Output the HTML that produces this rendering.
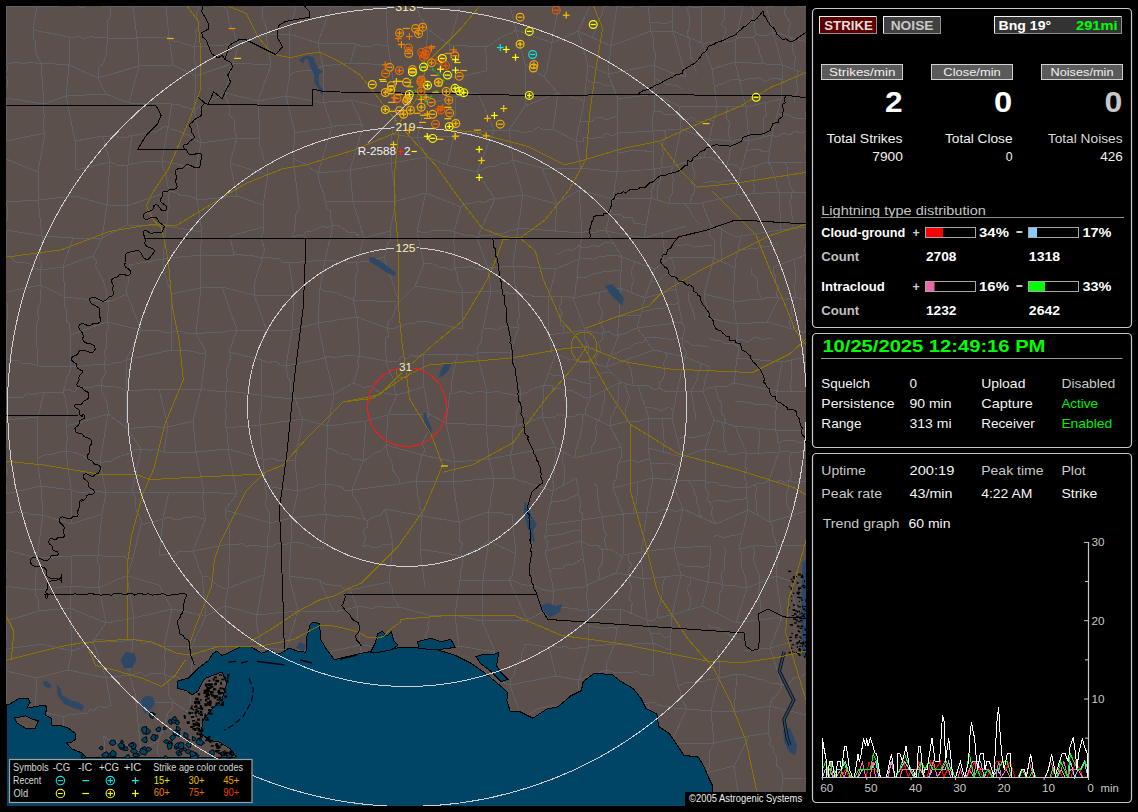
<!DOCTYPE html>
<html><head><meta charset="utf-8"><style>
html,body{margin:0;padding:0;background:#000;width:1138px;height:812px;overflow:hidden}
svg text{font-family:"Liberation Sans",sans-serif}
</style></head><body>
<svg width="1138" height="812" viewBox="0 0 1138 812" style="position:absolute;left:0;top:0"><defs><clipPath id="mc"><rect x="6" y="6" width="800" height="800"/></clipPath></defs><g clip-path="url(#mc)"><rect x="6" y="6" width="800" height="800" fill="#5c504c"/><g fill="none" stroke="#5f6367" stroke-width="1" shape-rendering="crispEdges"><polyline points="6,6 37,6"/><polyline points="6,6 6,32"/><polyline points="37,6 42,6 48,6 56,7 61,5 65,4 71,6"/><polyline points="37,6 33,30"/><polyline points="71,6 75,5 82,8 88,5 93,5 100,5 105,7 110,6"/><polyline points="110,6 133,6"/><polyline points="110,6 111,11 110,17 107,22 108,26 107,33 108,38"/><polyline points="133,6 166,6"/><polyline points="133,6 137,38"/><polyline points="166,6 200,6"/><polyline points="166,6 169,37"/><polyline points="200,6 205,5 213,6 218,7 224,6"/><polyline points="200,6 198,10 196,14 198,22 198,28 195,32 197,36 195,43 194,47"/><polyline points="224,6 227,10 228,16 229,22 232,28 234,32 236,39 239,44"/><polyline points="262,6 296,6"/><polyline points="262,6 262,11 262,18 265,23 266,27 266,35"/><polyline points="296,6 331,6"/><polyline points="296,6 289,34"/><polyline points="331,6 351,6"/><polyline points="331,6 318,43"/><polyline points="351,6 354,5 362,6 365,7 370,6 377,8 381,6 386,6"/><polyline points="386,6 415,6"/><polyline points="386,6 388,46"/><polyline points="415,6 422,8 425,8 430,5 437,5 442,8 447,5 453,7 460,6"/><polyline points="415,6 418,11 420,17 425,23 428,29"/><polyline points="460,6 489,6"/><polyline points="460,6 449,45"/><polyline points="489,6 510,6"/><polyline points="510,6 559,6"/><polyline points="510,6 516,30"/><polyline points="559,6 558,11 557,16 555,23 555,26 553,32 552,38 552,43"/><polyline points="590,6 594,4 602,4 606,7 611,5 617,6"/><polyline points="590,6 578,31"/><polyline points="617,6 622,7 627,7 631,7 637,5 644,7 648,6"/><polyline points="617,6 611,46"/><polyline points="648,6 672,6"/><polyline points="648,6 651,31"/><polyline points="672,6 677,7 683,5 688,6 697,8 701,6"/><polyline points="672,6 673,31"/><polyline points="701,6 743,6"/><polyline points="701,6 702,43"/><polyline points="743,6 736,39"/><polyline points="766,6 771,7 779,4 783,4 789,6 794,5 801,7 806,6"/><polyline points="766,6 773,32"/><polyline points="806,6 806,42"/><polyline points="6,32 6,63"/><polyline points="33,30 69,37"/><polyline points="33,30 33,37 35,41 35,46 36,52 38,58 41,63"/><polyline points="69,37 75,37 79,36 84,39 91,36 96,38 105,37 108,38"/><polyline points="69,37 69,65"/><polyline points="108,38 137,38"/><polyline points="108,38 107,44 106,47 106,55 105,58 103,64 99,67 98,72 98,78"/><polyline points="137,38 169,37"/><polyline points="137,38 139,66"/><polyline points="169,37 173,41 177,41 185,44 190,45 194,47"/><polyline points="169,37 173,65"/><polyline points="194,47 239,44"/><polyline points="194,47 196,76"/><polyline points="239,44 266,35"/><polyline points="239,44 233,63"/><polyline points="266,35 289,34"/><polyline points="266,35 271,65"/><polyline points="289,34 318,43"/><polyline points="289,34 290,75"/><polyline points="318,43 356,44"/><polyline points="318,43 323,66"/><polyline points="356,44 361,46 366,46 372,46 376,44 381,45 388,46"/><polyline points="356,44 354,50 352,57 350,63"/><polyline points="388,46 391,65"/><polyline points="428,29 449,45"/><polyline points="428,29 424,68"/><polyline points="449,45 485,47"/><polyline points="449,45 453,78"/><polyline points="485,47 490,45 497,40 500,38 508,34 512,33 516,30"/><polyline points="485,47 486,54 487,60 486,65 486,71"/><polyline points="516,30 552,43"/><polyline points="516,30 525,64"/><polyline points="552,43 578,31"/><polyline points="552,43 551,49 550,53 549,60 547,66 547,70 544,77"/><polyline points="578,31 611,46"/><polyline points="578,31 588,65"/><polyline points="611,46 651,31"/><polyline points="611,46 608,74"/><polyline points="651,31 673,31"/><polyline points="651,31 653,37 653,44 653,48 655,52 655,60 654,65"/><polyline points="673,31 702,43"/><polyline points="673,31 686,77"/><polyline points="702,43 707,43 712,42 720,41 724,42 732,41 736,39"/><polyline points="702,43 712,69"/><polyline points="736,39 741,37 745,37 753,38 756,34 762,36 768,35 773,32"/><polyline points="736,39 735,62"/><polyline points="773,32 806,42"/><polyline points="773,32 782,65"/><polyline points="806,42 806,74"/><polyline points="6,63 11,63 18,62 24,64 28,62 36,63 41,63"/><polyline points="6,63 8,70 5,74 8,81 7,86 5,92 6,98"/><polyline points="41,63 69,65"/><polyline points="41,63 44,104"/><polyline points="69,65 98,78"/><polyline points="69,65 66,96"/><polyline points="98,78 139,66"/><polyline points="98,78 106,94"/><polyline points="139,66 173,65"/><polyline points="139,66 129,103"/><polyline points="173,65 196,76"/><polyline points="196,76 233,63"/><polyline points="196,76 194,110"/><polyline points="233,63 271,65"/><polyline points="233,63 225,93"/><polyline points="271,65 258,101"/><polyline points="290,75 295,72 302,71 306,70 313,71 318,68 323,66"/><polyline points="290,75 286,96"/><polyline points="323,66 350,63"/><polyline points="323,66 324,103"/><polyline points="350,63 391,65"/><polyline points="391,65 397,111"/><polyline points="424,68 453,78"/><polyline points="424,68 425,105"/><polyline points="453,78 486,71"/><polyline points="525,64 544,77"/><polyline points="525,64 525,106"/><polyline points="544,77 558,93"/><polyline points="588,65 608,74"/><polyline points="588,65 584,102"/><polyline points="608,74 654,65"/><polyline points="608,74 618,99"/><polyline points="654,65 658,67 665,70 669,72 676,74 679,75 686,77"/><polyline points="654,65 655,94"/><polyline points="712,69 735,62"/><polyline points="712,69 717,106"/><polyline points="735,62 782,65"/><polyline points="735,62 746,107"/><polyline points="782,65 806,74"/><polyline points="782,65 782,70 783,76 782,81 781,88 782,93 781,99"/><polyline points="806,74 807,78 808,84 806,90 807,97 806,98 806,105"/><polyline points="6,98 44,104"/><polyline points="6,98 6,141"/><polyline points="44,104 66,96"/><polyline points="44,104 43,111 45,117 43,121 43,126 45,133"/><polyline points="66,96 106,94"/><polyline points="66,96 75,141"/><polyline points="106,94 129,103"/><polyline points="129,103 172,104"/><polyline points="172,104 179,104 183,107 189,108 194,110"/><polyline points="172,104 168,126"/><polyline points="194,110 225,93"/><polyline points="194,110 201,143"/><polyline points="225,93 258,101"/><polyline points="225,93 226,98 228,103 230,110 229,115 234,119 234,129 235,133 237,138"/><polyline points="258,101 286,96"/><polyline points="258,101 260,138"/><polyline points="286,96 324,103"/><polyline points="286,96 295,133"/><polyline points="324,103 328,102 336,101 342,101 345,101 351,100"/><polyline points="324,103 332,127"/><polyline points="351,100 397,111"/><polyline points="351,100 363,126"/><polyline points="397,111 425,105"/><polyline points="397,111 392,134"/><polyline points="425,105 456,96"/><polyline points="425,105 417,138"/><polyline points="456,96 463,96 467,92 473,94 478,93"/><polyline points="456,96 454,136"/><polyline points="478,93 494,130"/><polyline points="525,106 558,93"/><polyline points="525,106 509,130"/><polyline points="558,93 563,96 567,95 575,99 579,98 584,102"/><polyline points="558,93 553,129"/><polyline points="584,102 576,141"/><polyline points="618,99 655,94"/><polyline points="618,99 617,133"/><polyline points="655,94 679,106"/><polyline points="655,94 654,99 655,107 654,111 653,116 652,121 652,126 653,131"/><polyline points="679,106 717,106"/><polyline points="679,106 681,129"/><polyline points="717,106 746,107"/><polyline points="717,106 709,140"/><polyline points="746,107 781,99"/><polyline points="746,107 749,141"/><polyline points="781,99 772,135"/><polyline points="806,105 807,111 805,114 807,120 807,125 806,131"/><polyline points="6,141 45,133"/><polyline points="45,133 38,172"/><polyline points="75,141 103,136"/><polyline points="75,141 76,170"/><polyline points="103,136 110,136 115,135 119,138 127,137 132,135"/><polyline points="103,136 110,162"/><polyline points="132,135 137,135 141,134 148,133 154,131 157,131 164,127 168,126"/><polyline points="132,135 128,165"/><polyline points="168,126 171,129 178,131 183,133 190,136 194,139 201,143"/><polyline points="168,126 162,161"/><polyline points="201,143 237,138"/><polyline points="201,143 196,168"/><polyline points="237,138 260,138"/><polyline points="237,138 230,163"/><polyline points="260,138 259,145 262,150 262,154 264,160 268,164 267,169 268,175"/><polyline points="295,133 332,127"/><polyline points="295,133 293,158"/><polyline points="332,127 339,125 342,125 349,125 354,124 358,124 363,126"/><polyline points="332,127 318,173"/><polyline points="363,126 350,170"/><polyline points="392,134 417,138"/><polyline points="392,134 391,163"/><polyline points="417,138 454,136"/><polyline points="417,138 427,157"/><polyline points="454,136 494,130"/><polyline points="454,136 447,165"/><polyline points="494,130 509,130"/><polyline points="494,130 477,172"/><polyline points="509,130 514,130 521,132 528,132 533,131 538,127 542,129 548,129 553,129"/><polyline points="509,130 513,160"/><polyline points="553,129 576,141"/><polyline points="576,141 583,142 584,137 593,139 597,137 603,137 605,133 613,136 617,133"/><polyline points="576,141 581,168"/><polyline points="617,133 653,131"/><polyline points="617,133 617,172"/><polyline points="653,131 681,129"/><polyline points="653,131 654,169"/><polyline points="681,129 709,140"/><polyline points="681,129 673,166"/><polyline points="709,140 713,140 720,139 723,141 728,140 733,142 738,139 744,140 749,141"/><polyline points="709,140 704,157"/><polyline points="749,141 772,135"/><polyline points="749,141 741,170"/><polyline points="772,135 777,137 783,133 791,135 794,131 801,133 806,131"/><polyline points="772,135 768,162"/><polyline points="806,131 806,137 806,143 804,147 806,151 808,156 806,163"/><polyline points="6,159 38,172"/><polyline points="38,172 38,200"/><polyline points="76,170 110,162"/><polyline points="110,162 117,165 123,166 128,165"/><polyline points="110,162 107,205"/><polyline points="128,165 135,163 138,163 143,162 149,161 156,162 162,161"/><polyline points="128,165 127,206"/><polyline points="162,161 196,168"/><polyline points="162,161 162,165 166,173 166,175 167,181 168,187 170,191"/><polyline points="196,168 197,200"/><polyline points="230,163 268,175"/><polyline points="230,163 237,196"/><polyline points="268,175 263,205"/><polyline points="293,158 298,161 306,164 310,168 318,173"/><polyline points="293,158 299,206"/><polyline points="318,173 350,170"/><polyline points="318,173 318,176 320,184 322,189 324,194 325,201"/><polyline points="350,170 391,163"/><polyline points="350,170 353,202"/><polyline points="391,163 427,157"/><polyline points="391,163 396,201"/><polyline points="427,157 447,165"/><polyline points="427,157 426,193"/><polyline points="447,165 477,172"/><polyline points="477,172 483,169 488,167 495,166 496,166 502,163 508,163 513,160"/><polyline points="477,172 495,199"/><polyline points="513,160 542,168"/><polyline points="513,160 523,195"/><polyline points="542,168 581,168"/><polyline points="542,168 557,204"/><polyline points="581,168 617,172"/><polyline points="617,172 654,169"/><polyline points="617,172 613,199"/><polyline points="654,169 673,166"/><polyline points="654,169 655,175 653,181 654,186 651,191 651,198"/><polyline points="673,166 704,157"/><polyline points="673,166 671,172 673,178 673,183 672,188 672,194 669,199 670,204"/><polyline points="704,157 711,157 715,160 721,163 727,166 731,164 737,166 741,170"/><polyline points="741,170 768,162"/><polyline points="741,170 736,195"/><polyline points="768,162 806,163"/><polyline points="768,162 771,166 774,175 776,181 777,187 779,192"/><polyline points="806,163 806,192"/><polyline points="6,202 38,200"/><polyline points="6,202 7,206 7,214 7,219 5,224 6,230"/><polyline points="38,200 75,196"/><polyline points="38,200 42,236"/><polyline points="75,196 107,205"/><polyline points="107,205 127,206"/><polyline points="107,205 102,238"/><polyline points="127,206 170,191"/><polyline points="127,206 127,225"/><polyline points="170,191 177,193 181,196 185,195 192,197 197,200"/><polyline points="170,191 168,197 169,205 169,208 167,214 167,222 166,226"/><polyline points="197,200 237,196"/><polyline points="197,200 202,232"/><polyline points="237,196 263,205"/><polyline points="263,205 263,227"/><polyline points="299,206 299,209 295,216 295,222 295,225 294,232 292,236"/><polyline points="325,201 353,202"/><polyline points="325,201 327,209 331,211 330,218 333,225"/><polyline points="353,202 396,201"/><polyline points="353,202 364,238"/><polyline points="396,201 426,193"/><polyline points="396,201 390,231"/><polyline points="426,193 461,207"/><polyline points="426,193 417,231"/><polyline points="461,207 467,203 471,204 478,201 485,203 489,200 495,199"/><polyline points="461,207 454,232"/><polyline points="495,199 523,195"/><polyline points="495,199 477,238"/><polyline points="523,195 557,204"/><polyline points="523,195 518,228"/><polyline points="557,204 579,190"/><polyline points="557,204 555,231"/><polyline points="579,190 613,199"/><polyline points="579,190 582,233"/><polyline points="613,199 651,198"/><polyline points="613,199 606,231"/><polyline points="651,198 670,204"/><polyline points="651,198 644,238"/><polyline points="670,204 702,203"/><polyline points="702,203 736,195"/><polyline points="702,203 710,223"/><polyline points="736,195 779,192"/><polyline points="779,192 806,192"/><polyline points="779,192 781,230"/><polyline points="806,192 806,227"/><polyline points="6,230 42,236"/><polyline points="6,230 6,256"/><polyline points="42,236 73,238"/><polyline points="42,236 42,241 41,249 40,255 39,259 42,265 40,270"/><polyline points="73,238 102,238"/><polyline points="73,238 63,267"/><polyline points="102,238 127,225"/><polyline points="102,238 93,256"/><polyline points="127,225 166,226"/><polyline points="166,226 202,232"/><polyline points="166,226 163,259"/><polyline points="202,232 200,255"/><polyline points="230,236 263,227"/><polyline points="230,236 234,255"/><polyline points="263,227 264,231 261,237 262,242 264,247 264,252 262,258"/><polyline points="292,236 296,236 303,235 307,231 312,231 316,229 324,226 327,228 333,225"/><polyline points="333,225 337,225 345,230 348,232 355,232 360,238 364,238"/><polyline points="333,225 325,260"/><polyline points="364,238 390,231"/><polyline points="364,238 362,244 360,252 359,257 356,263"/><polyline points="390,231 390,235 390,241 386,246 386,253 384,257"/><polyline points="417,231 421,232 426,233 434,230 437,230 444,230 449,230 454,232"/><polyline points="417,231 424,264"/><polyline points="454,232 458,233 468,236 473,235 477,238"/><polyline points="454,232 455,236 453,243 455,247 454,252 455,257 454,262 455,268"/><polyline points="477,238 481,236 488,235 491,236 498,233 502,234 509,231 514,230 518,228"/><polyline points="477,238 488,268"/><polyline points="518,228 555,231"/><polyline points="518,228 513,266"/><polyline points="555,231 582,233"/><polyline points="582,233 587,231 595,233 599,230 606,231"/><polyline points="582,233 579,259"/><polyline points="606,231 644,238"/><polyline points="606,231 622,257"/><polyline points="644,238 686,226"/><polyline points="710,223 714,227 720,227 724,231 730,234 734,236 741,236"/><polyline points="710,223 710,230 709,235 714,240 714,247 714,251 714,258"/><polyline points="741,236 781,230"/><polyline points="741,236 740,241 738,247 738,250 736,258 735,261 735,268"/><polyline points="781,230 806,227"/><polyline points="806,227 807,231 807,239 807,242 804,251 806,255"/><polyline points="6,256 10,257 17,263 22,262 30,264 35,268 40,270"/><polyline points="40,270 63,267"/><polyline points="40,270 41,285"/><polyline points="63,267 93,256"/><polyline points="63,267 65,297"/><polyline points="93,256 97,262 95,265 98,271 102,278 104,283 105,287 107,292 106,297 109,302"/><polyline points="129,265 163,259"/><polyline points="129,265 131,271 128,275 128,284 126,288 127,294"/><polyline points="163,259 200,255"/><polyline points="163,259 163,266 164,272 165,275 168,284 170,289 171,294"/><polyline points="200,255 234,255"/><polyline points="200,255 201,288"/><polyline points="234,255 238,254 247,256 249,255 258,257 262,258"/><polyline points="262,258 267,257 271,258 279,259 282,262 289,263"/><polyline points="262,258 261,263 259,268 257,274 256,278 254,286 255,289 254,295"/><polyline points="289,263 325,260"/><polyline points="289,263 294,295"/><polyline points="325,260 356,263"/><polyline points="325,260 320,288"/><polyline points="356,263 361,262 369,261 375,258 378,259 384,257"/><polyline points="356,263 358,269 357,273 355,280 356,284 355,291 355,295 353,300"/><polyline points="384,257 399,302"/><polyline points="424,264 431,263 435,265 439,267 443,267 451,270 455,268"/><polyline points="424,264 415,286"/><polyline points="455,268 462,267 466,268 469,266 475,268 482,270 488,268"/><polyline points="455,268 457,274 458,282 462,289 462,293"/><polyline points="488,268 513,266"/><polyline points="488,268 491,291"/><polyline points="513,266 556,269"/><polyline points="513,266 515,274 514,278 514,281 516,287 517,294"/><polyline points="556,269 579,259"/><polyline points="556,269 549,296"/><polyline points="579,259 582,258 591,259 595,259 600,256 606,256 610,255 615,255 622,257"/><polyline points="579,259 578,266 577,268 577,276 577,281 575,288 575,294 573,298"/><polyline points="622,257 655,269"/><polyline points="622,257 620,288"/><polyline points="655,269 671,257"/><polyline points="655,269 645,298"/><polyline points="671,257 714,258"/><polyline points="671,257 673,263 675,269 673,273 675,279 675,285 676,289"/><polyline points="714,258 735,268"/><polyline points="714,258 704,294"/><polyline points="735,268 733,301"/><polyline points="773,267 806,255"/><polyline points="773,267 773,273 776,277 775,282 779,286 776,294 779,298"/><polyline points="806,255 805,262 807,264 807,269 806,276 804,282 805,284 807,289 804,296 806,300"/><polyline points="6,292 41,285"/><polyline points="6,292 4,298 6,302 8,307 7,311 8,320 6,322 6,328"/><polyline points="41,285 65,297"/><polyline points="41,285 41,289 40,298 41,300 39,306 37,313 39,317 37,323 36,328"/><polyline points="65,297 109,302"/><polyline points="65,297 64,304 66,309 66,313 66,321 69,323 70,330 70,335"/><polyline points="109,302 127,294"/><polyline points="109,302 107,322"/><polyline points="127,294 141,330"/><polyline points="171,294 201,288"/><polyline points="171,294 171,332"/><polyline points="201,288 222,287"/><polyline points="201,288 196,333"/><polyline points="222,287 254,295"/><polyline points="222,287 237,330"/><polyline points="254,295 294,295"/><polyline points="254,295 267,331"/><polyline points="294,295 292,330"/><polyline points="320,288 326,292 329,291 337,293 343,296 347,297 353,300"/><polyline points="320,288 318,323"/><polyline points="353,300 399,302"/><polyline points="353,300 357,317"/><polyline points="399,302 415,286"/><polyline points="399,302 395,308 395,310 392,318 389,321 387,328"/><polyline points="415,286 462,293"/><polyline points="462,293 491,291"/><polyline points="462,293 462,329"/><polyline points="491,291 517,294"/><polyline points="491,291 483,329"/><polyline points="517,294 522,293 530,295 535,297 539,296 543,297 549,296"/><polyline points="517,294 518,299 518,306 519,311 520,317 517,320 519,327"/><polyline points="549,296 557,296 561,297 567,296 573,298"/><polyline points="549,296 548,335"/><polyline points="573,298 620,288"/><polyline points="573,298 585,330"/><polyline points="620,288 645,298"/><polyline points="620,288 621,294 621,298 620,303 619,308 620,312 618,318 619,325 617,331 619,335"/><polyline points="645,298 676,289"/><polyline points="645,298 637,328"/><polyline points="676,289 682,322"/><polyline points="704,294 733,301"/><polyline points="704,294 704,299 708,308 707,310 708,318"/><polyline points="733,301 739,302 745,300 748,300 753,299 760,300 763,299 768,297 774,297 779,298"/><polyline points="733,301 734,309 736,311 735,318 737,324"/><polyline points="779,298 785,300 790,298 794,297 802,299 806,300"/><polyline points="779,298 767,322"/><polyline points="806,300 805,307 807,311 806,316 806,324 805,329 806,333"/><polyline points="6,328 6,359"/><polyline points="36,328 38,366"/><polyline points="70,335 107,322"/><polyline points="70,335 71,367"/><polyline points="107,322 141,330"/><polyline points="107,322 109,328 107,330 106,337 106,344 106,349 104,352 106,358 104,364"/><polyline points="141,330 146,330 153,331 159,330 163,332 171,332"/><polyline points="141,330 126,360"/><polyline points="171,332 174,331 180,331 184,332 189,334 196,333"/><polyline points="171,332 171,350"/><polyline points="196,333 200,334 207,332 211,333 217,332 223,332 228,331 232,330 237,330"/><polyline points="196,333 206,352"/><polyline points="237,330 267,331"/><polyline points="237,330 229,352"/><polyline points="267,331 292,330"/><polyline points="292,330 318,323"/><polyline points="292,330 286,366"/><polyline points="318,323 357,317"/><polyline points="318,323 325,358"/><polyline points="357,317 387,328"/><polyline points="357,317 360,356"/><polyline points="387,328 394,329 399,326 402,326 409,323 415,323 417,322 424,321"/><polyline points="387,328 389,336 385,339 386,345 385,349 386,355 386,361"/><polyline points="424,321 462,329"/><polyline points="483,329 487,328 494,329 498,330 503,326 507,326 515,328 519,327"/><polyline points="483,329 481,336 482,340 477,349 477,353"/><polyline points="519,327 510,352"/><polyline points="548,335 585,330"/><polyline points="548,335 550,341 551,346 552,353 555,356"/><polyline points="585,330 592,332 598,333 603,333 608,331 614,335 619,335"/><polyline points="585,330 584,336 586,342 589,346 588,352 589,356 589,362"/><polyline points="619,335 627,333 632,330 637,328"/><polyline points="619,335 606,367"/><polyline points="637,328 682,322"/><polyline points="637,328 641,333 645,338 650,346 654,350"/><polyline points="682,322 684,327 684,332 683,336 682,342 683,347 687,352 685,357"/><polyline points="708,318 737,324"/><polyline points="737,324 767,322"/><polyline points="737,324 737,330 738,336 736,339 738,347 739,353 737,358"/><polyline points="767,322 806,333"/><polyline points="806,333 806,357"/><polyline points="6,359 11,360 19,361 21,363 26,363 32,364 38,366"/><polyline points="6,359 6,399"/><polyline points="38,366 71,367"/><polyline points="71,367 104,364"/><polyline points="71,367 69,374 67,377 66,381 65,385 63,392"/><polyline points="104,364 111,364 116,362 122,362 126,360"/><polyline points="104,364 105,370 105,375 101,380 101,385"/><polyline points="126,360 171,350"/><polyline points="126,360 126,391"/><polyline points="171,350 178,350 179,351 185,350 190,351 195,352 202,354 206,352"/><polyline points="206,352 201,389"/><polyline points="229,352 262,360"/><polyline points="229,352 231,356 229,363 226,370 226,376 228,380 226,384 226,391"/><polyline points="262,360 268,363 275,361 281,365 286,366"/><polyline points="262,360 261,395"/><polyline points="286,366 325,358"/><polyline points="286,366 287,373 288,378 290,381 290,390 294,395 295,399"/><polyline points="325,358 328,356 335,358 341,356 344,356 348,355 355,356 360,356"/><polyline points="325,358 334,394"/><polyline points="360,356 386,361"/><polyline points="360,356 357,362 359,365 357,371 355,379 353,383"/><polyline points="386,361 390,362 398,361 402,356 407,359 411,355 416,357 423,354"/><polyline points="386,361 387,365 390,373 392,376 394,382 395,391 397,395"/><polyline points="423,354 458,354"/><polyline points="423,354 424,387"/><polyline points="458,354 465,354 472,356 477,353"/><polyline points="458,354 456,360 455,366 453,372 453,375 451,384 452,389 450,393"/><polyline points="477,353 510,352"/><polyline points="477,353 487,392"/><polyline points="510,352 510,355 514,363 514,366 516,372 515,379 518,385 520,388 520,395"/><polyline points="555,356 560,355 568,359 573,359 579,362 585,363 589,362"/><polyline points="555,356 544,385"/><polyline points="589,362 606,367"/><polyline points="589,362 591,397"/><polyline points="606,367 654,350"/><polyline points="606,367 621,382"/><polyline points="654,350 685,357"/><polyline points="685,357 710,367"/><polyline points="685,357 677,392"/><polyline points="710,367 708,371 706,377 704,386 703,391"/><polyline points="737,358 782,362"/><polyline points="737,358 734,383"/><polyline points="782,362 806,357"/><polyline points="782,362 777,391"/><polyline points="806,357 806,392"/><polyline points="6,399 10,397 15,398 23,397 28,393 32,395 39,393 44,392"/><polyline points="6,399 5,404 7,411 6,413 6,420"/><polyline points="44,392 63,392"/><polyline points="44,392 38,417"/><polyline points="63,392 67,389 75,392 78,387 85,387 91,388 97,385 101,385"/><polyline points="63,392 65,397 66,404 67,409 68,415 66,421 67,426"/><polyline points="101,385 106,387 113,386 121,388 126,391"/><polyline points="101,385 102,392 105,398 107,403 108,409 108,414"/><polyline points="126,391 159,389"/><polyline points="126,391 127,428"/><polyline points="159,389 201,389"/><polyline points="159,389 168,427"/><polyline points="201,389 207,390 215,391 220,391 226,391"/><polyline points="201,389 193,421"/><polyline points="226,391 261,395"/><polyline points="226,391 225,398 227,401 226,407 225,411 227,416 225,422 226,428"/><polyline points="261,395 265,396 271,397 278,397 283,398 288,398 295,399"/><polyline points="261,395 261,401 262,407 260,414 259,418 260,425"/><polyline points="295,399 334,394"/><polyline points="295,399 299,408 300,414 303,419"/><polyline points="334,394 353,383"/><polyline points="334,394 333,400 332,406 330,411 330,416 328,422 327,426"/><polyline points="353,383 359,385 364,388 370,386 375,389 379,392 385,393 390,394 397,395"/><polyline points="397,395 424,387"/><polyline points="397,395 388,415"/><polyline points="424,387 429,414"/><polyline points="450,393 455,393 462,391 466,392 471,394 477,391 484,392 487,392"/><polyline points="450,393 446,423"/><polyline points="487,392 493,392 497,391 503,393 509,394 514,395 520,395"/><polyline points="487,392 486,425"/><polyline points="520,395 528,392 532,389 539,387 544,385"/><polyline points="520,395 521,399 520,405 517,411 516,416 516,423 514,427"/><polyline points="544,385 552,385 553,389 559,388 564,391 571,390 574,392 579,394 585,398 591,397"/><polyline points="544,385 542,417"/><polyline points="591,397 621,382"/><polyline points="591,397 588,403 585,411 585,414"/><polyline points="621,382 627,384 631,385 638,386"/><polyline points="621,382 618,387 619,392 618,399 617,406 614,411 613,415 610,419 610,426"/><polyline points="638,386 642,385 649,386 654,390 660,388 666,392 672,391 677,392"/><polyline points="638,386 649,418"/><polyline points="677,392 703,391"/><polyline points="677,392 672,419"/><polyline points="703,391 708,388 714,387 720,386 725,387 729,385 734,383"/><polyline points="703,391 714,420"/><polyline points="734,383 777,391"/><polyline points="777,391 806,392"/><polyline points="777,391 775,430"/><polyline points="806,392 806,430"/><polyline points="6,420 38,417"/><polyline points="6,420 7,424 6,429 6,435 7,440 7,446 4,451 5,455 6,461"/><polyline points="38,417 37,459"/><polyline points="67,426 108,414"/><polyline points="67,426 66,431 68,440 66,443 66,451"/><polyline points="108,414 127,428"/><polyline points="108,414 100,462"/><polyline points="127,428 133,429 136,427 144,428 148,426 151,426 158,427 163,427 168,427"/><polyline points="127,428 141,449"/><polyline points="168,427 193,421"/><polyline points="168,427 164,452"/><polyline points="193,421 196,452"/><polyline points="226,428 260,425"/><polyline points="226,428 227,432 227,438 228,443 228,449"/><polyline points="260,425 303,419"/><polyline points="260,425 263,459"/><polyline points="303,419 327,426"/><polyline points="303,419 295,460"/><polyline points="327,426 366,421"/><polyline points="327,426 327,448"/><polyline points="366,421 388,415"/><polyline points="366,421 363,461"/><polyline points="388,415 429,414"/><polyline points="388,415 386,445"/><polyline points="429,414 446,423"/><polyline points="429,414 427,419 429,423 428,431 427,434 423,441 422,444 425,450 422,455"/><polyline points="446,423 486,425"/><polyline points="446,423 455,462"/><polyline points="486,425 514,427"/><polyline points="486,425 489,459"/><polyline points="514,427 542,417"/><polyline points="514,427 512,433 513,439 512,445 512,450 510,455"/><polyline points="542,417 547,417 553,418 559,414 565,416 568,416 575,416 580,414 585,414"/><polyline points="542,417 555,447"/><polyline points="585,414 610,426"/><polyline points="585,414 582,418 582,426 581,433 580,437 578,443 576,449 575,455 574,458"/><polyline points="610,426 617,424 621,423 627,422 631,421 637,422 643,420 649,418"/><polyline points="610,426 621,447"/><polyline points="649,418 672,419"/><polyline points="649,418 648,448"/><polyline points="672,419 682,457"/><polyline points="714,420 735,426"/><polyline points="714,420 705,449"/><polyline points="735,426 775,430"/><polyline points="735,426 747,454"/><polyline points="775,430 806,430"/><polyline points="775,430 777,434 777,440 780,446 779,452"/><polyline points="806,430 806,451"/><polyline points="6,461 6,468 8,471 5,479 6,484 7,487 6,494"/><polyline points="37,459 42,456 48,454 53,454 62,451 66,451"/><polyline points="37,459 41,486"/><polyline points="66,451 72,452 79,454 83,456 87,459 94,461 100,462"/><polyline points="66,451 71,490"/><polyline points="100,462 104,462 112,461 116,458 121,456 124,455 131,453 134,450 141,449"/><polyline points="100,462 106,493"/><polyline points="141,449 148,450 151,450 156,449 164,452"/><polyline points="141,449 132,492"/><polyline points="164,452 196,452"/><polyline points="196,452 228,449"/><polyline points="196,452 204,492"/><polyline points="228,449 263,459"/><polyline points="228,449 237,494"/><polyline points="263,459 268,459 274,458 278,461 283,460 291,460 295,460"/><polyline points="263,459 265,486"/><polyline points="295,460 298,491"/><polyline points="327,448 332,449 338,453 344,454 348,454 353,459 358,459 363,461"/><polyline points="327,448 325,485"/><polyline points="363,461 370,457 373,454 382,450 386,445"/><polyline points="363,461 352,490"/><polyline points="386,445 422,455"/><polyline points="386,445 387,450 388,455 392,463 392,469 395,473 399,479 399,484"/><polyline points="422,455 455,462"/><polyline points="422,455 416,481"/><polyline points="455,462 489,459"/><polyline points="455,462 453,482"/><polyline points="489,459 510,455"/><polyline points="489,459 494,478"/><polyline points="510,455 555,447"/><polyline points="510,455 515,479"/><polyline points="555,447 560,450 569,455 574,458"/><polyline points="555,447 556,453 555,456 555,461 553,468 555,472 552,481 554,484 553,491"/><polyline points="574,458 621,447"/><polyline points="621,447 621,452 621,458 618,464 617,467 617,473 616,479 613,484 613,488"/><polyline points="648,448 682,457"/><polyline points="648,448 653,478"/><polyline points="682,457 705,449"/><polyline points="682,457 671,480"/><polyline points="705,449 711,449 715,449 720,452 726,451 729,454 737,454 743,452 747,454"/><polyline points="705,449 705,481"/><polyline points="747,454 779,452"/><polyline points="747,454 746,458 745,466 747,471 744,477 746,481 746,488"/><polyline points="779,452 784,451 790,452 794,452 800,452 806,451"/><polyline points="779,452 769,480"/><polyline points="806,451 806,482"/><polyline points="6,494 41,486"/><polyline points="41,486 71,490"/><polyline points="41,486 43,515"/><polyline points="71,490 74,491 80,493 87,492 90,491 94,491 102,492 106,493"/><polyline points="71,490 71,524"/><polyline points="106,493 132,492"/><polyline points="106,493 102,514"/><polyline points="132,492 169,492"/><polyline points="132,492 135,497 136,501 135,507 139,516 141,520 141,525"/><polyline points="169,492 204,492"/><polyline points="169,492 163,519"/><polyline points="204,492 237,494"/><polyline points="204,492 202,497 204,504 203,508 204,511 206,518"/><polyline points="237,494 225,510"/><polyline points="265,486 298,491"/><polyline points="265,486 266,491 267,498 265,502 267,509 269,512 269,516 270,523"/><polyline points="298,491 302,490 309,488 314,487 320,484 325,485"/><polyline points="298,491 292,518"/><polyline points="325,485 331,484 337,486 340,486 346,491 352,490"/><polyline points="325,485 325,491 324,495 326,501 324,509 326,514"/><polyline points="352,490 399,484"/><polyline points="352,490 353,496 357,501 359,505 361,509 363,516 367,521"/><polyline points="399,484 416,481"/><polyline points="416,481 453,482"/><polyline points="416,481 416,485 417,489 417,494 419,501 419,507 422,511 422,516"/><polyline points="453,482 494,478"/><polyline points="453,482 459,522"/><polyline points="494,478 515,479"/><polyline points="494,478 493,482 493,488 491,496 490,502 490,507 488,512"/><polyline points="515,479 553,491"/><polyline points="553,491 576,478"/><polyline points="553,491 546,525"/><polyline points="576,478 577,483 579,489 577,493 580,499 581,504 579,511 583,514 582,520"/><polyline points="613,488 653,478"/><polyline points="613,488 623,514"/><polyline points="653,478 671,480"/><polyline points="653,478 647,512"/><polyline points="671,480 705,481"/><polyline points="671,480 683,509"/><polyline points="705,481 709,483 717,482 720,485 726,485 732,487 734,488 740,487 746,488"/><polyline points="705,481 705,488 709,494 707,498 711,505 713,507 711,512 713,519 716,524"/><polyline points="746,488 750,487 759,483 763,484 769,480"/><polyline points="746,488 748,510"/><polyline points="769,480 776,482 781,480 785,483 788,480 796,483 799,481 806,482"/><polyline points="769,480 770,522"/><polyline points="806,482 806,511"/><polyline points="6,512 12,513 15,511 21,513 26,512 30,514 39,515 43,515"/><polyline points="43,515 71,524"/><polyline points="43,515 37,558"/><polyline points="71,524 102,514"/><polyline points="102,514 98,555"/><polyline points="141,525 163,519"/><polyline points="141,525 133,558"/><polyline points="163,519 170,517 173,519 178,520 186,517 191,517 196,516 200,518 206,518"/><polyline points="163,519 159,556"/><polyline points="206,518 193,551"/><polyline points="225,510 270,523"/><polyline points="225,510 225,515 228,521 229,527 229,532 229,539 230,544"/><polyline points="270,523 292,518"/><polyline points="270,523 269,528 269,533 267,540 268,547"/><polyline points="292,518 326,514"/><polyline points="292,518 291,542"/><polyline points="326,514 331,515 338,517 343,515 345,517 351,516 356,518 363,519 367,521"/><polyline points="326,514 327,517 325,523 324,531 325,535 323,541 325,545 323,549"/><polyline points="367,521 373,517 381,515 385,509"/><polyline points="367,521 368,527 363,530 366,538 364,543 362,547"/><polyline points="385,509 422,516"/><polyline points="385,509 393,543"/><polyline points="422,516 459,522"/><polyline points="422,516 420,549"/><polyline points="459,522 488,512"/><polyline points="459,522 459,527 459,533 459,541 463,544 460,549 462,556"/><polyline points="488,512 492,512 500,512 505,514 512,515"/><polyline points="488,512 489,541"/><polyline points="512,515 516,554"/><polyline points="546,525 582,520"/><polyline points="546,525 547,531 544,537 547,540 547,547 545,551"/><polyline points="582,520 623,514"/><polyline points="582,520 581,541"/><polyline points="623,514 647,512"/><polyline points="623,514 623,555"/><polyline points="647,512 650,513 658,512 661,510 669,509 673,511 678,511 683,509"/><polyline points="647,512 641,552"/><polyline points="683,509 716,524"/><polyline points="683,509 674,548"/><polyline points="716,524 748,510"/><polyline points="748,510 770,522"/><polyline points="748,510 739,548"/><polyline points="770,522 806,511"/><polyline points="770,522 773,527 772,532 775,539 777,546"/><polyline points="6,550 37,558"/><polyline points="6,550 7,555 6,560 6,567 4,569 7,575 5,581 6,586"/><polyline points="37,558 72,556"/><polyline points="37,558 35,590"/><polyline points="72,556 98,555"/><polyline points="72,556 71,586"/><polyline points="98,555 103,556 110,556 114,557 123,556 126,558 133,558"/><polyline points="98,555 97,561 100,567 99,573 100,576 98,584 99,588"/><polyline points="133,558 127,576"/><polyline points="159,556 164,554 171,555 176,555 179,551 185,551 193,551"/><polyline points="193,551 230,544"/><polyline points="193,551 202,576"/><polyline points="230,544 237,545 242,543 246,547 251,545 259,546 263,546 268,547"/><polyline points="230,544 228,588"/><polyline points="268,547 273,546 278,543 285,545 291,542"/><polyline points="268,547 264,575"/><polyline points="291,542 296,542 301,543 305,544 311,547 316,547 323,549"/><polyline points="291,542 289,576"/><polyline points="362,547 369,545 371,547 379,547 384,544 389,545 393,543"/><polyline points="393,543 389,582"/><polyline points="420,549 462,556"/><polyline points="420,549 425,587"/><polyline points="462,556 467,554 474,550 480,548 482,545 489,541"/><polyline points="462,556 463,562 462,566 460,573 460,580"/><polyline points="489,541 516,554"/><polyline points="489,541 483,580"/><polyline points="516,554 514,560 514,566 513,570 512,576 509,580"/><polyline points="545,551 581,541"/><polyline points="545,551 554,591"/><polyline points="581,541 587,544 590,546 598,545 601,549 608,549 614,551 619,555 623,555"/><polyline points="581,541 587,585"/><polyline points="623,555 641,552"/><polyline points="623,555 616,573"/><polyline points="641,552 674,548"/><polyline points="641,552 643,579"/><polyline points="674,548 711,546"/><polyline points="674,548 681,575"/><polyline points="711,546 708,582"/><polyline points="739,548 746,548 751,546 754,546 762,545 764,546 771,547 777,546"/><polyline points="739,548 741,553 742,560 741,565 743,571 745,577 746,582 747,588"/><polyline points="777,546 806,545"/><polyline points="777,546 776,552 776,557 778,562 776,567 776,573 776,576"/><polyline points="806,545 806,587"/><polyline points="6,586 35,590"/><polyline points="6,586 6,621"/><polyline points="35,590 71,586"/><polyline points="35,590 35,594 39,601 38,608 39,611"/><polyline points="71,586 99,588"/><polyline points="71,586 70,590 70,597 70,604 70,608"/><polyline points="99,588 103,586 110,583 116,580 122,578 127,576"/><polyline points="99,588 106,623"/><polyline points="127,576 159,585"/><polyline points="127,576 134,618"/><polyline points="159,585 172,609"/><polyline points="202,576 208,577 212,581 217,585 223,588 228,588"/><polyline points="202,576 206,616"/><polyline points="228,588 264,575"/><polyline points="228,588 225,606"/><polyline points="264,575 257,615"/><polyline points="289,576 319,580"/><polyline points="289,576 298,611"/><polyline points="319,580 325,584 331,585 335,585 339,585 345,589 350,590"/><polyline points="319,580 334,612"/><polyline points="350,590 389,582"/><polyline points="350,590 357,607"/><polyline points="389,582 392,588 392,593 394,598 397,603 399,607"/><polyline points="460,580 483,580"/><polyline points="460,580 455,615"/><polyline points="483,580 509,580"/><polyline points="483,580 482,621"/><polyline points="509,580 514,581 521,584 526,585 532,585 537,587 541,589 550,591 554,591"/><polyline points="509,580 527,620"/><polyline points="554,591 560,589 564,589 571,588 576,587 583,587 587,585"/><polyline points="554,591 552,607"/><polyline points="587,585 616,573"/><polyline points="587,585 587,591 586,597 587,600 588,607 588,610"/><polyline points="616,573 622,574 626,574 634,577 638,577 643,579"/><polyline points="643,579 681,575"/><polyline points="643,579 647,620"/><polyline points="681,575 708,582"/><polyline points="681,575 672,615"/><polyline points="708,582 715,582 717,583 724,585 730,585 736,586 740,587 747,588"/><polyline points="708,582 702,606"/><polyline points="747,588 776,576"/><polyline points="747,588 736,623"/><polyline points="776,576 806,587"/><polyline points="776,576 782,617"/><polyline points="806,587 806,611"/><polyline points="6,621 39,611"/><polyline points="6,621 6,625 6,633 7,640 4,643 6,649"/><polyline points="39,611 70,608"/><polyline points="70,608 106,623"/><polyline points="70,608 72,651"/><polyline points="106,623 134,618"/><polyline points="106,623 93,641"/><polyline points="134,618 172,609"/><polyline points="134,618 133,640"/><polyline points="172,609 206,616"/><polyline points="172,609 164,647"/><polyline points="206,616 225,606"/><polyline points="206,616 192,646"/><polyline points="225,606 257,615"/><polyline points="225,606 226,647"/><polyline points="257,615 298,611"/><polyline points="257,615 256,620 257,626 258,633 260,637 258,643 259,649"/><polyline points="298,611 334,612"/><polyline points="298,611 286,649"/><polyline points="334,612 357,607"/><polyline points="357,607 361,606 369,608 372,609 377,606 383,607 389,607 395,608 399,607"/><polyline points="357,607 360,645"/><polyline points="399,607 429,615"/><polyline points="429,615 455,615"/><polyline points="429,615 430,620 427,626 429,628 425,636 428,641 426,645 425,651"/><polyline points="455,615 482,621"/><polyline points="455,615 459,646"/><polyline points="482,621 527,620"/><polyline points="482,621 495,652"/><polyline points="527,620 552,607"/><polyline points="552,607 557,607 563,607 569,608 574,608 579,610 583,610 588,610"/><polyline points="588,610 621,609"/><polyline points="588,610 589,646"/><polyline points="621,609 647,620"/><polyline points="621,609 620,613 620,618 620,624 616,630 616,636 615,641 614,645"/><polyline points="647,620 654,620 656,618 662,617 666,616 672,615"/><polyline points="647,620 653,643"/><polyline points="672,615 702,606"/><polyline points="672,615 670,650"/><polyline points="702,606 736,623"/><polyline points="736,623 782,617"/><polyline points="782,617 806,611"/><polyline points="782,617 770,648"/><polyline points="806,611 806,638"/><polyline points="6,649 42,644"/><polyline points="6,649 6,671"/><polyline points="42,644 72,651"/><polyline points="72,651 76,650 81,648 89,642 93,641"/><polyline points="72,651 68,670"/><polyline points="93,641 98,639 105,640 106,640 111,642 120,641 121,642 127,640 133,640"/><polyline points="93,641 106,678"/><polyline points="133,640 139,639 143,644 148,642 154,644 160,645 164,647"/><polyline points="133,640 129,675"/><polyline points="164,647 192,646"/><polyline points="164,647 166,652 164,656 166,665 165,667 164,673"/><polyline points="192,646 226,647"/><polyline points="192,646 190,653 192,658 192,663 191,668 191,674 192,679 190,685"/><polyline points="226,647 229,646 235,647 242,649 246,650 252,650 259,649"/><polyline points="226,647 228,652 228,657 233,665 236,669 237,675 238,681"/><polyline points="259,649 264,650 269,648 277,649 282,649 286,649"/><polyline points="259,649 269,677"/><polyline points="286,649 320,654"/><polyline points="320,654 360,645"/><polyline points="320,654 330,679"/><polyline points="360,645 388,648"/><polyline points="360,645 365,671"/><polyline points="388,648 425,651"/><polyline points="388,648 395,671"/><polyline points="425,651 459,646"/><polyline points="425,651 425,657 423,661 426,664 425,670 423,677 423,680 423,686"/><polyline points="459,646 495,652"/><polyline points="495,652 482,675"/><polyline points="524,644 549,647"/><polyline points="524,644 524,648 521,654 521,660 516,663 515,670 514,675 510,679 510,685"/><polyline points="549,647 553,646 561,648 564,646 569,648 576,649 581,647 583,648 589,646"/><polyline points="549,647 556,676"/><polyline points="589,646 595,645 601,645 605,645 608,644 614,645"/><polyline points="589,646 579,680"/><polyline points="614,645 653,643"/><polyline points="614,645 612,650 609,658 606,664 606,670"/><polyline points="653,643 670,650"/><polyline points="653,643 653,675"/><polyline points="670,650 678,686"/><polyline points="717,650 718,657 719,661 719,666 720,673 719,678"/><polyline points="744,651 770,648"/><polyline points="770,648 806,638"/><polyline points="770,648 782,685"/><polyline points="806,638 806,673"/><polyline points="6,671 37,678"/><polyline points="6,671 6,716"/><polyline points="37,678 68,670"/><polyline points="37,678 35,710"/><polyline points="68,670 106,678"/><polyline points="106,678 129,675"/><polyline points="106,678 111,705"/><polyline points="129,675 135,674 141,672 145,676 153,673 158,673 164,673"/><polyline points="129,675 132,682 133,688 135,693 135,699 136,704"/><polyline points="164,673 169,677 175,676 181,679 185,682 190,685"/><polyline points="164,673 166,680 169,685 168,689 169,695 173,702"/><polyline points="190,685 194,686 200,684 207,683 212,682 217,685 223,682 228,682 233,682 238,681"/><polyline points="190,685 191,714"/><polyline points="269,677 299,673"/><polyline points="269,677 267,683 268,685 270,691 268,700 267,705 268,710 269,714"/><polyline points="299,673 330,679"/><polyline points="299,673 287,714"/><polyline points="330,679 365,671"/><polyline points="330,679 332,684 331,690 333,696 333,705 334,709"/><polyline points="365,671 395,671"/><polyline points="365,671 361,677 359,681 356,689 356,693 352,698 350,705"/><polyline points="395,671 423,686"/><polyline points="395,671 395,676 394,681 390,685 392,693 388,697 389,702 389,706 387,714"/><polyline points="423,686 445,673"/><polyline points="423,686 417,704"/><polyline points="445,673 451,672 456,675 462,672 465,676 473,674 479,676 482,675"/><polyline points="445,673 449,713"/><polyline points="482,675 510,685"/><polyline points="482,675 484,679 487,685 488,691 490,697 490,703 491,708"/><polyline points="510,685 556,676"/><polyline points="510,685 521,717"/><polyline points="556,676 579,680"/><polyline points="579,680 606,670"/><polyline points="579,680 578,718"/><polyline points="606,670 613,672 617,672 621,672 628,672 632,673 636,671 641,674 648,675 653,675"/><polyline points="606,670 607,673 608,680 611,684 611,690 614,694 616,701 617,706"/><polyline points="678,686 683,684 687,682 694,683 697,681 705,681 709,679 715,679 719,678"/><polyline points="678,686 680,690 681,698 683,702 687,709"/><polyline points="719,678 737,674"/><polyline points="719,678 711,711"/><polyline points="737,674 743,674 747,676 756,678 758,679 764,680 770,683 775,683 782,685"/><polyline points="737,674 734,712"/><polyline points="782,685 789,684 794,677 801,677 806,673"/><polyline points="782,685 780,690 775,697 772,699 770,706"/><polyline points="806,673 806,715"/><polyline points="6,716 10,714 18,715 22,713 30,709 35,710"/><polyline points="35,710 64,717"/><polyline points="35,710 34,747"/><polyline points="64,717 70,714 76,715 80,713 87,713 91,709 93,711 99,706 106,708 111,705"/><polyline points="64,717 63,721 64,727 64,734 65,738"/><polyline points="136,704 173,702"/><polyline points="136,704 141,751"/><polyline points="173,702 191,714"/><polyline points="173,702 172,709 169,711 165,720 166,723 163,731 161,734 158,741"/><polyline points="191,714 197,714 202,714 207,715 211,716 218,715 223,715 227,717"/><polyline points="191,714 203,740"/><polyline points="227,717 269,714"/><polyline points="269,714 287,714"/><polyline points="269,714 256,743"/><polyline points="287,714 334,709"/><polyline points="287,714 291,718 291,725 294,728 295,736 297,739"/><polyline points="334,709 350,705"/><polyline points="334,709 329,747"/><polyline points="350,705 387,714"/><polyline points="350,705 358,742"/><polyline points="387,714 417,704"/><polyline points="387,714 396,745"/><polyline points="417,704 449,713"/><polyline points="417,704 422,750"/><polyline points="449,713 453,714 461,710 463,711 470,711 477,711 479,711 486,708 491,708"/><polyline points="449,713 448,718 449,723 448,728 447,737 448,741 448,747"/><polyline points="491,708 521,717"/><polyline points="491,708 480,744"/><polyline points="521,717 526,715 532,713 537,709 541,708 546,707 552,705"/><polyline points="521,717 517,721 518,731 516,734 513,741"/><polyline points="552,705 578,718"/><polyline points="552,705 555,747"/><polyline points="578,718 617,706"/><polyline points="578,718 583,724 585,731 587,737"/><polyline points="617,706 649,703"/><polyline points="617,706 614,737"/><polyline points="649,703 654,702 659,705 667,707 672,706 675,709 680,708 687,709"/><polyline points="649,703 647,742"/><polyline points="687,709 711,711"/><polyline points="687,709 670,744"/><polyline points="711,711 734,712"/><polyline points="711,711 714,743"/><polyline points="734,712 770,706"/><polyline points="770,706 806,715"/><polyline points="770,706 768,733"/><polyline points="806,715 806,742"/><polyline points="6,735 34,747"/><polyline points="6,735 6,773"/><polyline points="34,747 65,738"/><polyline points="34,747 35,753 36,759 35,766 37,770"/><polyline points="65,738 75,766"/><polyline points="103,736 107,739 115,740 121,744 123,743 132,747 137,750 141,751"/><polyline points="103,736 105,744 104,748 104,755 107,760 108,764 107,770 109,775"/><polyline points="141,751 158,741"/><polyline points="141,751 138,755 138,762 139,767 135,775 135,779"/><polyline points="158,741 158,745 157,752 159,756 162,762 161,768"/><polyline points="203,740 238,742"/><polyline points="203,740 195,766"/><polyline points="238,742 227,776"/><polyline points="256,743 260,741 265,741 273,743 276,741 282,741 285,740 290,740 297,739"/><polyline points="297,739 329,747"/><polyline points="297,739 296,767"/><polyline points="329,747 358,742"/><polyline points="329,747 332,768"/><polyline points="358,742 396,745"/><polyline points="358,742 354,768"/><polyline points="396,745 422,750"/><polyline points="396,745 396,750 395,759 395,763 395,767 396,774 393,780"/><polyline points="422,750 448,747"/><polyline points="422,750 424,754 427,761 427,766"/><polyline points="448,747 480,744"/><polyline points="448,747 452,772"/><polyline points="480,744 513,741"/><polyline points="513,741 555,747"/><polyline points="513,741 510,774"/><polyline points="555,747 554,750 556,759 556,763 555,768 555,774 553,778 555,783"/><polyline points="587,737 593,739 596,738 604,739 610,738 614,737"/><polyline points="587,737 576,773"/><polyline points="614,737 647,742"/><polyline points="614,737 618,766"/><polyline points="647,742 670,744"/><polyline points="647,742 641,781"/><polyline points="670,744 714,743"/><polyline points="670,744 668,748 669,755 669,761 672,766 672,772"/><polyline points="714,743 749,736"/><polyline points="714,743 711,749 709,754 709,762 710,766 706,773"/><polyline points="749,736 768,733"/><polyline points="749,736 734,766"/><polyline points="768,733 771,740 769,745 773,747 774,753 777,758 776,765 779,767 782,772 783,779"/><polyline points="806,742 806,778"/><polyline points="6,773 37,770"/><polyline points="6,773 8,779 7,785 5,789 5,796 8,801 6,806"/><polyline points="37,770 75,766"/><polyline points="37,770 33,806"/><polyline points="75,766 109,775"/><polyline points="75,766 75,770 71,778 70,783 68,790 67,794 65,801 66,806"/><polyline points="109,775 135,779"/><polyline points="109,775 103,806"/><polyline points="135,779 161,768"/><polyline points="135,779 135,783 133,790 131,794 130,799 129,806"/><polyline points="161,768 166,766 173,767 178,767 184,768 189,767 195,766"/><polyline points="161,768 163,773 161,780 163,786 163,789 166,797 166,800 165,806"/><polyline points="195,766 227,776"/><polyline points="227,776 262,770"/><polyline points="227,776 228,806"/><polyline points="262,770 267,771 272,768 278,769 285,767 289,768 296,767"/><polyline points="262,770 259,806"/><polyline points="296,767 332,768"/><polyline points="296,767 303,806"/><polyline points="332,768 337,770 345,769 350,767 354,768"/><polyline points="332,768 328,806"/><polyline points="354,768 393,780"/><polyline points="354,768 350,806"/><polyline points="393,780 394,784 391,792 392,795 389,802 388,806"/><polyline points="427,766 425,806"/><polyline points="452,772 459,775 463,777 470,778 475,780 481,782"/><polyline points="452,772 446,806"/><polyline points="481,782 510,774"/><polyline points="510,774 517,775 523,778 525,775 530,779 538,780 543,781 547,780 555,783"/><polyline points="510,774 510,780 516,786 517,791 516,794 520,801 522,806"/><polyline points="555,783 560,779 566,776 570,777 576,773"/><polyline points="576,773 618,766"/><polyline points="576,773 584,806"/><polyline points="618,766 641,781"/><polyline points="618,766 621,806"/><polyline points="641,781 672,772"/><polyline points="641,781 645,806"/><polyline points="672,772 672,778 674,785 673,787 676,797 675,801 676,806"/><polyline points="706,773 734,766"/><polyline points="706,773 716,806"/><polyline points="734,766 740,806"/><polyline points="783,779 806,778"/><polyline points="783,779 779,806"/><polyline points="6,806 33,806"/><polyline points="33,806 66,806"/><polyline points="66,806 71,807 76,806 81,805 86,808 93,806 99,807 103,806"/><polyline points="103,806 129,806"/><polyline points="129,806 165,806"/><polyline points="165,806 206,806"/><polyline points="206,806 228,806"/><polyline points="228,806 259,806"/><polyline points="303,806 308,807 314,808 319,805 325,804 328,806"/><polyline points="328,806 350,806"/><polyline points="350,806 357,808 360,808 367,804 372,805 376,807 382,805 388,806"/><polyline points="388,806 425,806"/><polyline points="425,806 428,806 434,808 440,805 446,806"/><polyline points="446,806 483,806"/><polyline points="483,806 488,808 496,806 500,804 507,807 510,807 515,806 522,806"/><polyline points="522,806 557,806"/><polyline points="557,806 584,806"/><polyline points="584,806 587,807 594,806 600,805 604,806 611,807 615,806 621,806"/><polyline points="621,806 645,806"/><polyline points="645,806 676,806"/><polyline points="676,806 716,806"/><polyline points="716,806 740,806"/><polyline points="740,806 747,805 751,805 756,808 760,805 768,807 774,807 779,806"/><polyline points="779,806 806,806"/><polyline points="604,6 602,14 600,18 599,19 596,29 595,31 592,37"/><polyline points="650,22 655,22 660,23 665,24 673,21"/><polyline points="686,6 687,9 689,15 689,24 689,28 687,33 689,37"/><polyline points="725,6 724,10 725,19 721,24 725,28 725,34 722,41"/><polyline points="751,6 754,12 752,19 754,22 754,28 757,35"/><polyline points="786,6 784,13 787,18 790,22 790,26 788,32 790,38"/><polyline points="689,38 689,45 691,48 690,55 692,60 694,62 694,67 697,73"/><polyline points="753,36 756,44 758,45 760,54 762,59 762,64"/><polyline points="791,38 793,42 792,49 795,56 796,58 794,65 795,70"/><polyline points="586,79 591,82 599,82 604,85 605,85 613,86"/><polyline points="654,78 660,81 666,84 672,85 677,86 683,89"/><polyline points="715,87 718,85 725,83 731,80 739,79"/><polyline points="739,79 742,81 749,78 756,79 760,77 764,82 771,79 777,78 782,80"/><polyline points="797,70 798,75 796,83 797,85 798,90 794,97 795,103"/><polyline points="580,122 584,121 592,122 595,118 601,117 607,120 611,118 618,116"/><polyline points="654,111 661,111 663,114 668,114 676,114 680,115"/><polyline points="680,118 687,120 692,117 696,121 703,122 708,119 713,121"/><polyline points="728,107 726,114 726,117 730,124 728,131 729,136 730,140"/><polyline points="765,103 765,109 767,115 763,118 764,124 763,134 764,137"/><polyline points="778,114 785,114 790,116 797,119 799,118 806,119"/><polyline points="617,152 620,153 629,151 631,150 638,150 642,150 649,152 654,151"/><polyline points="664,130 666,135 665,139 662,144 663,152 663,156 661,161 663,168"/><polyline points="735,140 731,148 729,153 729,158 727,165"/><polyline points="747,151 750,150 760,149 762,152 770,151"/><polyline points="661,168 660,175 661,177 659,184 657,187 657,193 657,200"/><polyline points="693,160 692,166 694,171 694,179 691,182 694,186 694,193 692,196 690,203"/><polyline points="703,182 708,182 715,181 720,183 725,180 728,181 734,180 739,180"/><polyline points="757,165 754,171 754,179 753,182 755,187 753,194"/><polyline points="784,162 788,167 787,174 789,179 790,186 794,192"/><polyline points="610,214 614,214 619,214 625,218 632,217 634,223 641,224 647,224"/><polyline points="683,203 687,206 692,214 694,218 700,224"/><polyline points="791,192 791,199 789,201 792,208 791,214 792,216 794,222 792,228"/><polyline points="556,255 562,252 568,249 571,251 576,248 581,244"/><polyline points="580,247 587,248 593,245 598,247 604,243 608,242 614,244"/><polyline points="662,233 663,240 664,247 664,251 663,255 664,263"/><polyline points="677,245 680,246 686,244 694,247 695,247 703,246 706,245 712,245"/><polyline points="722,228 721,233 721,238 720,245 722,249 721,256 722,262"/><polyline points="738,250 742,249 748,249 758,248 759,245 765,247 770,246 778,243"/><polyline points="576,277 582,277 587,277 593,274 598,273 606,271 609,272 616,270 621,271"/><polyline points="635,262 632,269 631,274 634,279 633,283 631,288 631,293"/><polyline points="651,281 659,281 663,276 669,274 674,274"/><polyline points="752,268 751,274 755,276 758,282 757,289 759,293 762,299"/><polyline points="794,260 795,267 796,269 795,278 795,283 794,286 796,295 793,299"/><polyline points="561,297 562,300 559,308 563,314 560,316 560,325 564,326 563,333"/><polyline points="599,292 600,297 598,302 601,308 603,314 599,322 603,328 603,332"/><polyline points="619,317 626,315 630,315 636,315 641,315"/><polyline points="642,312 648,310 650,310 658,308 664,308 669,305 676,304 679,302"/><polyline points="688,291 688,296 689,301 692,308 694,315 694,320"/><polyline points="794,299 792,303 791,313 794,315 789,321 791,329"/><polyline points="602,332 602,340 598,343 601,350 599,353 595,358 597,364"/><polyline points="611,355 615,354 623,350 627,348 630,348 634,344 643,342 646,340"/><polyline points="644,337 651,338 658,337 660,338 669,339 674,339 676,338 684,338"/><polyline points="684,341 687,342 692,345 700,345 704,347 709,346"/><polyline points="709,338 714,340 719,340 724,343 733,343 737,346"/><polyline points="737,340 741,339 747,342 754,338 756,337 764,340 766,338 773,339"/><polyline points="549,373 553,375 561,376 565,377 572,380 575,379 578,381 585,383 590,383"/><polyline points="590,377 596,378 599,375 605,372 612,373"/><polyline points="627,360 628,364 631,370 632,377 632,384"/><polyline points="666,353 666,358 663,364 664,366 664,376 662,381 659,382 659,389"/><polyline points="700,363 700,370 697,375 697,380 694,386 691,391"/><polyline points="792,360 791,363 792,373 792,374 791,382 790,385 792,392"/><polyline points="566,391 564,399 567,404 567,408 566,416"/><polyline points="605,390 604,393 605,399 602,407 603,410 600,417 599,421"/><polyline points="627,383 625,387 629,396 629,399 626,408 625,411 626,418 627,423"/><polyline points="645,407 653,408 655,408 661,411 669,407 673,410"/><polyline points="691,391 692,395 693,402 693,408 695,412 696,420"/><polyline points="715,388 716,390 719,400 721,403 721,409 721,412 724,416 726,423"/><polyline points="735,402 740,401 745,402 751,403 757,405 758,404 767,404 773,407 776,406"/><polyline points="598,420 595,427 597,432 596,437 595,442 591,448 592,454"/><polyline points="663,419 662,424 663,428 663,438 665,440 663,446 664,452"/><polyline points="677,439 684,437 687,437 694,438 701,435 705,435 710,432"/><polyline points="722,422 724,429 724,432 723,437 725,447 725,451"/><polyline points="758,428 760,432 759,440 760,443 758,448 758,454"/><polyline points="777,443 783,441 788,440 796,441 800,443 806,441"/><polyline points="564,452 562,458 563,463 565,468 564,474 565,480 562,486"/><polyline points="618,463 621,462 631,460 635,461 638,463 647,459 650,460"/><polyline points="651,463 656,463 660,464 668,463 674,465 678,465"/><polyline points="791,452 790,456 789,462 791,471 792,474 789,481"/><polyline points="550,504 555,501 560,501 566,500 570,498 579,494"/><polyline points="594,483 598,488 597,496 599,502 598,505 600,511 603,517"/><polyline points="638,481 637,486 637,492 637,496 636,504 633,510 633,513"/><polyline points="688,481 692,485 694,491 697,499 696,500 699,508 700,515 703,518"/><polyline points="710,503 716,500 723,500 724,502 731,501 736,499 743,500 747,497"/><polyline points="755,485 757,489 755,493 756,500 756,504 757,512 759,516"/><polyline points="788,481 789,488 787,491 786,500 787,505 790,511 790,516"/><polyline points="545,538 549,535 556,535 562,534 569,532 574,530 578,530 582,531"/><polyline points="602,517 603,524 603,529 607,535 604,538 606,546 607,550"/><polyline points="713,537 717,535 724,538 730,536 736,535 742,533"/><polyline points="550,572 554,568 563,568 566,564 574,564 580,560 584,559"/><polyline points="602,548 602,553 603,560 601,565 598,570 600,574 598,581"/><polyline points="629,554 628,561 632,564 628,571 631,577"/><polyline points="678,564 681,564 686,567 696,566 699,566 702,568 709,565"/><polyline points="724,547 726,551 724,559 724,563 724,570 721,573 722,580 722,584"/><polyline points="753,547 755,553 753,558 755,565 757,569 757,571 760,576 759,583"/><polyline points="631,576 629,580 631,585 631,590 629,599 633,603 631,606 631,613"/><polyline points="666,577 664,580 662,588 662,595 661,598 660,604 657,610 657,614 657,618"/><polyline points="690,577 691,582 687,589 689,595 690,597 690,606 688,610"/><polyline points="722,584 723,589 719,594 720,600 718,609 717,613"/><polyline points="759,583 760,590 758,591 759,596 761,606 760,609 760,614 759,620"/><polyline points="792,582 791,587 791,591 794,599 795,605 797,610 796,613"/><polyline points="588,625 594,627 601,628 603,629 614,627 617,629"/><polyline points="651,634 654,633 661,634 665,638 671,636"/><polyline points="708,623 711,628 717,627 726,633 728,634 737,639 741,639"/></g><polygon points="6.0,806.0 6.0,705.0 10.0,704.0 20.0,698.0 28.5,699.0 30.0,702.5 27.0,708.0 45.0,705.0 47.0,708.0 45.0,715.0 51.0,718.0 52.0,725.0 59.0,725.0 68.0,728.0 75.0,733.0 76.0,739.0 72.0,742.0 66.5,743.0 72.0,749.0 82.0,753.0 87.0,758.0 236.5,757.0 230.0,748.6 219.0,742.0 211.0,740.6 201.0,734.0 203.0,720.0 211.0,710.0 222.0,699.0 227.0,683.0 222.0,672.0 206.0,678.0 203.0,681.0 198.0,691.0 192.0,695.0 187.0,691.0 177.0,688.0 178.0,681.0 188.5,678.0 198.0,668.5 209.0,660.0 212.5,654.0 217.0,651.0 222.0,655.6 230.0,652.2 240.5,646.9 250.0,646.4 256.4,650.0 261.6,653.2 270.0,650.0 277.5,654.3 282.7,652.2 289.0,648.0 297.5,651.1 305.9,652.2 307.0,636.4 310.1,624.8 313.3,622.1 319.6,623.7 320.7,639.5 327.0,650.0 334.4,659.6 357.0,654.3 380.0,649.7 402.8,647.4 418.8,647.4 437.0,649.7 455.4,655.4 471.4,663.4 487.3,674.8 501.0,686.3 507.9,693.1 506.8,700.0 510.2,711.4 519.3,711.4 533.0,718.2 546.7,709.1 558.0,706.8 570.6,696.0 581.4,690.6 583.2,681.6 594.0,673.5 612.0,674.4 621.0,681.6 633.5,688.8 640.7,697.8 646.1,708.6 656.9,714.0 658.7,726.5 669.5,733.7 676.7,744.5 683.9,755.3 698.3,757.1 703.7,766.1 709.1,778.7 712.7,785.9 712.7,806.0" fill="#004466" stroke="#000" stroke-width="1" shape-rendering="crispEdges"/><g fill="#2c4866" stroke="none"><polygon points="299.5,59.6 303.6,56.5 307.6,55.5 313.7,57.5 315.0,62.0 318.5,68.7 323.2,71.8 319.1,74.1 318.5,78.9 319.1,84.3 323.2,89.7 323.2,96.5 318.5,89.0 314.4,82.9 314.4,74.8 310.3,67.4 308.3,59.2 304.9,58.6 303.6,63.3 300.2,61.3"/><polygon points="369.0,257.0 375.0,258.0 383.0,263.0 390.0,268.0 396.0,273.0 394.0,276.0 386.0,272.0 377.0,266.0 370.0,262.0"/><polygon points="605.0,286.0 612.0,284.0 618.0,290.0 624.0,298.0 622.0,306.0 616.0,300.0 610.0,294.0"/><polygon points="423.6,413.0 426.0,413.0 428.0,420.0 431.6,428.0 431.0,434.8 428.0,432.0 425.0,424.0 423.6,418.0"/><polygon points="445.0,363.0 451.6,362.8 449.0,370.0 443.0,376.0 438.8,377.2 441.0,370.0"/><polygon points="524.0,502.0 528.0,504.0 531.0,515.0 537.0,525.0 533.0,530.0 535.0,542.0 531.0,540.0 527.0,525.0 524.0,515.0"/><polygon points="120.6,660.0 126.0,652.0 134.0,653.0 136.6,660.0 132.0,668.0 124.0,668.0"/><polygon points="42.7,680.7 47.0,681.0 51.8,686.0 49.0,688.7 44.0,686.0"/><polygon points="56.4,684.0 60.0,688.0 62.0,695.0 70.0,700.0 78.0,702.0 84.0,706.0 82.0,710.5 74.0,708.0 64.0,704.0 58.0,696.0"/><polygon points="141.2,700.0 146.0,695.6 153.0,697.0 155.0,704.0 150.0,710.0 145.0,714.0 142.0,708.0"/><polygon points="540.5,606.0 548.0,603.0 556.0,606.0 562.0,604.0 560.0,612.0 550.0,617.6 544.0,612.0"/><polygon points="370.8,652.0 375.4,642.8 377.7,633.7 382.2,631.4 386.8,636.0 391.4,631.4 393.7,640.6 398.2,645.1 391.4,649.7 380.0,652.0" fill="#004466" stroke="#000" stroke-width="1" shape-rendering="crispEdges"/><polygon points="418.8,648.6 417.7,641.7 430.2,638.3 441.6,641.7 450.8,639.4 455.4,647.4 437.0,649.7" fill="#004466" stroke="#000" stroke-width="1" shape-rendering="crispEdges"/><polygon points="476.0,656.6 482.8,654.3 494.2,654.3 498.8,652.0 496.5,665.7 501.0,672.5 507.9,679.4 501.0,681.7 489.6,670.3 480.5,663.4" fill="#004466" stroke="#000" stroke-width="1" shape-rendering="crispEdges"/><polygon points="296.0,648.0 304.0,651.0 306.0,645.0 300.0,642.0"/><polygon points="783.0,730.0 790.0,728.0 797.0,745.0 795.0,755.0 789.0,752.0 784.0,742.0"/><polygon points="802.5,562.0 806.0,560.0 806.0,660.0 802.0,655.0 801.0,620.0 801.5,590.0"/></g><g><polygon points="182.0,745.6 179.8,747.1 176.3,749.2 174.4,745.6 176.8,743.1 178.9,742.9" fill="#004466" stroke="#000" stroke-width="0.9"/><polygon points="103.1,748.3 101.8,750.1 100.7,749.3 99.0,748.3 100.7,746.3 102.2,746.6" fill="#004466" stroke="#000" stroke-width="0.9"/><polygon points="112.7,755.2 109.9,757.3 107.8,756.8 107.1,755.2 107.3,753.8 110.4,753.1" fill="#004466" stroke="#000" stroke-width="0.9"/><polygon points="128.1,749.3 127.5,750.5 124.5,750.5 123.3,749.3 125.5,746.7 127.2,747.1" fill="#004466" stroke="#000" stroke-width="0.9"/><polygon points="107.0,755.8 106.1,757.2 104.1,757.4 102.7,755.8 103.8,753.9 106.0,755.0" fill="#004466" stroke="#000" stroke-width="0.9"/><polygon points="85.3,757.4 84.3,760.1 81.8,759.3 81.5,757.4 82.3,755.2 84.6,755.9" fill="#004466" stroke="#000" stroke-width="0.9"/><polygon points="199.1,755.6 197.0,757.2 194.0,757.5 193.2,755.6 194.0,752.3 197.0,753.3" fill="#004466" stroke="#000" stroke-width="0.9"/><polygon points="179.8,734.0 179.7,736.3 177.6,736.2 175.9,734.0 177.3,731.8 179.4,731.9" fill="#004466" stroke="#000" stroke-width="0.9"/><polygon points="204.7,743.2 203.1,744.1 201.0,744.5 199.8,743.2 200.8,741.2 203.2,741.7" fill="#004466" stroke="#000" stroke-width="0.9"/><polygon points="183.9,745.4 183.3,748.5 179.1,749.1 178.2,745.4 180.2,742.0 183.4,742.8" fill="#004466" stroke="#000" stroke-width="0.9"/><polygon points="191.1,744.5 190.6,747.4 187.8,747.3 185.5,744.5 187.4,743.1 190.1,742.2" fill="#004466" stroke="#000" stroke-width="0.9"/><polygon points="189.6,740.3 188.6,741.1 187.6,741.2 187.1,740.3 187.5,739.2 189.0,738.9" fill="#004466" stroke="#000" stroke-width="0.9"/><polygon points="115.5,753.4 114.9,754.1 113.4,754.4 113.5,753.4 113.8,752.1 114.8,752.1" fill="#004466" stroke="#000" stroke-width="0.9"/><polygon points="146.5,749.0 145.6,751.5 142.3,752.3 141.2,749.0 142.3,747.7 145.0,746.6" fill="#004466" stroke="#000" stroke-width="0.9"/><polygon points="180.9,752.8 179.7,755.4 177.9,755.4 175.9,752.8 178.0,750.2 179.9,751.1" fill="#004466" stroke="#000" stroke-width="0.9"/><polygon points="129.6,757.2 128.4,759.5 126.5,758.9 124.7,757.2 127.0,755.1 128.6,754.4" fill="#004466" stroke="#000" stroke-width="0.9"/><polygon points="178.3,732.8 176.2,735.6 174.2,735.2 173.0,732.8 173.9,730.5 176.5,730.0" fill="#004466" stroke="#000" stroke-width="0.9"/><polygon points="172.6,744.0 171.2,746.1 168.2,745.7 167.8,744.0 169.2,741.0 171.5,741.8" fill="#004466" stroke="#000" stroke-width="0.9"/><polygon points="124.5,747.5 123.9,750.3 120.9,749.4 118.8,747.5 121.3,745.3 124.3,743.9" fill="#004466" stroke="#000" stroke-width="0.9"/><polygon points="198.3,757.0 196.5,759.2 192.3,761.1 190.2,757.0 192.8,752.9 195.4,753.7" fill="#004466" stroke="#000" stroke-width="0.9"/><polygon points="172.1,745.6 171.2,748.6 168.3,749.4 167.1,745.6 168.1,743.7 171.7,742.9" fill="#004466" stroke="#000" stroke-width="0.9"/><polygon points="179.4,722.6 178.7,724.1 176.5,724.5 174.4,722.6 176.0,720.2 178.2,720.2" fill="#004466" stroke="#000" stroke-width="0.9"/><polygon points="176.1,721.5 175.0,723.0 171.1,723.1 170.8,721.5 171.2,719.4 174.0,717.6" fill="#004466" stroke="#000" stroke-width="0.9"/><polygon points="186.6,749.4 185.4,750.6 183.8,750.6 183.3,749.4 183.7,747.8 185.8,748.1" fill="#004466" stroke="#000" stroke-width="0.9"/><polygon points="175.4,737.5 173.6,739.4 171.9,740.9 169.9,737.5 172.0,735.1 174.7,734.8" fill="#004466" stroke="#000" stroke-width="0.9"/><polygon points="146.8,732.3 146.4,733.6 144.7,733.3 144.5,732.3 145.2,731.3 146.3,731.0" fill="#004466" stroke="#000" stroke-width="0.9"/><polygon points="139.1,755.0 137.8,756.6 134.3,757.0 132.7,755.0 134.9,753.3 136.7,753.2" fill="#004466" stroke="#000" stroke-width="0.9"/><polygon points="123.7,745.2 123.4,748.6 120.1,747.5 117.7,745.2 120.9,742.1 123.0,743.7" fill="#004466" stroke="#000" stroke-width="0.9"/><polygon points="167.6,757.5 166.2,760.3 164.3,760.4 164.0,757.5 164.8,755.6 166.2,755.9" fill="#004466" stroke="#000" stroke-width="0.9"/><polygon points="160.5,729.3 159.7,731.5 157.2,731.6 155.7,729.3 158.2,727.1 160.1,727.1" fill="#004466" stroke="#000" stroke-width="0.9"/><polygon points="196.6,753.8 195.5,755.0 193.9,754.9 192.3,753.8 193.9,752.7 195.4,752.5" fill="#004466" stroke="#000" stroke-width="0.9"/><polygon points="171.9,721.8 170.7,722.8 169.5,722.6 168.8,721.8 169.3,720.4 171.2,720.3" fill="#004466" stroke="#000" stroke-width="0.9"/><polygon points="151.8,749.2 149.6,751.1 146.2,751.3 146.1,749.2 147.0,747.4 149.5,747.3" fill="#004466" stroke="#000" stroke-width="0.9"/><polygon points="137.6,751.3 135.5,753.8 132.5,752.9 130.4,751.3 131.9,749.4 135.6,749.2" fill="#004466" stroke="#000" stroke-width="0.9"/><polygon points="150.7,731.2 148.7,734.0 145.7,734.4 143.9,731.2 144.5,729.7 148.2,728.7" fill="#004466" stroke="#000" stroke-width="0.9"/><polygon points="135.5,746.1 135.2,748.1 132.7,747.8 132.2,746.1 132.7,744.5 134.4,744.9" fill="#004466" stroke="#000" stroke-width="0.9"/><polygon points="191.0,751.4 188.4,753.7 186.3,753.1 185.3,751.4 186.9,749.5 188.9,749.2" fill="#004466" stroke="#000" stroke-width="0.9"/><polygon points="188.2,735.8 187.3,738.4 184.4,737.4 183.7,735.8 184.0,732.6 187.4,733.6" fill="#004466" stroke="#000" stroke-width="0.9"/><polygon points="203.8,742.2 201.5,745.7 197.5,744.3 195.9,742.2 198.0,738.1 201.0,739.5" fill="#004466" stroke="#000" stroke-width="0.9"/><polygon points="225.8,753.7 225.0,756.1 221.9,755.7 219.9,753.7 222.3,751.9 224.9,750.6" fill="#004466" stroke="#000" stroke-width="0.9"/><polygon points="214.6,752.2 213.5,755.5 210.8,754.2 208.9,752.2 211.0,750.7 212.9,749.6" fill="#004466" stroke="#000" stroke-width="0.9"/><polygon points="176.5,718.8 175.6,720.6 174.0,720.3 172.3,718.8 173.8,716.8 175.6,716.7" fill="#004466" stroke="#000" stroke-width="0.9"/><polygon points="115.8,743.4 113.9,745.3 111.8,745.3 109.4,743.4 110.9,740.2 114.8,740.0" fill="#004466" stroke="#000" stroke-width="0.9"/><polygon points="196.4,754.4 193.7,756.2 191.6,756.5 189.7,754.4 190.7,750.8 193.7,751.7" fill="#004466" stroke="#000" stroke-width="0.9"/><polygon points="166.4,728.0 165.6,729.4 163.5,729.9 163.7,728.0 163.7,726.9 165.2,726.7" fill="#004466" stroke="#000" stroke-width="0.9"/><polygon points="136.3,745.4 135.1,748.7 131.4,748.4 130.8,745.4 131.3,742.5 134.4,742.8" fill="#004466" stroke="#000" stroke-width="0.9"/><polygon points="140.1,754.8 139.2,756.5 138.1,755.6 137.5,754.8 138.0,753.5 139.2,753.8" fill="#004466" stroke="#000" stroke-width="0.9"/><polygon points="155.6,714.1 153.8,715.1 152.0,716.2 151.0,714.1 151.6,712.2 153.9,713.1" fill="#004466" stroke="#000" stroke-width="0.9"/><polygon points="147.4,752.0 145.4,755.2 141.1,753.8 139.4,752.0 141.0,748.1 144.3,749.5" fill="#004466" stroke="#000" stroke-width="0.9"/><polygon points="123.4,742.0 122.8,743.2 121.2,743.9 121.1,742.0 121.2,740.0 123.1,741.1" fill="#004466" stroke="#000" stroke-width="0.9"/><polygon points="116.0,754.2 115.6,756.4 112.0,756.7 109.9,754.2 112.4,750.1 116.0,752.4" fill="#004466" stroke="#000" stroke-width="0.9"/><polygon points="156.4,737.9 155.1,740.9 151.8,739.9 150.5,737.9 152.9,734.3 155.4,735.0" fill="#004466" stroke="#000" stroke-width="0.9"/><polygon points="177.2,748.1 176.4,749.2 175.3,749.1 174.3,748.1 174.7,746.9 176.5,746.5" fill="#004466" stroke="#000" stroke-width="0.9"/><polygon points="232.5,755.6 232.0,757.4 228.0,759.1 226.2,755.6 227.3,753.2 231.4,751.8" fill="#004466" stroke="#000" stroke-width="0.9"/><polygon points="158.3,737.2 157.1,738.5 155.9,739.3 155.2,737.2 155.4,735.3 157.3,735.2" fill="#004466" stroke="#000" stroke-width="0.9"/><polygon points="180.3,728.7 180.0,730.8 176.5,730.3 176.4,728.7 176.6,726.2 179.0,727.3" fill="#004466" stroke="#000" stroke-width="0.9"/><polygon points="196.0,739.3 194.8,740.7 192.5,740.8 192.4,739.3 192.5,736.3 195.6,737.9" fill="#004466" stroke="#000" stroke-width="0.9"/><polygon points="183.1,750.5 181.8,751.3 180.1,751.9 178.9,750.5 180.6,749.5 181.7,748.6" fill="#004466" stroke="#000" stroke-width="0.9"/><polygon points="147.1,739.8 146.5,742.6 143.9,742.3 141.5,739.8 144.1,737.5 146.6,736.7" fill="#004466" stroke="#000" stroke-width="0.9"/><polygon points="169.4,741.8 167.5,743.0 165.8,743.5 163.6,741.8 165.4,739.6 168.2,740.5" fill="#004466" stroke="#000" stroke-width="0.9"/><polygon points="85.6,756.7 84.1,758.4 82.3,757.9 81.9,756.7 82.2,754.2 83.9,755.1" fill="#004466" stroke="#000" stroke-width="0.9"/><polygon points="108.8,755.3 105.7,757.7 103.6,756.8 101.6,755.3 103.8,752.7 106.8,751.7" fill="#004466" stroke="#000" stroke-width="0.9"/><polygon points="153.8,714.9 152.8,718.6 150.4,717.3 149.6,714.9 149.8,712.5 153.0,712.4" fill="#004466" stroke="#000" stroke-width="0.9"/><polygon points="182.2,754.1 180.3,755.2 178.2,755.8 177.7,754.1 178.5,752.3 180.4,752.0" fill="#004466" stroke="#000" stroke-width="0.9"/><polygon points="201.4,739.0 201.1,739.9 199.0,740.0 199.0,739.0 199.4,737.5 201.2,738.0" fill="#004466" stroke="#000" stroke-width="0.9"/><polygon points="172.0,722.1 171.5,724.3 169.9,724.0 168.4,722.1 169.4,719.6 171.6,720.5" fill="#004466" stroke="#000" stroke-width="0.9"/><polygon points="146.6,729.9 146.4,733.4 143.4,734.0 141.5,729.9 142.4,727.2 146.5,726.5" fill="#004466" stroke="#000" stroke-width="0.9"/><polygon points="133.9,745.1 132.6,746.6 129.9,746.3 128.1,745.1 129.5,743.9 132.3,743.1" fill="#004466" stroke="#000" stroke-width="0.9"/><rect x="217.1" y="702.6" width="2.8" height="1.6" fill="#000"/><rect x="204.8" y="695.6" width="3.0" height="1.9" fill="#000"/><rect x="223.7" y="677.6" width="2.4" height="2.0" fill="#000"/><rect x="215.5" y="743.1" width="2.7" height="2.5" fill="#000"/><rect x="197.1" y="733.6" width="2.3" height="1.5" fill="#000"/><rect x="219.3" y="687.5" width="2.3" height="2.0" fill="#000"/><rect x="206.0" y="737.1" width="2.9" height="2.7" fill="#000"/><rect x="229.6" y="750.5" width="3.1" height="1.9" fill="#000"/><rect x="205.3" y="685.2" width="2.2" height="1.7" fill="#000"/><rect x="190.9" y="716.0" width="3.2" height="1.9" fill="#000"/><rect x="210.6" y="683.4" width="2.4" height="2.0" fill="#000"/><rect x="184.0" y="716.3" width="1.9" height="2.4" fill="#000"/><rect x="213.9" y="676.5" width="3.0" height="1.9" fill="#000"/><rect x="224.4" y="695.9" width="2.9" height="1.4" fill="#000"/><rect x="216.5" y="750.4" width="2.8" height="1.3" fill="#000"/><rect x="209.2" y="710.3" width="2.4" height="1.5" fill="#000"/><rect x="195.9" y="708.5" width="1.6" height="2.4" fill="#000"/><rect x="198.7" y="729.7" width="2.4" height="2.8" fill="#000"/><rect x="199.8" y="713.6" width="3.2" height="2.2" fill="#000"/><rect x="215.1" y="704.5" width="2.4" height="1.4" fill="#000"/><rect x="197.4" y="700.9" width="2.7" height="2.3" fill="#000"/><rect x="190.0" y="708.1" width="3.0" height="1.3" fill="#000"/><rect x="196.2" y="727.1" width="1.6" height="2.0" fill="#000"/><rect x="215.3" y="744.3" width="1.9" height="2.1" fill="#000"/><rect x="198.2" y="724.2" width="1.7" height="2.8" fill="#000"/><rect x="206.1" y="693.0" width="1.8" height="1.9" fill="#000"/><rect x="194.6" y="723.7" width="2.4" height="2.3" fill="#000"/><rect x="205.9" y="693.8" width="1.6" height="2.7" fill="#000"/><rect x="217.6" y="689.9" width="2.5" height="2.2" fill="#000"/><rect x="224.4" y="695.6" width="2.2" height="2.3" fill="#000"/><rect x="195.6" y="715.3" width="1.6" height="1.6" fill="#000"/><rect x="192.6" y="709.0" width="1.6" height="1.4" fill="#000"/><rect x="224.6" y="691.0" width="1.8" height="1.7" fill="#000"/><rect x="201.8" y="719.6" width="2.1" height="1.3" fill="#000"/><rect x="194.8" y="709.2" width="1.7" height="1.3" fill="#000"/><rect x="194.1" y="701.1" width="3.4" height="2.1" fill="#000"/><rect x="213.8" y="697.0" width="2.3" height="1.8" fill="#000"/><rect x="216.2" y="745.0" width="3.1" height="1.7" fill="#000"/><rect x="213.3" y="688.5" width="1.5" height="1.7" fill="#000"/><rect x="186.8" y="721.3" width="2.9" height="2.5" fill="#000"/><rect x="206.5" y="717.1" width="1.7" height="2.5" fill="#000"/><rect x="199.8" y="710.8" width="2.5" height="2.7" fill="#000"/><rect x="197.2" y="718.4" width="2.7" height="2.4" fill="#000"/><rect x="197.8" y="693.1" width="2.4" height="2.3" fill="#000"/><rect x="216.7" y="680.0" width="2.4" height="2.2" fill="#000"/><rect x="208.4" y="694.5" width="1.6" height="1.7" fill="#000"/><rect x="200.0" y="730.5" width="2.7" height="1.2" fill="#000"/><rect x="194.7" y="711.2" width="2.5" height="1.5" fill="#000"/><rect x="223.9" y="754.1" width="2.7" height="1.3" fill="#000"/><rect x="198.9" y="729.6" width="2.2" height="2.3" fill="#000"/><rect x="193.1" y="723.3" width="2.7" height="1.3" fill="#000"/><rect x="223.0" y="688.4" width="2.5" height="2.1" fill="#000"/><rect x="205.3" y="719.0" width="3.5" height="1.8" fill="#000"/><rect x="220.7" y="754.1" width="1.7" height="2.6" fill="#000"/><rect x="188.4" y="711.8" width="2.7" height="2.5" fill="#000"/><rect x="227.2" y="673.8" width="2.4" height="2.8" fill="#000"/><rect x="216.3" y="745.9" width="2.9" height="2.9" fill="#000"/><rect x="208.1" y="712.4" width="2.8" height="2.2" fill="#000"/><rect x="198.2" y="713.0" width="1.6" height="1.5" fill="#000"/><rect x="193.8" y="728.1" width="2.6" height="2.8" fill="#000"/><rect x="207.2" y="697.6" width="2.0" height="1.9" fill="#000"/><rect x="223.8" y="752.8" width="2.2" height="1.6" fill="#000"/><rect x="196.7" y="724.6" width="2.5" height="1.4" fill="#000"/><rect x="209.9" y="692.2" width="1.8" height="2.6" fill="#000"/><rect x="204.3" y="714.9" width="2.4" height="1.8" fill="#000"/><rect x="193.9" y="706.1" width="1.7" height="1.6" fill="#000"/><rect x="218.5" y="698.4" width="2.0" height="1.8" fill="#000"/><rect x="208.1" y="686.9" width="3.2" height="2.1" fill="#000"/><rect x="196.6" y="732.2" width="1.6" height="2.8" fill="#000"/><rect x="183.6" y="715.0" width="1.9" height="2.0" fill="#000"/><rect x="208.0" y="738.6" width="1.8" height="2.9" fill="#000"/><rect x="217.4" y="749.8" width="2.9" height="1.3" fill="#000"/><rect x="199.8" y="699.1" width="1.8" height="1.6" fill="#000"/><rect x="209.4" y="701.6" width="2.0" height="1.9" fill="#000"/><rect x="222.9" y="751.9" width="1.6" height="2.8" fill="#000"/><rect x="199.9" y="705.1" width="2.1" height="2.6" fill="#000"/><rect x="208.1" y="683.3" width="3.3" height="2.9" fill="#000"/><rect x="192.6" y="725.5" width="2.2" height="1.7" fill="#000"/><rect x="197.2" y="722.7" width="2.5" height="2.1" fill="#000"/><rect x="225.1" y="751.7" width="2.7" height="2.3" fill="#000"/><rect x="191.0" y="705.5" width="1.8" height="1.2" fill="#000"/><rect x="219.2" y="697.6" width="2.0" height="1.2" fill="#000"/><rect x="200.4" y="707.2" width="2.9" height="2.8" fill="#000"/><rect x="220.0" y="687.7" width="3.5" height="1.5" fill="#000"/><rect x="196.4" y="723.6" width="3.0" height="1.8" fill="#000"/><rect x="195.1" y="697.7" width="3.5" height="2.4" fill="#000"/><rect x="217.4" y="691.6" width="1.7" height="1.4" fill="#000"/><rect x="228.6" y="756.8" width="2.5" height="2.0" fill="#000"/><rect x="206.9" y="701.5" width="3.0" height="2.2" fill="#000"/><rect x="212.8" y="678.3" width="1.8" height="2.5" fill="#000"/><rect x="192.3" y="728.1" width="2.9" height="1.7" fill="#000"/><rect x="213.1" y="695.2" width="2.0" height="2.2" fill="#000"/><rect x="214.6" y="749.9" width="2.7" height="2.1" fill="#000"/><rect x="203.3" y="692.0" width="2.9" height="1.9" fill="#000"/><rect x="200.5" y="729.8" width="2.8" height="2.1" fill="#000"/><rect x="200.0" y="735.6" width="2.9" height="2.0" fill="#000"/><rect x="210.6" y="745.2" width="3.3" height="1.5" fill="#000"/><rect x="219.0" y="674.3" width="3.2" height="1.5" fill="#000"/><rect x="208.4" y="735.9" width="2.2" height="1.6" fill="#000"/><rect x="192.5" y="722.9" width="3.4" height="2.3" fill="#000"/><rect x="194.7" y="712.4" width="1.6" height="2.2" fill="#000"/><rect x="218.5" y="696.5" width="2.7" height="2.1" fill="#000"/><rect x="226.9" y="676.7" width="1.7" height="2.8" fill="#000"/><rect x="206.8" y="692.4" width="2.2" height="2.9" fill="#000"/><rect x="206.4" y="686.9" width="3.5" height="3.0" fill="#000"/><rect x="221.6" y="702.8" width="2.4" height="2.4" fill="#000"/><rect x="195.6" y="721.5" width="1.9" height="1.6" fill="#000"/><rect x="211.1" y="706.5" width="3.3" height="1.5" fill="#000"/><rect x="190.5" y="706.8" width="1.8" height="1.6" fill="#000"/><rect x="209.8" y="691.0" width="3.0" height="1.7" fill="#000"/><rect x="228.8" y="753.1" width="3.4" height="1.6" fill="#000"/><rect x="210.8" y="691.3" width="3.0" height="1.9" fill="#000"/><rect x="195.3" y="705.6" width="2.2" height="2.2" fill="#000"/><rect x="230.9" y="753.8" width="2.9" height="2.4" fill="#000"/><rect x="197.5" y="727.8" width="2.5" height="2.9" fill="#000"/><rect x="215.3" y="679.7" width="3.2" height="2.4" fill="#000"/><rect x="221.6" y="692.1" width="2.3" height="1.9" fill="#000"/><rect x="204.9" y="739.9" width="2.8" height="1.3" fill="#000"/><rect x="192.0" y="720.0" width="3.1" height="1.6" fill="#000"/><rect x="194.2" y="701.9" width="2.4" height="2.0" fill="#000"/><rect x="195.9" y="699.0" width="2.5" height="1.5" fill="#000"/><rect x="217.4" y="746.1" width="3.3" height="2.3" fill="#000"/><rect x="201.9" y="718.4" width="2.6" height="1.5" fill="#000"/><rect x="210.8" y="712.7" width="1.9" height="2.0" fill="#000"/><rect x="197.0" y="710.4" width="2.3" height="2.3" fill="#000"/><rect x="218.0" y="689.9" width="2.0" height="2.9" fill="#000"/><rect x="194.8" y="712.2" width="2.4" height="1.6" fill="#000"/><rect x="222.1" y="701.4" width="1.9" height="2.6" fill="#000"/><rect x="220.3" y="703.7" width="3.5" height="2.3" fill="#000"/><rect x="220.2" y="681.8" width="1.7" height="3.0" fill="#000"/><rect x="216.0" y="751.4" width="2.5" height="1.3" fill="#000"/><rect x="220.4" y="752.2" width="1.8" height="1.4" fill="#000"/><rect x="206.4" y="688.9" width="3.0" height="2.6" fill="#000"/><rect x="208.0" y="703.6" width="2.4" height="1.8" fill="#000"/><rect x="225.7" y="680.2" width="2.8" height="2.7" fill="#000"/><rect x="215.6" y="702.3" width="2.4" height="2.2" fill="#000"/><rect x="212.9" y="688.3" width="3.3" height="2.1" fill="#000"/><rect x="218.4" y="756.7" width="2.2" height="2.2" fill="#000"/><rect x="211.1" y="693.7" width="2.6" height="2.9" fill="#000"/><rect x="219.7" y="691.9" width="2.9" height="2.3" fill="#000"/><rect x="201.0" y="728.4" width="2.3" height="2.6" fill="#000"/><rect x="203.7" y="689.6" width="3.3" height="2.7" fill="#000"/><rect x="208.4" y="679.9" width="1.9" height="1.9" fill="#000"/><rect x="214.5" y="695.1" width="3.3" height="2.9" fill="#000"/><rect x="218.2" y="692.7" width="3.0" height="1.8" fill="#000"/><rect x="197.6" y="707.6" width="3.2" height="1.5" fill="#000"/><rect x="199.4" y="733.4" width="2.4" height="2.4" fill="#000"/><rect x="209.2" y="700.4" width="2.3" height="1.3" fill="#000"/><rect x="197.3" y="702.7" width="3.0" height="1.7" fill="#000"/><rect x="204.9" y="683.4" width="3.3" height="2.2" fill="#000"/><rect x="208.1" y="709.0" width="2.8" height="2.3" fill="#000"/><rect x="191.3" y="712.2" width="2.0" height="1.6" fill="#000"/><rect x="190.1" y="726.1" width="2.9" height="1.8" fill="#000"/><rect x="214.2" y="682.7" width="2.8" height="2.6" fill="#000"/><rect x="195.2" y="704.6" width="1.6" height="1.3" fill="#000"/><rect x="204.3" y="703.3" width="3.4" height="2.9" fill="#000"/><rect x="216.6" y="698.9" width="2.9" height="1.7" fill="#000"/><rect x="231.5" y="754.0" width="3.0" height="1.7" fill="#000"/><rect x="221.2" y="678.5" width="2.6" height="1.8" fill="#000"/><rect x="206.9" y="694.1" width="1.6" height="2.0" fill="#000"/><rect x="204.5" y="713.6" width="1.6" height="2.2" fill="#000"/><rect x="220.5" y="744.0" width="1.9" height="1.9" fill="#000"/><rect x="217.9" y="752.4" width="2.7" height="1.6" fill="#000"/><rect x="207.4" y="697.3" width="2.5" height="2.3" fill="#000"/><rect x="209.0" y="741.0" width="2.5" height="1.5" fill="#000"/><rect x="218.2" y="692.3" width="1.9" height="1.9" fill="#000"/><rect x="209.1" y="701.1" width="2.4" height="2.5" fill="#000"/><rect x="208.7" y="704.4" width="2.7" height="1.7" fill="#000"/><rect x="220.2" y="699.3" width="2.8" height="1.6" fill="#000"/><rect x="207.7" y="712.3" width="1.5" height="1.4" fill="#000"/><rect x="206.2" y="736.9" width="3.1" height="2.7" fill="#000"/><rect x="225.9" y="755.0" width="1.9" height="1.5" fill="#000"/><rect x="209.4" y="739.8" width="3.1" height="2.7" fill="#000"/><rect x="199.0" y="733.4" width="2.8" height="1.6" fill="#000"/><rect x="210.3" y="685.8" width="3.2" height="2.1" fill="#000"/><rect x="206.4" y="689.4" width="3.1" height="2.9" fill="#000"/><rect x="205.0" y="698.8" width="2.0" height="2.6" fill="#000"/><polygon points="14.4,718 25.7,715.9 32,719 38.3,720.8 36,726 35.5,729 25.7,728.5 17.2,723" fill="#5c504c" stroke="#000" stroke-width="1" shape-rendering="crispEdges"/><polyline points="784.0,652.0 779.3,671.3 793.7,700.0 784.0,719.4 787.3,738.6 790.0,745.0" fill="none" stroke="#000" stroke-width="3.2"/><polyline points="784.0,652.0 779.3,671.3 793.7,700.0 784.0,719.4 787.3,738.6 790.0,745.0" fill="none" stroke="#2c4866" stroke-width="1.8"/><rect x="798.5" y="649.3" width="1.4" height="1.4" fill="#000"/><rect x="799.1" y="636.5" width="1.9" height="1.2" fill="#000"/><rect x="799.7" y="642.6" width="2.7" height="1.4" fill="#000"/><rect x="797.1" y="641.7" width="2.4" height="1.4" fill="#000"/><rect x="791.4" y="632.9" width="1.5" height="1.3" fill="#000"/><rect x="800.4" y="625.6" width="2.9" height="1.6" fill="#000"/><rect x="796.7" y="646.1" width="1.3" height="1.6" fill="#000"/><rect x="805.8" y="598.6" width="1.3" height="1.1" fill="#000"/><rect x="802.8" y="641.8" width="1.1" height="1.3" fill="#000"/><rect x="792.7" y="592.7" width="1.5" height="1.3" fill="#000"/><rect x="796.1" y="615.7" width="3.0" height="1.1" fill="#000"/><rect x="790.4" y="647.7" width="2.1" height="1.3" fill="#000"/><rect x="804.1" y="650.3" width="2.1" height="1.1" fill="#000"/><rect x="793.0" y="604.1" width="1.8" height="1.8" fill="#000"/><rect x="795.0" y="610.1" width="2.4" height="1.4" fill="#000"/><rect x="794.9" y="636.5" width="1.2" height="1.6" fill="#000"/><rect x="801.3" y="574.6" width="1.7" height="1.9" fill="#000"/><rect x="797.2" y="605.0" width="1.3" height="1.3" fill="#000"/><rect x="798.6" y="648.7" width="2.3" height="2.0" fill="#000"/><rect x="795.3" y="575.9" width="1.7" height="1.1" fill="#000"/><rect x="791.0" y="595.9" width="1.4" height="1.0" fill="#000"/><rect x="796.3" y="636.7" width="1.1" height="1.5" fill="#000"/><rect x="803.7" y="615.9" width="1.3" height="1.7" fill="#000"/><rect x="789.3" y="636.7" width="2.8" height="1.3" fill="#000"/><rect x="801.3" y="612.6" width="1.5" height="1.5" fill="#000"/><rect x="797.6" y="630.2" width="1.7" height="1.6" fill="#000"/><rect x="791.6" y="614.9" width="2.6" height="1.2" fill="#000"/><rect x="793.2" y="576.0" width="2.1" height="1.2" fill="#000"/><rect x="790.2" y="646.8" width="1.4" height="1.4" fill="#000"/><rect x="803.1" y="634.2" width="2.8" height="1.5" fill="#000"/><rect x="794.0" y="613.1" width="2.4" height="1.8" fill="#000"/><rect x="804.5" y="641.4" width="2.3" height="1.8" fill="#000"/><rect x="793.2" y="618.3" width="2.9" height="1.5" fill="#000"/><rect x="799.2" y="645.5" width="1.6" height="1.3" fill="#000"/><rect x="798.3" y="587.5" width="2.4" height="1.5" fill="#000"/><rect x="791.6" y="580.7" width="2.2" height="1.9" fill="#000"/><rect x="802.3" y="643.0" width="2.1" height="1.8" fill="#000"/><rect x="804.0" y="606.0" width="2.8" height="1.0" fill="#000"/><rect x="804.3" y="628.5" width="2.6" height="1.4" fill="#000"/><rect x="798.6" y="641.0" width="1.4" height="1.2" fill="#000"/><rect x="801.6" y="645.3" width="1.5" height="1.5" fill="#000"/><rect x="797.1" y="596.7" width="2.7" height="1.3" fill="#000"/><rect x="802.0" y="605.5" width="1.3" height="2.0" fill="#000"/><rect x="790.7" y="578.8" width="1.7" height="1.0" fill="#000"/><rect x="790.8" y="650.9" width="2.4" height="1.2" fill="#000"/><rect x="788.2" y="570.6" width="2.9" height="1.5" fill="#000"/><rect x="800.8" y="599.4" width="2.1" height="1.2" fill="#000"/><rect x="798.1" y="573.6" width="2.8" height="1.9" fill="#000"/><rect x="798.4" y="610.7" width="1.8" height="1.7" fill="#000"/><rect x="798.4" y="631.0" width="1.9" height="1.4" fill="#000"/><rect x="801.0" y="585.6" width="1.7" height="1.2" fill="#000"/><rect x="791.7" y="644.3" width="2.5" height="1.0" fill="#000"/><rect x="804.6" y="610.3" width="2.5" height="1.1" fill="#000"/><rect x="798.9" y="639.8" width="1.6" height="1.1" fill="#000"/><rect x="802.8" y="608.3" width="2.4" height="1.8" fill="#000"/><rect x="803.1" y="586.3" width="2.5" height="1.9" fill="#000"/><rect x="802.2" y="614.9" width="1.8" height="2.0" fill="#000"/><rect x="805.9" y="639.2" width="2.0" height="1.9" fill="#000"/><rect x="803.7" y="613.4" width="1.3" height="1.6" fill="#000"/><rect x="797.0" y="625.4" width="2.6" height="1.9" fill="#000"/><rect x="793.6" y="652.1" width="1.7" height="1.8" fill="#000"/><rect x="805.6" y="613.6" width="2.6" height="1.8" fill="#000"/><rect x="798.2" y="606.1" width="2.6" height="1.4" fill="#000"/><rect x="799.6" y="612.6" width="1.0" height="2.0" fill="#000"/><rect x="804.9" y="629.2" width="1.8" height="1.7" fill="#000"/><rect x="800.0" y="619.7" width="2.6" height="1.6" fill="#000"/><rect x="797.7" y="592.2" width="2.6" height="1.1" fill="#000"/><rect x="789.7" y="624.1" width="2.7" height="1.2" fill="#000"/><rect x="796.4" y="592.4" width="2.0" height="1.6" fill="#000"/><rect x="790.7" y="588.8" width="1.2" height="1.0" fill="#000"/><rect x="805.3" y="652.8" width="1.1" height="1.8" fill="#000"/><rect x="798.4" y="587.9" width="2.8" height="1.1" fill="#000"/><rect x="799.5" y="627.8" width="2.4" height="1.2" fill="#000"/><rect x="790.7" y="624.3" width="2.2" height="1.7" fill="#000"/><rect x="795.3" y="619.4" width="2.8" height="1.2" fill="#000"/><rect x="798.3" y="587.5" width="2.9" height="1.5" fill="#000"/><rect x="795.0" y="634.3" width="2.8" height="1.8" fill="#000"/><rect x="792.6" y="609.0" width="2.6" height="2.0" fill="#000"/><rect x="798.7" y="654.1" width="1.9" height="1.9" fill="#000"/><rect x="803.2" y="649.6" width="1.9" height="1.5" fill="#000"/><rect x="788.6" y="651.8" width="2.2" height="1.6" fill="#000"/><rect x="791.1" y="600.1" width="1.0" height="1.4" fill="#000"/><rect x="805.1" y="644.9" width="1.5" height="1.6" fill="#000"/><rect x="800.5" y="637.8" width="1.3" height="1.3" fill="#000"/><rect x="799.1" y="597.1" width="2.8" height="1.4" fill="#000"/><rect x="800.7" y="575.9" width="2.8" height="2.0" fill="#000"/><rect x="805.4" y="599.3" width="2.7" height="2.0" fill="#000"/><rect x="805.8" y="572.6" width="2.7" height="1.7" fill="#000"/><rect x="796.6" y="582.3" width="2.0" height="1.5" fill="#000"/><rect x="804.9" y="654.4" width="2.8" height="1.1" fill="#000"/><rect x="799.6" y="651.3" width="2.7" height="1.7" fill="#000"/><rect x="799.3" y="617.0" width="2.0" height="1.0" fill="#000"/><rect x="796.1" y="642.7" width="1.8" height="1.7" fill="#000"/><rect x="802.5" y="641.5" width="1.5" height="1.6" fill="#000"/><rect x="796.4" y="620.5" width="1.2" height="1.2" fill="#000"/><rect x="797.7" y="592.9" width="1.7" height="2.0" fill="#000"/><rect x="803.9" y="580.4" width="1.2" height="1.9" fill="#000"/><rect x="798.9" y="647.9" width="1.3" height="1.9" fill="#000"/><rect x="792.7" y="576.5" width="2.0" height="1.8" fill="#000"/><rect x="798.4" y="653.4" width="1.4" height="1.4" fill="#000"/><rect x="798.3" y="620.8" width="2.4" height="1.5" fill="#000"/><rect x="789.3" y="639.9" width="2.4" height="1.6" fill="#000"/><rect x="793.4" y="577.7" width="2.3" height="1.5" fill="#000"/><rect x="802.6" y="584.8" width="2.2" height="1.3" fill="#000"/><rect x="788.8" y="586.1" width="1.3" height="1.0" fill="#000"/><rect x="805.6" y="600.9" width="2.5" height="1.4" fill="#000"/><rect x="797.2" y="591.6" width="2.9" height="1.2" fill="#000"/><rect x="805.3" y="637.1" width="2.7" height="1.1" fill="#000"/><rect x="805.8" y="626.1" width="2.2" height="1.6" fill="#000"/><rect x="796.0" y="652.0" width="3.0" height="2.0" fill="#000"/><rect x="803.9" y="655.8" width="1.6" height="1.8" fill="#000"/><rect x="798.6" y="601.1" width="1.5" height="1.1" fill="#000"/><rect x="788.6" y="607.0" width="1.4" height="1.3" fill="#000"/><rect x="790.4" y="587.4" width="3.0" height="1.4" fill="#000"/><rect x="799.1" y="616.5" width="2.9" height="1.8" fill="#000"/><rect x="804.7" y="645.0" width="2.5" height="1.9" fill="#000"/><rect x="794.0" y="622.3" width="2.9" height="1.3" fill="#000"/><rect x="806.0" y="590.3" width="1.7" height="1.7" fill="#000"/><rect x="798.3" y="588.5" width="1.3" height="1.9" fill="#000"/><rect x="796.7" y="611.0" width="1.3" height="1.9" fill="#000"/><polyline points="249.1,678.6 253.4,689 251.7,701 243.1,716.6 232.8,725.2 224.1,730.3" fill="none" stroke="#000" stroke-width="1.2" stroke-dasharray="6,3"/><polyline points="228.4,662.2 236.2,661.4" fill="none" stroke="#000" stroke-width="1.3"/><polyline points="241.0,663.0 248.0,661.0" fill="none" stroke="#000" stroke-width="1.3"/><polyline points="256.9,661.4 270.0,663.0 284.5,664.8" fill="none" stroke="#000" stroke-width="1.3"/><polyline points="300.0,660.0 312.0,663.0" fill="none" stroke="#000" stroke-width="1.3"/><polyline points="340.0,659.0 357.0,655.0" fill="none" stroke="#000" stroke-width="1.3"/></g><g fill="none" stroke="#8c7400" stroke-width="1" shape-rendering="crispEdges"><ellipse cx="584" cy="347" rx="13" ry="15"/><ellipse cx="403" cy="372" rx="7" ry="6"/><polyline points="187.0,6.0 198.0,20.8 200.0,43.0 200.0,91.0 190.7,116.8 179.6,142.7 168.6,168.6 153.8,190.7 146.4,205.5 153.8,220.3 161.2,227.7 164.9,242.4 168.6,264.6 172.3,306.0 179.6,343.0 183.3,379.9 164.9,424.2 153.8,468.6 142.7,494.4 131.6,535.1 127.9,560.0 127.3,636.5 127.3,639.1"/><polyline points="6.0,257.2 61.4,249.8 109.4,231.4 153.8,224.0 176.0,225.8 209.2,205.5 246.1,183.3 283.0,168.6 306.0,164.9 354.0,150.0 398.4,131.6 409.4,128.0 472.3,131.6 527.7,146.4 564.6,164.9 586.0,159.4 623.0,148.4 660.0,141.0 697.0,124.3 741.3,105.8 770.9,87.3 806.0,72.6"/><polyline points="227.7,6.0 246.1,13.4 257.2,35.6 272.0,54.0 290.5,57.7 306.0,54.0 320.0,52.0 340.0,62.0 360.0,75.0 402.0,128.0"/><polyline points="402.0,128.0 435.3,164.9 460.0,199.6 482.4,228.5 503.0,236.5 520.0,238.0"/><polyline points="479.6,6.0 461.2,28.2 428.0,61.4 416.8,98.4 398.4,124.2 398.4,135.3 394.7,172.3 394.7,209.2 398.4,246.1 398.4,306.0 402.0,343.0 405.8,368.8 409.4,398.4 431.6,435.3 442.7,464.9 424.2,509.2 398.4,546.1 361.4,583.1 349.6,587.9 334.8,595.8 320.0,599.7 300.0,610.0 270.0,630.0 250.0,641.7"/><polyline points="593.4,6.0 602.6,28.2 597.1,61.5 589.7,113.2 586.0,159.4 569.0,190.0 545.0,220.0 520.0,238.0"/><polyline points="503.0,239.6 496.8,257.3 487.2,279.7 463.2,320.0 435.3,343.0 405.8,368.8"/><polyline points="520.0,238.0 503.0,239.6"/><polyline points="520.0,238.0 535.3,251.0 543.3,279.7 556.0,308.5 561.0,320.0 575.0,335.0 584.0,347.0 608.2,391.0 630.4,424.3 630.4,490.9 645.2,542.6 656.3,587.0 659.4,596.0 688.2,639.3 713.4,668.1 731.4,704.1 745.8,740.1 756.6,790.5"/><polyline points="660.0,142.8 682.1,172.4 697.0,187.2 733.9,183.5 806.0,172.4"/><polyline points="711.7,190.9 733.9,213.0 756.1,235.2 770.9,272.2 785.7,306.0 795.0,330.0 806.0,345.0"/><polyline points="586.0,328.2 615.6,317.1 648.9,306.0 660.0,294.4 697.0,272.2 733.9,253.7 770.9,235.2 806.0,224.2"/><polyline points="586.8,346.6 572.0,368.8 546.1,398.4 513.0,442.7 472.3,464.9 442.7,472.3"/><polyline points="6.0,461.2 43.0,464.9 98.4,474.1 135.3,474.1 150.1,479.6 183.3,477.8 260.9,474.1 283.0,464.9 306.0,439.0 343.0,402.0 372.5,398.4 405.8,376.2 428.0,365.1 472.3,361.4 513.0,357.7 564.6,348.5 586.8,346.6 623.0,361.5 667.3,368.9 752.4,372.6 789.4,354.1 806.0,339.3"/><polyline points="630.4,424.3 678.4,453.9 733.9,468.7 793.0,487.2 806.0,494.6"/><polyline points="405.8,368.8 379.9,394.7 343.0,402.0"/><polyline points="264.6,472.3 246.1,490.7 220.3,542.5 214.3,560.0 211.6,586.4 195.8,625.9 187.9,649.6"/><polyline points="6.0,660.2 58.7,647.0 79.8,643.0 98.3,641.7 127.3,639.1 151.0,641.7 177.4,653.6 190.6,654.9 216.9,647.0 258.2,646.5 294.2,639.3 320.0,625.3 329.9,625.3 344.6,628.3 358.4,632.2 367.3,637.1 378.1,638.1 384.0,636.2 389.0,630.2 400.0,622.4 400.0,619.4 443.2,615.8 515.3,615.8 562.1,635.6 616.1,642.9 670.2,653.7 706.2,660.9 742.2,662.7 778.2,657.3 806.0,651.0"/><polyline points="87.7,647.0 95.6,665.5 116.7,670.7 143.1,678.6 161.5,686.5 174.7,676.0 185.3,660.2"/><polyline points="6.0,615.4 13.9,631.2 11.3,660.2"/><polyline points="806.0,540.0 800.5,560.0 793.0,587.0 789.0,598.0 785.5,632.0 796.3,668.0 806.0,700.0"/></g><polyline points="6.0,105.0 155.6,105.0 161.2,115.0 157.5,124.0 146.4,135.0 138.0,149.0 187.0,149.0" fill="none" stroke="#000" stroke-width="1" shape-rendering="crispEdges"/><polyline points="202.5,6.0 201.8,11.6 208.1,22.9 208.1,29.2 201.8,32.7 202.5,36.9 206.0,39.7 211.6,53.8 218.0,58.0 222.2,55.2 225.0,59.4 230.6,62.2 232.7,66.5 227.8,74.9 230.6,81.9 225.7,90.4 222.2,98.8 213.7,91.8 208.1,104.4 202.5,101.6 198.3,97.4 204.6,103.0 201.1,107.2 201.1,115.7 194.0,120.0" fill="none" stroke="#000" stroke-width="1" shape-rendering="crispEdges"/><polyline points="225.0,59.4 229.2,45.4 239.0,39.7 246.0,39.7 261.5,47.5 275.6,54.5 282.6,46.8 277.0,36.9 278.4,25.7 285.4,21.5 296.7,19.4 309.4,17.2 309.4,11.6 304.4,6.0" fill="none" stroke="#000" stroke-width="1" shape-rendering="crispEdges"/><polyline points="208.1,104.4 264.4,105.1 312.2,105.1 312.2,89.0 324.8,91.8 340.0,92.0 461.2,94.0 527.7,95.4 635.9,94.7 787.5,95.5 806.0,97.7" fill="none" stroke="#000" stroke-width="1" shape-rendering="crispEdges"/><polyline points="194.0,120.0 193.9,120.3 193.8,120.6 193.6,120.9 193.4,121.2 193.2,121.4 193.0,121.6 192.7,121.8 192.4,122.0 192.2,122.2 191.9,122.3 191.6,122.5 191.3,122.7 191.1,122.9 190.8,123.1 190.6,123.3 190.3,123.5 190.1,123.8 190.0,124.1 189.9,124.4 189.8,124.7 189.7,125.0 189.7,125.3 189.7,125.7 189.8,126.0 189.9,126.3 190.0,126.6 190.2,126.9 190.4,127.1 190.5,127.4 190.7,127.7 190.9,128.0 191.1,128.2 191.3,128.5 191.4,128.8 191.5,129.1 191.6,129.4 191.7,129.7 191.7,130.0 191.7,130.4 191.7,130.7 191.7,130.7 191.6,131.1 191.6,131.4 191.7,131.8 191.8,132.2 191.9,132.5 192.1,132.9 192.3,133.2 192.5,133.5 192.7,133.8 192.9,134.1 193.2,134.4 193.4,134.7 193.6,135.0 193.8,135.3 193.9,135.6 194.1,136.0 194.1,136.5 194.2,136.8 194.1,137.2 194.1,137.6 194.0,137.9 193.8,138.3 193.6,138.6 193.4,138.9 193.1,139.1 192.8,139.3 192.5,139.6 192.1,139.7 191.8,139.9 191.5,140.1 191.1,140.2 190.8,140.4 190.5,140.6 190.2,140.8 189.9,141.0 189.6,141.3 189.4,141.5 189.2,141.9 189.0,142.2 188.9,142.6 188.9,142.6 188.8,142.9 188.6,143.2 188.4,143.5 188.1,143.7 187.8,143.9 187.5,144.0 187.2,144.1 186.8,144.2 186.5,144.3 186.1,144.3 185.8,144.4 185.5,144.5 185.1,144.6 184.8,144.7 184.5,144.8 184.2,145.0 183.9,145.2 183.7,145.5 183.5,145.8 183.4,146.1 183.4,146.5 183.4,146.8 183.4,147.2 183.6,147.5 183.7,147.8 183.9,148.1 184.2,148.3 184.4,148.6 184.7,148.8 185.0,149.0 185.2,149.2 185.5,149.4 185.8,149.7 186.1,150.4 186.4,150.6 186.7,150.8 187.0,151.0 187.2,151.2 187.4,151.6 187.5,151.9 187.5,151.9 187.8,152.7 188.3,153.5 189.0,154.1 189.9,154.5 190.7,154.7 191.7,154.8 192.6,154.8 193.5,154.6 194.4,154.4 195.2,154.1 196.1,153.8 197.0,153.6 197.9,153.5 198.8,153.4 199.7,153.5 200.6,153.7 201.4,154.1 200.7,164.1 200.6,165.0 200.3,165.9 199.8,166.6 199.1,167.2 198.3,167.7 197.4,167.9 196.5,167.9 195.6,167.8 194.7,167.6 193.9,167.2 193.0,166.8 192.2,166.4 191.5,165.9 190.6,165.5 189.8,165.1 188.9,164.9 188.0,164.8 187.1,164.8 186.2,165.0 185.4,165.5 184.7,166.1 184.2,166.8 184.2,166.8 183.9,167.3 183.6,167.6 183.3,167.9 182.9,168.2 182.5,168.3 182.0,168.5 181.5,168.5 181.1,168.6 180.6,168.6 180.1,168.6 179.6,168.7 179.1,168.7 178.7,168.7 178.2,168.8 177.7,168.9 177.3,169.1 176.9,169.3 176.5,169.6 176.1,169.9 175.8,170.3 175.6,170.7 175.4,171.2 175.3,171.7 175.3,172.1 175.3,172.6 175.4,173.1 175.5,173.6 175.6,174.0 175.8,174.5 175.9,174.9 176.1,175.4 176.3,175.8 176.4,176.3 176.5,176.7 176.6,177.2 176.6,177.7 176.6,178.2 176.5,178.6 176.3,179.1 176.1,179.5 176.1,179.5 175.8,179.9 175.7,180.3 175.6,180.7 175.6,181.2 175.6,181.6 175.7,182.0 175.8,182.5 176.0,182.9 176.1,183.3 176.3,183.7 176.5,184.1 176.7,184.5 176.8,184.9 176.9,185.3 177.0,185.7 177.1,186.2 177.0,186.6 177.0,187.1 176.8,187.5 176.6,187.8 176.3,188.2 176.0,188.5 175.6,188.7 175.2,188.9 174.8,189.1 174.4,189.2 174.0,189.2 173.5,189.2 173.1,189.2 172.6,189.2 172.2,189.2 171.8,189.2 171.3,189.2 170.9,189.3 170.5,189.4 170.0,189.5 169.6,189.7 169.3,189.9 169.0,190.2 168.7,190.6 168.7,190.6 168.5,190.8 168.2,191.0 167.9,191.1 167.6,191.2 167.3,191.3 167.0,191.3 166.7,191.4 166.4,191.4 166.1,191.4 165.8,191.4 165.5,191.4 165.2,191.3 164.9,191.4 164.6,191.4 164.2,191.4 163.9,191.5 163.6,191.6 163.4,191.8 163.1,191.9 162.9,192.1 162.7,192.4 162.5,192.6 162.4,192.9 162.2,193.2 162.2,193.5 162.1,193.8 162.1,194.1 162.1,194.4 162.1,194.7 162.1,195.1 162.1,195.4 162.1,195.7 162.1,196.0 162.1,196.3 162.0,196.6 162.0,196.9 161.8,197.2 161.7,197.5 161.5,197.7 161.3,198.0 161.3,198.0 160.9,198.6 160.6,199.3 160.5,200.0 160.6,200.8 160.9,201.5 161.3,202.1 161.8,202.7 162.3,203.2 162.9,203.6 163.6,204.0 164.2,204.4 164.8,204.9 165.3,205.4 165.8,205.9 166.2,206.6 166.5,207.3 166.6,208.0 166.5,208.8 166.3,209.5 165.8,210.1 165.2,210.5 164.5,210.8 163.8,210.9 163.0,210.8 162.3,210.5 161.7,210.1 161.1,209.6 160.6,209.1 160.2,208.4 159.8,207.8 159.3,207.2 158.9,206.6 158.4,206.0 157.8,205.6 157.2,205.2 156.5,204.9 155.7,204.8 155.0,204.9 154.3,205.1 153.8,205.6 153.8,205.6 154.0,206.5 154.0,207.4 153.7,208.2 153.3,209.0 152.7,209.6 152.0,210.2 151.2,210.6 150.4,210.9 149.5,211.2 148.7,211.5 147.8,211.7 147.0,212.0 146.1,212.3 145.4,212.7 144.7,213.3 144.1,213.9 143.6,214.7 143.4,215.5 143.3,216.4 143.5,217.3 143.9,218.1 144.4,218.8 145.2,219.3 146.0,219.6 146.8,219.8 147.7,219.8 148.2,218.2 149.1,218.1 150.0,218.0 150.9,217.8 151.7,217.6 152.6,217.4 153.5,217.4 154.4,217.4 155.2,217.5 156.1,217.8 156.8,218.3 157.4,218.9 157.9,219.7 158.1,220.5 158.1,220.5 158.3,221.0 158.4,221.5 158.7,221.9 159.0,222.3 159.3,222.6 159.6,222.9 160.0,223.2 160.4,223.5 160.9,223.7 161.3,223.9 161.7,224.1 162.1,224.4 162.5,224.6 162.9,224.9 163.3,225.2 163.6,225.6 163.9,226.0 164.1,226.4 164.3,226.8 162.3,231.9 161.9,232.2 161.5,232.4 161.1,232.5 160.6,232.7 160.1,232.7 159.6,232.7 159.2,232.7 158.7,232.6 158.2,232.5 157.7,232.4 157.3,232.3 156.8,232.2 156.3,232.2 155.8,232.1 155.4,232.1 154.9,232.2 154.4,232.3 154.0,232.5 153.6,232.7 153.2,233.0 153.2,233.0 152.7,233.3 152.3,233.5 151.7,233.5 151.2,233.5 150.7,233.4 150.2,233.2 149.8,233.0 149.4,232.7 148.9,232.4 148.6,232.0 148.2,231.7 147.8,231.4 147.3,231.1 146.9,230.8 146.4,230.6 145.9,230.5 145.4,230.5 144.9,230.6 144.4,230.8 143.9,231.1 143.6,231.5 143.3,231.9 143.2,232.4 143.1,232.9 143.1,233.4 143.3,233.9 143.4,234.4 143.7,234.9 143.9,235.4 144.2,235.8 144.5,236.2 144.7,236.7 144.4,237.8 144.8,238.2 145.1,238.6 145.3,239.1 145.4,239.6 145.5,240.1 145.4,240.6 145.2,241.1 145.2,241.1 144.9,242.0 144.9,242.9 145.0,243.8 145.4,244.6 145.9,245.3 146.6,246.0 147.3,246.5 148.1,246.9 149.0,247.3 149.8,247.6 150.6,247.9 151.5,248.3 152.3,248.7 153.0,249.2 153.7,249.8 154.2,250.6 154.6,251.4 150.1,257.4 149.6,258.2 149.0,258.8 148.1,259.2 147.3,259.3 146.3,259.3 145.5,259.0 144.7,258.6 144.0,258.0 143.4,257.3 142.9,256.6 142.4,255.8 142.0,255.0 141.6,254.2 141.1,253.4 140.6,252.6 140.0,252.0 139.3,251.4 138.5,250.9 137.6,250.7 136.7,250.6 135.8,250.8 135.0,251.2 135.0,251.2 134.6,251.4 134.2,251.6 133.7,251.8 133.3,251.8 132.8,251.9 132.3,251.9 131.9,251.8 131.4,251.8 130.9,251.7 130.5,251.6 129.3,252.2 128.9,252.3 128.4,252.4 128.0,252.6 127.5,252.8 127.1,253.0 126.7,253.2 126.4,253.5 126.0,253.9 125.7,254.2 125.5,254.6 125.3,255.1 125.2,255.5 125.1,256.0 125.1,256.5 125.1,256.9 125.1,257.4 125.2,257.9 125.3,258.3 125.4,258.8 125.5,259.3 125.6,259.7 125.6,260.2 125.7,260.7 125.7,261.1 125.7,261.6 125.6,262.1 125.5,262.5 125.3,262.9 125.0,263.4 125.0,263.4 124.7,263.9 124.6,264.6 124.6,265.2 124.8,265.8 125.1,266.4 125.5,266.9 126.0,267.4 126.5,267.8 127.1,268.1 127.6,268.5 128.2,268.8 128.7,269.2 129.2,269.6 129.7,270.1 130.1,270.6 130.4,271.2 130.6,271.8 130.7,272.5 130.6,273.1 130.4,273.7 130.0,274.3 129.5,274.7 129.0,275.1 128.3,275.3 127.7,275.4 127.0,275.4 126.4,275.3 125.8,275.1 125.1,274.9 124.5,274.7 123.9,274.4 123.3,274.2 122.7,274.1 122.0,274.0 121.3,274.0 120.7,274.1 120.1,274.3 119.5,274.6 119.0,275.1 118.7,275.6 118.7,275.6 118.5,276.0 118.2,276.3 117.9,276.6 117.6,276.8 117.3,277.0 116.9,277.2 116.5,277.3 116.1,277.4 115.7,277.5 115.3,277.6 114.9,277.7 114.5,277.8 114.1,277.9 113.8,278.0 113.4,278.2 113.0,278.4 112.7,278.6 112.4,278.9 112.2,279.2 112.0,279.6 111.8,279.9 111.7,280.3 111.7,280.7 111.7,281.1 111.7,281.5 111.8,281.9 111.9,282.3 112.1,282.7 112.2,283.1 112.4,283.4 112.6,283.8 112.7,284.2 112.9,284.5 113.0,284.9 113.1,285.3 113.2,285.7 113.2,286.1 113.1,286.5 113.0,286.9 112.9,287.3 112.9,287.3 112.7,287.6 112.6,288.0 112.5,288.4 112.5,288.8 112.5,289.1 112.6,289.5 112.7,289.9 112.8,290.2 112.9,290.6 113.0,291.0 113.2,291.3 113.3,291.7 113.4,292.0 113.5,292.4 113.5,292.8 113.5,293.2 113.5,293.5 113.5,293.9 113.4,294.3 113.2,294.6 113.0,295.0 112.8,295.3 112.5,295.5 112.3,295.7 112.0,295.9 111.6,296.1 111.3,296.3 111.0,296.4 110.6,296.5 110.2,296.7 109.9,296.8 109.5,296.9 109.2,297.1 108.8,297.2 108.5,297.4 108.2,297.6 107.9,297.9 107.7,298.2 107.4,298.5 107.3,298.8 107.3,298.8 106.7,299.7 105.9,300.3 105.0,300.8 104.1,301.1 103.0,301.1 102.0,301.0 101.0,300.6 100.1,300.2 99.2,299.7 98.4,299.2 97.5,298.6 96.6,298.1 95.7,297.7 94.7,297.4 93.7,297.2 92.7,297.3 91.7,297.5 90.8,298.0 90.0,298.7 90.3,297.9 89.9,298.8 89.8,299.8 89.9,300.8 90.2,301.8 90.7,302.7 91.4,303.4 92.2,304.1 93.1,304.6 94.0,305.1 94.9,305.5 95.8,306.0 96.7,306.4 97.6,307.0 98.4,307.6 99.1,308.4 99.6,309.2 99.9,310.2 100.0,311.2 99.9,312.2 99.4,313.2 99.4,313.2 99.2,313.6 99.1,314.0 99.0,314.4 99.0,314.9 99.1,315.3 99.2,315.8 99.3,316.2 99.5,316.6 99.7,317.0 99.9,317.4 100.1,317.8 100.3,318.2 100.5,318.6 100.7,319.0 100.8,319.5 100.8,319.9 100.8,320.4 100.7,320.8 100.6,321.2 100.4,321.6 100.1,322.0 99.8,322.3 99.4,322.6 99.0,322.8 98.6,322.9 98.0,323.3 97.5,323.3 97.1,323.3 96.6,323.3 96.2,323.2 95.7,323.2 95.3,323.1 94.8,323.1 94.4,323.1 94.0,323.2 93.5,323.3 93.1,323.5 92.7,323.7 92.4,324.0 92.1,324.3 92.1,324.3 91.6,324.8 91.0,325.2 90.4,325.5 89.7,325.6 89.0,325.7 88.4,325.6 87.7,325.4 87.0,325.2 86.4,324.9 85.8,324.7 85.2,324.4 84.5,324.1 83.9,323.9 83.2,323.7 82.5,323.7 81.8,323.7 81.2,323.8 80.5,324.1 80.0,324.5 79.5,325.0 79.2,325.6 78.9,326.3 78.9,326.9 78.9,327.6 79.1,328.3 79.3,328.9 79.7,329.5 80.1,330.1 80.5,330.6 80.9,331.1 81.4,331.7 81.8,332.2 82.2,332.8 82.5,333.4 82.8,334.0 83.0,334.7 83.0,335.6 83.1,336.2 83.1,336.9 83.0,337.6 83.0,337.6 82.8,338.5 82.9,339.5 83.3,340.4 83.8,341.2 84.5,341.9 85.3,342.5 86.2,342.9 87.1,343.2 88.0,343.4 89.0,343.6 89.9,343.8 90.9,344.0 91.8,344.3 92.7,344.7 93.5,345.3 94.2,345.9 94.7,346.7 95.0,347.7 95.1,348.6 95.0,349.6 94.6,350.5 93.9,351.2 93.2,351.8 92.3,352.2 91.3,352.3 90.3,352.3 89.4,352.2 88.5,351.9 87.5,351.6 86.6,351.2 85.8,350.9 84.8,350.5 83.9,350.3 83.0,350.1 82.0,350.1 81.0,350.3 80.1,350.7 79.4,351.2 78.7,352.0 78.3,352.9 78.3,352.9 78.2,353.3 77.9,353.7 77.6,354.2 77.3,354.5 76.9,354.8 76.5,355.1 76.1,355.3 75.7,355.5 75.2,355.6 74.7,355.8 74.3,355.9 73.8,356.1 73.4,356.3 73.0,356.5 72.6,356.7 72.2,357.1 71.9,357.4 71.6,357.8 71.5,358.3 71.4,358.7 71.4,359.2 71.5,359.7 71.6,360.1 71.9,360.6 72.2,360.9 72.5,361.3 72.9,361.6 73.3,361.8 73.7,362.1 74.1,362.3 74.5,362.5 75.0,362.8 75.3,363.0 75.7,363.3 76.1,363.6 76.4,364.0 76.6,364.4 76.8,364.9 76.9,365.4 76.8,365.8 76.8,365.8 76.8,366.3 76.9,366.9 77.1,367.3 77.4,367.8 77.7,368.2 78.1,368.5 78.5,368.8 78.9,369.1 79.4,369.3 79.8,369.6 80.3,369.8 80.7,370.1 81.1,370.3 81.6,370.6 81.9,371.0 82.2,371.4 82.5,371.8 82.7,372.3 82.8,372.8 82.4,370.1 82.5,370.6 82.6,371.1 82.6,371.6 82.5,372.1 82.3,372.6 82.0,373.1 81.7,373.5 81.4,373.9 81.0,374.2 80.7,374.6 80.3,374.9 79.9,375.3 79.6,375.7 79.3,376.1 79.0,376.6 78.9,377.0 78.7,377.5 78.7,378.0 78.8,378.5 78.9,379.0 78.9,379.0 79.0,379.4 79.1,379.7 79.1,380.1 79.0,380.4 78.9,380.7 78.8,381.1 78.6,381.4 78.4,381.7 78.2,381.9 78.0,382.2 77.8,382.5 77.6,382.8 77.4,383.1 77.2,383.4 77.1,383.7 77.0,384.0 76.9,384.4 76.9,384.7 77.0,385.1 77.1,385.4 77.2,385.7 77.4,386.0 77.7,386.2 78.0,386.4 78.3,386.6 78.6,386.7 78.9,386.8 79.3,386.9 79.6,387.0 80.0,387.0 80.3,387.0 80.7,387.1 81.0,387.2 81.3,387.3 81.7,387.4 82.0,387.6 82.3,387.8 82.5,388.0 82.7,388.3 82.9,388.6 82.9,388.6 83.1,389.0 83.3,389.4 83.6,389.7 83.9,390.0 84.2,390.3 84.6,390.6 85.0,390.8 85.4,391.0 85.8,391.2 86.2,391.4 86.6,391.6 87.0,391.8 87.4,392.0 87.8,392.2 88.2,392.5 88.5,392.8 88.8,393.1 89.0,396.3 88.9,396.7 88.8,397.1 88.6,397.5 88.4,397.9 88.1,398.3 87.8,398.6 87.5,398.9 87.1,399.2 86.8,399.4 86.4,399.7 86.0,399.9 85.6,400.1 85.2,400.3 84.8,400.5 84.4,400.7 84.0,401.0 83.7,401.2 83.3,401.5 83.0,401.9 82.8,402.2 82.5,402.6 82.4,403.0 82.4,403.0 82.2,403.4 81.9,403.7 81.6,404.0 81.2,404.2 80.8,404.3 80.4,404.4 80.0,404.4 79.5,404.3 79.1,404.3 78.7,404.2 78.3,404.1 77.9,404.0 77.4,404.0 77.0,404.0 76.6,404.1 76.2,404.2 75.8,404.4 75.5,404.6 75.2,405.0 75.0,405.4 74.9,405.8 74.9,406.2 75.0,406.6 75.1,407.0 75.4,407.4 75.7,407.7 76.0,408.0 76.3,408.2 76.7,408.4 77.1,408.6 77.4,408.8 77.8,409.1 78.2,409.3 78.5,409.6 78.8,409.9 79.0,410.2 79.2,410.6 79.2,411.1 79.2,411.5 79.1,411.9 79.1,411.9 79.0,412.3 79.0,412.8 79.1,413.3 79.2,413.7 79.4,414.1 79.7,414.5 80.0,414.8 80.4,415.1 80.8,415.4 81.1,415.6 81.5,415.9 81.9,416.2 82.2,416.5 82.9,414.4 83.3,414.6 83.7,414.9 84.0,415.2 84.3,415.5 84.5,416.0 84.6,416.4 84.6,416.9 84.6,417.3 84.4,417.7 84.2,418.1 83.9,418.5 83.5,418.8 83.1,419.1 82.7,419.3 82.3,419.5 81.9,419.6 81.5,419.8 81.0,420.0 80.6,420.2 80.3,420.5 79.9,420.8 79.6,421.2 79.4,421.6 79.2,422.0 79.1,422.4 79.2,422.9 79.2,422.9 79.2,423.3 79.1,423.8 79.0,424.2 78.8,424.6 78.6,425.0 78.3,425.3 78.0,425.6 77.7,425.9 77.3,426.2 77.0,426.4 76.6,426.7 76.2,427.0 75.9,427.3 75.6,427.6 75.3,427.9 75.1,428.3 74.9,428.7 75.2,430.4 75.3,430.8 75.4,431.2 75.6,431.6 75.9,432.0 76.2,432.3 76.6,432.5 77.0,432.7 77.4,432.9 77.8,433.0 78.2,433.0 78.7,433.1 79.1,433.1 79.6,433.2 80.0,433.2 80.4,433.3 80.9,433.4 81.3,433.5 81.7,433.7 82.0,434.0 82.4,434.3 82.6,434.6 82.8,435.0 82.8,435.0 83.1,435.5 83.4,435.9 83.7,436.3 84.2,436.7 84.6,436.9 85.1,437.2 85.6,437.4 86.1,437.6 86.6,437.7 87.1,437.8 87.6,438.0 88.1,438.1 88.6,438.3 89.1,438.5 89.6,438.7 90.0,439.0 90.4,439.3 90.8,439.7 91.1,440.2 91.3,440.6 91.5,441.1 91.6,441.7 91.6,442.2 91.6,442.7 91.5,443.2 91.3,443.7 91.1,444.2 90.9,444.7 90.6,445.2 90.3,445.6 90.1,446.1 89.8,446.5 89.6,447.0 89.4,447.5 89.2,448.0 89.1,448.5 89.1,449.1 89.1,449.6 89.2,450.1 89.3,450.6 89.3,450.6 89.4,451.0 89.4,451.4 89.4,451.8 89.4,452.2 89.3,452.5 89.1,452.9 88.9,453.2 88.7,453.6 88.5,453.9 88.3,454.2 88.1,454.5 87.9,454.8 87.7,455.2 87.5,455.5 87.3,455.9 87.2,456.3 87.2,456.6 87.1,457.0 87.2,457.4 87.3,457.8 87.4,458.1 87.6,458.5 87.9,458.8 88.1,459.0 88.5,459.3 88.8,459.5 89.1,459.6 89.5,459.8 89.9,459.9 90.2,460.0 90.6,460.2 91.0,460.3 91.3,460.4 91.7,460.6 92.0,460.8 92.3,461.1 92.6,461.3 92.8,461.6 93.0,462.0 93.2,462.3 93.2,462.3 93.4,462.7 93.6,463.1 93.9,463.5 94.3,463.8 94.6,464.0 95.1,464.3 95.5,464.4 95.9,464.6 96.4,464.7 96.8,464.8 97.3,464.9 97.7,465.0 98.2,465.2 98.6,465.3 99.0,465.6 99.4,465.8 99.7,466.1 100.0,466.5 100.3,466.9 100.5,467.3 100.6,467.7 100.6,468.2 100.6,468.7 100.5,469.1 100.3,469.6 100.1,470.0 99.9,470.4 99.6,470.7 99.3,471.1 98.7,473.8 98.3,473.8 97.8,473.8 97.3,473.8 96.9,473.8 96.4,473.9 96.0,474.1 95.6,474.3 95.2,474.5 94.8,474.9 94.5,475.2 94.5,475.2 94.1,475.7 93.6,476.0 93.1,476.3 92.4,476.4 91.8,476.4 91.2,476.2 90.6,476.0 90.1,475.7 89.5,475.4 89.0,475.1 88.5,474.7 88.0,474.4 87.4,474.1 86.8,473.9 86.2,473.8 85.6,473.8 85.0,473.9 84.4,474.1 83.9,474.5 83.5,474.9 83.2,475.5 83.1,476.1 83.1,476.7 83.2,477.3 83.5,477.9 83.8,478.4 84.2,478.9 84.7,479.3 85.2,479.7 85.7,480.0 86.2,480.4 86.7,480.7 87.2,481.1 87.6,481.6 87.9,482.1 88.2,482.7 88.4,483.6 88.6,484.2 88.7,484.8 88.7,485.4 88.7,485.4 88.6,485.9 88.7,486.4 88.8,486.8 89.1,487.2 89.4,487.6 89.7,487.9 90.1,488.2 90.6,488.5 91.0,488.7 91.4,488.9 91.9,489.1 92.3,489.3 92.7,489.6 93.1,489.8 93.5,490.2 93.8,490.6 94.0,491.0 94.2,491.4 94.2,491.9 94.2,492.4 94.0,492.9 93.8,493.3 93.5,493.7 93.1,494.0 92.7,494.2 92.2,494.4 91.7,494.5 91.3,494.5 90.8,494.6 90.3,494.6 89.8,494.6 89.3,494.6 88.8,494.7 88.4,494.8 87.9,495.0 87.5,495.2 87.1,495.5 86.8,495.9 86.6,496.3 86.4,496.8 86.4,496.8 86.3,497.2 86.1,497.7 85.9,498.1 85.6,498.5 85.3,498.8 84.9,499.2 84.5,499.5 84.1,499.8 83.7,500.0 83.3,500.3 82.9,500.5 82.5,500.8 82.1,501.1 82.5,499.6 82.0,499.7 81.5,499.9 81.1,500.1 80.7,500.3 80.3,500.6 80.0,501.0 79.7,501.4 79.4,501.8 79.2,502.2 79.1,502.7 79.0,503.1 79.0,503.6 79.0,504.1 79.0,504.6 79.0,505.1 79.1,505.5 79.1,506.0 79.1,506.5 79.2,507.0 79.2,507.5 79.1,507.9 79.0,508.4 78.9,508.9 78.7,509.3 78.5,509.7 78.2,510.1 78.2,510.1 78.0,510.4 77.8,510.6 77.7,510.9 77.7,511.2 77.6,511.5 77.6,511.8 77.7,512.1 77.7,512.4 77.8,512.7 77.9,513.0 77.9,513.3 78.0,513.6 78.1,513.9 78.1,514.2 78.1,514.5 78.1,514.8 78.0,515.1 77.9,515.4 77.8,515.7 77.6,515.9 77.3,516.2 77.1,516.3 76.8,516.5 76.5,516.6 76.2,516.7 75.9,516.7 75.6,516.7 75.3,516.7 75.0,516.7 74.7,516.6 74.4,516.6 74.1,516.6 73.8,516.6 73.5,516.6 73.2,516.6 72.9,516.7 72.6,516.8 72.4,517.0 72.2,517.2 72.0,517.4 72.0,517.4 71.5,517.9 71.0,518.3 70.4,518.6 69.7,518.8 69.1,518.8 68.4,518.8 67.8,518.6 67.1,518.4 66.5,518.2 65.9,517.9 65.3,517.6 64.7,517.4 64.0,517.1 63.4,517.0 62.7,516.9 62.0,517.0 61.4,517.2 60.8,517.4 60.3,517.9 59.8,518.4 59.5,519.0 59.3,519.6 59.3,520.3 59.4,520.9 59.6,521.6 59.9,522.2 60.3,522.7 60.8,523.2 61.2,523.7 61.7,524.2 62.2,524.6 62.7,525.1 63.1,525.6 63.5,526.1 63.8,526.7 64.0,527.3 64.1,528.0 64.0,528.6 63.8,529.3 63.5,529.9 63.5,529.9 63.3,530.2 63.1,530.5 63.1,530.9 63.0,531.3 63.0,531.6 63.1,532.0 63.2,532.4 63.3,532.7 63.5,533.1 63.7,533.4 63.8,533.7 64.0,534.1 64.1,534.4 64.2,534.8 64.3,535.2 64.3,535.6 64.3,535.9 64.2,536.3 64.0,536.6 63.8,537.0 63.6,537.2 63.3,537.5 63.0,537.7 62.6,537.8 62.2,537.9 61.9,537.9 61.5,537.9 61.1,537.9 60.7,537.8 60.4,537.8 60.0,537.7 59.6,537.7 59.2,537.7 58.9,537.7 58.5,537.7 58.1,537.8 57.8,537.9 57.5,538.1 57.2,538.3 56.9,538.6 56.9,538.6 56.6,538.9 56.3,539.2 56.0,539.3 55.6,539.4 55.2,539.5 54.8,539.5 54.4,539.4 54.0,539.4 53.6,539.3 53.2,539.1 52.9,539.0 52.5,538.9 52.1,538.8 51.7,538.8 51.3,538.8 50.9,538.8 50.5,538.9 50.1,539.1 49.8,539.4 48.8,541.6 48.7,542.0 48.8,542.4 48.9,542.8 49.0,543.2 49.2,543.5 49.5,543.8 49.8,544.1 50.1,544.3 50.4,544.6 50.7,544.8 51.1,545.0 51.4,545.2 51.7,545.5 52.0,545.8 52.2,546.1 52.4,546.4 52.6,546.8 52.7,547.2 52.7,547.6 52.6,548.0 52.6,548.0 52.6,548.4 52.6,548.9 52.8,549.3 53.0,549.7 53.3,550.1 53.7,550.3 54.1,550.6 54.5,550.8 54.9,550.9 55.4,551.1 55.8,551.2 56.2,551.4 56.7,551.6 57.1,551.8 57.4,552.1 57.7,552.4 58.0,552.8 58.1,553.3 58.2,553.7 58.1,554.2 58.0,554.6 57.7,555.0 57.4,555.3 57.0,555.6 56.5,555.7 56.1,555.8 55.6,555.8 55.2,555.8 54.7,555.7 54.2,555.7 53.8,555.6 53.3,555.5 52.9,555.5 52.4,555.5 51.9,555.6 51.5,555.8 51.1,556.0 50.8,556.3 50.5,556.7 50.4,557.1 50.4,557.1 49.9,558.2 49.2,559.1 48.2,559.8 47.2,560.3 46.0,560.5 44.8,560.4 43.7,560.2 42.5,559.8 41.5,559.3 40.4,558.8 39.4,558.3 38.3,557.8 37.2,557.4 36.0,557.1 34.8,557.1 33.7,557.3 32.6,557.7 31.6,558.4 30.9,559.4 30.5,560.4 30.4,561.6 30.6,562.8 31.1,563.8 31.8,564.7 32.8,565.5 33.8,566.0 35.0,566.3 36.1,566.5 37.3,566.6 38.5,566.6 39.7,566.6 40.8,566.7 42.0,566.9 43.1,567.2 44.2,567.7 45.1,568.4 45.9,569.3 46.4,570.4 46.6,571.6 46.5,572.7 46.5,572.7 46.4,573.8 46.5,574.9 47.0,575.9 47.7,576.7 48.6,577.4 49.6,577.9 50.6,578.2 51.7,578.3 52.8,578.4 53.9,578.4 55.0,578.4 56.1,578.5 57.2,578.7 58.3,579.0 59.3,579.4 60.1,580.1 60.8,580.9 61.3,581.9 61.5,583.0 61.1,573.9 61.4,575.0 61.3,576.1 60.9,577.1 60.3,578.0 59.5,578.8 58.6,579.4 57.6,579.8 56.5,580.1 55.4,580.2 54.4,580.4 53.3,580.5 52.2,580.7 51.1,581.0 50.1,581.4 49.2,582.0 48.4,582.7 47.8,583.7 47.4,584.7 47.3,585.8 47.6,586.9 47.6,586.9 47.7,587.2 47.7,587.5 47.7,587.8 47.6,588.1 47.5,588.4 47.4,588.6 47.2,588.9 47.1,589.2 46.9,589.4 46.7,589.6 46.5,589.9 46.3,590.1 46.1,590.4 46.0,590.7 45.9,590.9 45.8,591.2 45.7,591.5 45.7,591.8 45.7,592.1 45.8,592.4 45.9,592.7 46.1,593.0 46.3,593.2 46.6,593.4 46.8,593.6 47.1,593.7 47.4,593.8 47.7,593.9 48.0,593.9 48.3,594.0 48.6,594.0 48.9,594.1 49.2,594.2 49.5,594.3 50.3,593.6 50.0,593.8 49.8,594.0 49.5,594.1 49.2,594.2 48.9,594.2 48.9,594.2 48.6,594.3 48.4,594.4 48.2,594.5 48.0,594.7 47.9,594.9 47.8,595.2 47.8,595.4 47.7,595.7 47.7,595.9 47.8,596.2 47.8,596.4 47.8,596.7 47.7,596.9 47.7,597.2 47.6,597.4 47.5,597.6 47.3,597.8 47.1,598.0 46.9,598.1 46.6,598.1 46.4,598.1 46.1,598.0 45.9,597.9 45.7,597.7 45.6,597.5 45.5,597.2 45.4,597.0 45.4,596.7 45.4,596.5 45.4,596.2 45.4,596.0 45.4,595.7 45.4,595.4 45.3,595.2 45.2,595.0 45.1,594.7 44.9,594.6 44.7,594.4 44.5,594.3 44.2,594.3 44.2,594.3" fill="none" stroke="#000" stroke-width="1" shape-rendering="crispEdges"/><polyline points="6.0,415.0 78.0,415.0" fill="none" stroke="#000" stroke-width="1" shape-rendering="crispEdges"/><polyline points="44.2,594.3 47.8,594.9 50.2,593.8 52.3,594.6 56.3,594.8 59.1,594.8 61.9,594.9 65.9,594.1 68.5,594.7 70.9,594.4 75.1,593.8 78.1,594.7 81.2,594.0 82.8,594.9 87.2,594.2 88.8,593.7 92.9,593.9 96.6,594.5 98.1,594.6 101.5,595.2 105.6,594.3 108.1,594.7 111.5,595.3 112.9,594.0 117.1,593.9 120.1,593.5 123.7,594.4 125.2,594.6 128.7,593.7 132.0,593.6 134.5,595.0 138.5,593.3 141.7,593.3 143.8,595.1 147.5,593.9 150.0,594.1 152.5,595.3 155.4,594.1 159.8,594.1 163.3,593.8 166.4,595.1 168.8,595.1 171.3,595.0 175.1,594.3 177.5,594.7 180.4,593.5 184.1,593.8 186.6,594.3 185.9,597.9 184.6,599.5 183.8,603.7 183.7,606.1 183.2,610.5 182.6,612.7 180.4,615.2 179.9,618.2 177.4,620.6 177.6,623.8 178.7,626.5 179.1,630.1 180.0,633.8 182.9,635.4 184.9,638.7 187.7,639.5 189.2,641.7 189.8,644.6 189.7,648.3 190.8,652.5 190.6,654.9 191.5,657.4 193.1,661.1 194.5,665.5" fill="none" stroke="#000" stroke-width="1" shape-rendering="crispEdges"/><polyline points="146.4,238.0 492.6,238.0 590.0,238.5 678.4,239.0" fill="none" stroke="#000" stroke-width="1" shape-rendering="crispEdges"/><polyline points="306.0,238.0 303.4,306.0 294.2,379.9 286.8,453.8 279.4,509.2 281.2,546.0 281.5,560.0 282.8,594.3 284.3,649.0" fill="none" stroke="#000" stroke-width="1" shape-rendering="crispEdges"/><polyline points="492.6,238.0 493.1,240.7 493.1,244.6 493.4,246.9 495.8,249.0 495.8,253.0 495.3,255.5 497.3,258.6 497.9,261.0 498.1,264.6 498.1,266.8 499.2,271.4 499.9,274.0 500.0,276.9 499.9,279.0 501.6,282.8 501.6,284.5 501.9,287.7 502.4,291.8 502.8,294.9 504.7,296.2 504.2,300.1 504.0,302.9 505.5,306.0 506.7,308.3 506.6,311.3 507.0,315.9 506.6,317.2 506.8,321.3 507.1,323.4 508.5,328.1 508.8,330.1 509.7,332.6 510.0,335.8 510.5,340.4 509.8,342.6 511.4,344.8 511.1,349.6 513.0,350.9 512.9,355.6 512.9,357.7 512.9,361.0 513.0,363.5 514.7,367.1 515.4,369.1 515.0,373.7 516.0,375.9 516.1,380.1 516.9,381.2 517.8,384.9 517.6,387.7 518.1,391.0 517.9,394.6 518.4,398.0 518.7,401.1 520.8,403.5 521.0,406.1 521.6,409.5 521.0,413.6 521.9,415.5 523.3,418.6 523.4,421.2 524.2,424.5 524.0,428.0 524.2,431.8 525.6,434.6 528.4,436.7 527.6,438.5 529.1,442.0 531.1,446.0 531.7,447.2 533.2,450.0 533.4,453.7 535.8,455.5 536.4,459.6 538.2,461.8 538.8,464.9 540.2,467.3 540.5,471.6 541.4,474.1 540.5,476.3 541.9,479.6 542.5,483.3 539.7,484.9 536.9,487.7 533.2,490.7 531.1,493.0 530.9,496.7 529.7,498.9 528.8,503.4 527.7,505.5 528.1,509.5 527.3,512.7 529.3,515.0 528.9,518.1 529.9,520.2 529.7,524.3 529.3,527.8 530.4,529.7 530.7,533.5 530.5,537.0 529.9,540.1 530.9,543.7 531.4,546.1 530.6,550.0 531.4,552.8 531.4,554.9 530.6,559.3 530.6,562.1 529.1,564.9 530.0,568.1 529.5,572.0 529.7,574.9 531.6,578.4 531.7,582.1 533.4,585.3 533.8,588.8 536.0,592.0 536.9,594.2" fill="none" stroke="#000" stroke-width="1" shape-rendering="crispEdges"/><polyline points="344.1,594.6 536.9,594.4 542.0,610.0 547.7,619.4 720.0,631.3 744.0,633.0 745.6,645.7 752.0,650.5 758.4,649.0 760.0,633.0 758.4,613.7 768.0,608.9 784.0,616.9 806.0,618.5" fill="none" stroke="#000" stroke-width="1" shape-rendering="crispEdges"/><polyline points="344.1,594.6 345.6,596.7 344.2,599.8 343.8,602.6 341.7,605.6 344.3,608.7 346.3,611.6 349.6,614.5 352.5,619.4 355.7,621.5 358.4,622.4 359.4,626.3 358.9,632.2 355.5,635.2 356.5,640.1 359.4,643.0 361.4,646.0" fill="none" stroke="#000" stroke-width="1" shape-rendering="crispEdges"/><polyline points="635.9,94.7 638.7,93.7 641.9,91.3 643.4,90.4 646.8,89.9 650.4,88.1 653.0,86.9 655.0,85.1 657.9,84.7 660.5,83.2 663.4,81.5 666.7,79.6 670.6,77.5 671.9,77.9 675.6,74.9 678.4,74.4 682.0,73.5 682.9,70.6 685.6,68.5 689.2,66.4 692.0,64.3 693.6,64.0 696.9,61.5 698.6,58.9 700.8,56.5 702.2,53.2 704.8,52.6 707.1,49.5 708.0,46.7 710.6,45.2 714.1,44.6 715.9,42.5 719.2,41.8 723.0,40.5 724.3,39.9 728.0,38.1 730.5,36.7 733.9,35.6 736.3,34.1 738.3,31.6 741.0,29.9 743.3,27.0 746.5,25.7 748.5,23.3 751.4,20.9 754.6,20.2 757.2,18.2 759.8,15.2 763.0,11.0 763.7,15.1 765.5,16.9 767.2,20.8 769.8,24.3 770.4,25.6 774.1,28.4 775.1,30.4 776.9,34.3 780.9,37.7 782.0,39.3 785.7,38.9 789.0,41.0 793.0,41.0 796.3,39.5 797.7,37.5 800.8,35.9 802.9,34.7 806.0,32.0" fill="none" stroke="#000" stroke-width="1" shape-rendering="crispEdges"/><polyline points="785.7,95.5 784.4,99.2 785.2,102.8 783.1,103.9 782.5,106.9 783.8,109.7 782.6,113.0 782.0,117.0 778.9,119.2 778.1,122.2 773.0,123.6 771.0,128.0 770.7,130.2 767.2,131.7 765.2,133.1 762.5,133.9 757.2,134.7 754.8,135.0 752.0,134.6 748.7,135.4 745.6,136.8 742.8,137.3 741.8,141.1 739.7,142.4 735.7,144.1 731.7,145.5 730.2,146.5 726.3,145.0 721.8,145.7 718.3,145.0 715.4,144.7 713.0,145.7 708.7,147.4 706.2,148.0 704.3,150.2 700.5,151.6 697.4,154.4 697.4,155.4 693.2,157.6 691.7,161.2 687.3,160.9 687.5,165.3 684.8,165.4 682.1,168.7 678.7,170.9 677.0,171.8 671.7,173.0 669.1,173.6 665.2,175.4 663.5,175.7 660.0,176.0 656.6,178.2 655.3,180.0 652.1,182.3 649.6,182.8 646.6,185.9 645.2,187.2 641.0,187.1 637.9,189.1 636.5,189.6 631.9,190.0 629.9,189.6 625.8,193.2 623.3,191.7 620.8,193.4 617.2,193.8 615.6,194.6 613.9,198.7 611.6,200.2 611.9,205.3 610.7,206.8 610.0,209.3 608.2,213.0 603.7,213.8 603.6,215.3 598.5,215.9 597.5,215.3 593.4,216.8 593.2,219.5 591.5,222.5 590.9,225.8 589.8,229.2 589.4,233.5 590.5,234.2 589.7,239.0" fill="none" stroke="#000" stroke-width="1" shape-rendering="crispEdges"/><polyline points="678.4,237.0 708.0,229.7 733.9,220.5 748.7,220.5 806.0,224.0" fill="none" stroke="#000" stroke-width="1" shape-rendering="crispEdges"/><polyline points="678.4,237.0 677.7,238.0 674.7,241.1 673.3,243.3 670.7,248.0 667.3,250.0 666.6,254.3 662.8,255.0 662.5,257.5 660.0,261.0 661.1,262.6 664.8,267.2 666.5,267.6 668.7,271.0 668.3,273.4 671.0,276.0 673.5,276.0 676.8,278.3 679.5,281.5 682.6,281.2 686.0,284.5 687.6,285.7 688.9,284.5 693.2,287.0 693.7,291.1 697.0,293.1 697.3,295.1 700.8,296.6 699.9,299.1 702.6,304.4 704.3,306.0 705.9,308.5 707.1,310.5 709.9,313.9 709.0,316.5 712.3,319.3 713.9,322.1 713.8,324.1 715.4,328.2 719.3,331.0 720.5,330.7 723.1,333.4 726.8,337.0 729.1,336.8 729.5,340.6 735.0,340.1 736.1,342.9 740.2,343.4 741.3,346.7 742.0,350.3 745.6,351.5 748.4,354.4 750.1,355.8 750.2,357.5 753.1,362.0 755.3,363.5 758.1,367.1 759.8,368.9 761.3,371.4 763.3,376.0 764.8,379.4 763.2,381.7 765.5,383.9 767.2,387.3 769.1,388.6 770.1,393.8 772.2,396.0 775.2,396.6 775.9,400.0 778.3,402.1 781.6,403.2 782.2,404.2 787.4,407.6 787.6,409.5 791.8,409.5 795.4,410.4 796.8,413.2 796.6,415.7 799.8,419.3 800.0,423.4 800.9,426.0 802.3,428.0 801.3,432.0 802.4,434.7 805.2,437.7 805.0,440.5 806.2,443.0 806.0,446.5" fill="none" stroke="#000" stroke-width="1" shape-rendering="crispEdges"/><circle cx="407" cy="407" r="39.5" fill="none" stroke="#ff1818" stroke-width="1.1" shape-rendering="crispEdges"/><circle cx="407" cy="407" r="159.5" fill="none" stroke="#d0d0d0" stroke-width="1" shape-rendering="crispEdges"/><circle cx="407" cy="407" r="279.5" fill="none" stroke="#d0d0d0" stroke-width="1" shape-rendering="crispEdges"/><circle cx="407" cy="407" r="399.5" fill="none" stroke="#d0d0d0" stroke-width="1" shape-rendering="crispEdges"/><rect x="394.2" y="3.1" width="22.6" height="9" fill="#5c504c"/><text x="395.2" y="11.1" font-size="10" fill="#f4f0b8" textLength="20.6" lengthAdjust="spacingAndGlyphs">313</text><rect x="394.4" y="122.9" width="22.2" height="9" fill="#5c504c"/><text x="395.4" y="130.9" font-size="10" fill="#f4f0b8" textLength="20.2" lengthAdjust="spacingAndGlyphs">219</text><rect x="394.5" y="243.7" width="22.0" height="9" fill="#5c504c"/><text x="395.5" y="251.7" font-size="10" fill="#f4f0b8" textLength="20" lengthAdjust="spacingAndGlyphs">125</text><rect x="398.0" y="363.4" width="15.0" height="9" fill="#5c504c"/><text x="399.0" y="371.4" font-size="10" fill="#f4f0b8" textLength="13" lengthAdjust="spacingAndGlyphs">31</text><g><polygon points="427,63 445,82 426,102 408,83" fill="none" stroke="#00dd00" stroke-width="1.2" stroke-dasharray="3,4.5"/><circle cx="399.6" cy="33.1" r="3.9" fill="none" stroke="#f09000" stroke-width="1.15"/><line x1="397.1" y1="33.1" x2="402.1" y2="33.1" stroke="#f09000" stroke-width="1.25"/><line x1="399.6" y1="30.6" x2="399.6" y2="35.6" stroke="#f09000" stroke-width="1.25"/><line x1="402.9" y1="28.5" x2="409.7" y2="28.5" stroke="#f09000" stroke-width="1.2"/><circle cx="415.6" cy="28.5" r="3.9" fill="none" stroke="#f09000" stroke-width="1.15"/><line x1="413.1" y1="28.5" x2="418.1" y2="28.5" stroke="#f09000" stroke-width="1.25"/><circle cx="422.6" cy="27.2" r="3.9" fill="none" stroke="#f09000" stroke-width="1.15"/><line x1="420.1" y1="27.2" x2="425.1" y2="27.2" stroke="#f09000" stroke-width="1.25"/><line x1="422.6" y1="24.7" x2="422.6" y2="29.7" stroke="#f09000" stroke-width="1.25"/><circle cx="418.6" cy="33.7" r="3.9" fill="none" stroke="#f09000" stroke-width="1.15"/><line x1="416.1" y1="33.7" x2="421.1" y2="33.7" stroke="#f09000" stroke-width="1.25"/><line x1="418.6" y1="31.2" x2="418.6" y2="36.2" stroke="#f09000" stroke-width="1.25"/><line x1="406.0" y1="36.5" x2="412.8" y2="36.5" stroke="#f07000" stroke-width="1.2"/><line x1="409.4" y1="33.1" x2="409.4" y2="39.9" stroke="#f07000" stroke-width="1.2"/><line x1="394.9" y1="38.6" x2="401.7" y2="38.6" stroke="#f07000" stroke-width="1.2"/><line x1="398.3" y1="35.2" x2="398.3" y2="42.0" stroke="#f07000" stroke-width="1.2"/><line x1="398.0" y1="44.5" x2="404.8" y2="44.5" stroke="#f09000" stroke-width="1.2"/><line x1="401.4" y1="41.1" x2="401.4" y2="47.9" stroke="#f09000" stroke-width="1.2"/><circle cx="408.5" cy="47.9" r="3.9" fill="none" stroke="#f07000" stroke-width="1.15"/><line x1="406.0" y1="47.9" x2="411.0" y2="47.9" stroke="#f07000" stroke-width="1.25"/><circle cx="408.7" cy="53.5" r="3.9" fill="none" stroke="#f09000" stroke-width="1.15"/><line x1="406.2" y1="53.5" x2="411.2" y2="53.5" stroke="#f09000" stroke-width="1.25"/><circle cx="421.6" cy="52.3" r="3.9" fill="none" stroke="#e85a00" stroke-width="1.15"/><line x1="419.1" y1="52.3" x2="424.1" y2="52.3" stroke="#e85a00" stroke-width="1.25"/><circle cx="425.3" cy="54.8" r="3.9" fill="none" stroke="#e85a00" stroke-width="1.15"/><line x1="422.8" y1="54.8" x2="427.8" y2="54.8" stroke="#e85a00" stroke-width="1.25"/><line x1="425.3" y1="52.3" x2="425.3" y2="57.3" stroke="#e85a00" stroke-width="1.25"/><circle cx="426.6" cy="51.1" r="3.9" fill="none" stroke="#e85a00" stroke-width="1.15"/><line x1="424.1" y1="51.1" x2="429.1" y2="51.1" stroke="#e85a00" stroke-width="1.25"/><line x1="426.6" y1="48.6" x2="426.6" y2="53.6" stroke="#e85a00" stroke-width="1.25"/><circle cx="423.5" cy="57.2" r="3.9" fill="none" stroke="#e85a00" stroke-width="1.15"/><line x1="421.0" y1="57.2" x2="426.0" y2="57.2" stroke="#e85a00" stroke-width="1.25"/><line x1="428.1" y1="48.0" x2="434.9" y2="48.0" stroke="#f07000" stroke-width="1.2"/><line x1="431.5" y1="44.6" x2="431.5" y2="51.4" stroke="#f07000" stroke-width="1.2"/><line x1="428.7" y1="46.5" x2="435.5" y2="46.5" stroke="#f07000" stroke-width="1.2"/><circle cx="431.5" cy="62.8" r="3.9" fill="none" stroke="#f09000" stroke-width="1.15"/><line x1="429.0" y1="62.8" x2="434.0" y2="62.8" stroke="#f09000" stroke-width="1.25"/><line x1="431.5" y1="60.3" x2="431.5" y2="65.3" stroke="#f09000" stroke-width="1.25"/><circle cx="439.5" cy="60.3" r="3.9" fill="none" stroke="#e85a00" stroke-width="1.15"/><line x1="437.0" y1="60.3" x2="442.0" y2="60.3" stroke="#e85a00" stroke-width="1.25"/><circle cx="442.3" cy="58.5" r="3.9" fill="none" stroke="#ffff00" stroke-width="1.15"/><line x1="439.8" y1="58.5" x2="444.8" y2="58.5" stroke="#ffff00" stroke-width="1.25"/><circle cx="445.6" cy="65.6" r="3.9" fill="none" stroke="#e85a00" stroke-width="1.15"/><line x1="443.1" y1="65.6" x2="448.1" y2="65.6" stroke="#e85a00" stroke-width="1.25"/><line x1="445.6" y1="63.1" x2="445.6" y2="68.1" stroke="#e85a00" stroke-width="1.25"/><line x1="450.2" y1="49.9" x2="457.0" y2="49.9" stroke="#f07000" stroke-width="1.2"/><line x1="453.6" y1="46.5" x2="453.6" y2="53.3" stroke="#f07000" stroke-width="1.2"/><line x1="444.7" y1="53.5" x2="451.5" y2="53.5" stroke="#f09000" stroke-width="1.2"/><circle cx="454.9" cy="55.7" r="3.9" fill="none" stroke="#f09000" stroke-width="1.15"/><line x1="452.4" y1="55.7" x2="457.4" y2="55.7" stroke="#f09000" stroke-width="1.25"/><line x1="452.1" y1="59.7" x2="458.9" y2="59.7" stroke="#ffff00" stroke-width="1.2"/><line x1="455.5" y1="56.3" x2="455.5" y2="63.1" stroke="#ffff00" stroke-width="1.2"/><line x1="453.9" y1="62.5" x2="460.7" y2="62.5" stroke="#f8c800" stroke-width="1.2"/><circle cx="412.4" cy="69.5" r="3.9" fill="none" stroke="#f09000" stroke-width="1.15"/><line x1="409.9" y1="69.5" x2="414.9" y2="69.5" stroke="#f09000" stroke-width="1.25"/><circle cx="423.5" cy="67.1" r="3.9" fill="none" stroke="#ffff00" stroke-width="1.15"/><line x1="421.0" y1="67.1" x2="426.0" y2="67.1" stroke="#ffff00" stroke-width="1.25"/><circle cx="412.4" cy="72.0" r="3.9" fill="none" stroke="#ffff00" stroke-width="1.15"/><line x1="409.9" y1="72.0" x2="414.9" y2="72.0" stroke="#ffff00" stroke-width="1.25"/><line x1="437.0" y1="69.2" x2="443.8" y2="69.2" stroke="#ffff00" stroke-width="1.2"/><line x1="440.4" y1="65.8" x2="440.4" y2="72.6" stroke="#ffff00" stroke-width="1.2"/><line x1="452.1" y1="70.2" x2="458.9" y2="70.2" stroke="#ffff00" stroke-width="1.2"/><line x1="455.5" y1="66.8" x2="455.5" y2="73.6" stroke="#ffff00" stroke-width="1.2"/><line x1="460.1" y1="70.5" x2="466.9" y2="70.5" stroke="#f8b000" stroke-width="1.2"/><circle cx="447.5" cy="75.1" r="3.9" fill="none" stroke="#ffff00" stroke-width="1.15"/><line x1="445.0" y1="75.1" x2="450.0" y2="75.1" stroke="#ffff00" stroke-width="1.25"/><circle cx="459.2" cy="76.3" r="3.9" fill="none" stroke="#f09000" stroke-width="1.15"/><line x1="456.7" y1="76.3" x2="461.7" y2="76.3" stroke="#f09000" stroke-width="1.25"/><line x1="430.5" y1="75.4" x2="437.3" y2="75.4" stroke="#f8b000" stroke-width="1.2"/><circle cx="421.3" cy="80.0" r="3.9" fill="none" stroke="#f07000" stroke-width="1.15"/><line x1="418.8" y1="80.0" x2="423.8" y2="80.0" stroke="#f07000" stroke-width="1.25"/><circle cx="427.5" cy="85.3" r="3.9" fill="none" stroke="#ffff00" stroke-width="1.15"/><line x1="425.0" y1="85.3" x2="430.0" y2="85.3" stroke="#ffff00" stroke-width="1.25"/><line x1="427.5" y1="82.8" x2="427.5" y2="87.8" stroke="#ffff00" stroke-width="1.25"/><circle cx="438.3" cy="82.2" r="3.9" fill="none" stroke="#f8b000" stroke-width="1.15"/><line x1="435.8" y1="82.2" x2="440.8" y2="82.2" stroke="#f8b000" stroke-width="1.25"/><line x1="438.3" y1="79.7" x2="438.3" y2="84.7" stroke="#f8b000" stroke-width="1.25"/><line x1="404.6" y1="82.5" x2="411.4" y2="82.5" stroke="#f8b000" stroke-width="1.2"/><line x1="406.6" y1="86.8" x2="413.4" y2="86.8" stroke="#f8b000" stroke-width="1.2"/><circle cx="389.6" cy="67.3" r="3.9" fill="none" stroke="#f09000" stroke-width="1.15"/><line x1="387.1" y1="67.3" x2="392.1" y2="67.3" stroke="#f09000" stroke-width="1.25"/><line x1="381.9" y1="64.8" x2="388.7" y2="64.8" stroke="#f07000" stroke-width="1.2"/><line x1="385.3" y1="61.4" x2="385.3" y2="68.2" stroke="#f07000" stroke-width="1.2"/><circle cx="385.6" cy="73.4" r="3.9" fill="none" stroke="#f07000" stroke-width="1.15"/><line x1="383.1" y1="73.4" x2="388.1" y2="73.4" stroke="#f07000" stroke-width="1.25"/><circle cx="399.4" cy="70.6" r="3.9" fill="none" stroke="#f07000" stroke-width="1.15"/><line x1="396.9" y1="70.6" x2="401.9" y2="70.6" stroke="#f07000" stroke-width="1.25"/><line x1="399.4" y1="68.1" x2="399.4" y2="73.1" stroke="#f07000" stroke-width="1.25"/><circle cx="372.3" cy="84.5" r="3.9" fill="none" stroke="#f8c800" stroke-width="1.15"/><line x1="369.8" y1="84.5" x2="374.8" y2="84.5" stroke="#f8c800" stroke-width="1.25"/><line x1="379.1" y1="79.6" x2="385.9" y2="79.6" stroke="#f8c800" stroke-width="1.2"/><line x1="380.0" y1="81.4" x2="386.8" y2="81.4" stroke="#f8c800" stroke-width="1.2"/><line x1="393.0" y1="81.4" x2="399.8" y2="81.4" stroke="#f8c800" stroke-width="1.2"/><line x1="396.4" y1="78.0" x2="396.4" y2="84.8" stroke="#f8c800" stroke-width="1.2"/><line x1="396.6" y1="81.4" x2="403.4" y2="81.4" stroke="#f8c800" stroke-width="1.2"/><circle cx="406.5" cy="82.3" r="3.9" fill="none" stroke="#f8b000" stroke-width="1.15"/><line x1="404.0" y1="82.3" x2="409.0" y2="82.3" stroke="#f8b000" stroke-width="1.25"/><circle cx="391.4" cy="85.7" r="3.9" fill="none" stroke="#f8b000" stroke-width="1.15"/><line x1="388.9" y1="85.7" x2="393.9" y2="85.7" stroke="#f8b000" stroke-width="1.25"/><circle cx="390.8" cy="90.0" r="3.9" fill="none" stroke="#f8c800" stroke-width="1.15"/><line x1="388.3" y1="90.0" x2="393.3" y2="90.0" stroke="#f8c800" stroke-width="1.25"/><line x1="390.8" y1="87.5" x2="390.8" y2="92.5" stroke="#f8c800" stroke-width="1.25"/><circle cx="385.3" cy="92.5" r="3.9" fill="none" stroke="#f8b000" stroke-width="1.15"/><line x1="382.8" y1="92.5" x2="387.8" y2="92.5" stroke="#f8b000" stroke-width="1.25"/><line x1="385.3" y1="90.0" x2="385.3" y2="95.0" stroke="#f8b000" stroke-width="1.25"/><circle cx="409.3" cy="94.4" r="3.9" fill="none" stroke="#ffff00" stroke-width="1.15"/><line x1="406.8" y1="94.4" x2="411.8" y2="94.4" stroke="#ffff00" stroke-width="1.25"/><line x1="409.3" y1="91.9" x2="409.3" y2="96.9" stroke="#ffff00" stroke-width="1.25"/><circle cx="397.0" cy="98.5" r="3.9" fill="none" stroke="#f07000" stroke-width="1.15"/><line x1="394.5" y1="98.5" x2="399.5" y2="98.5" stroke="#f07000" stroke-width="1.25"/><line x1="390.9" y1="97.6" x2="397.7" y2="97.6" stroke="#f07000" stroke-width="1.2"/><line x1="394.3" y1="94.2" x2="394.3" y2="101.0" stroke="#f07000" stroke-width="1.2"/><line x1="396.2" y1="94.5" x2="403.0" y2="94.5" stroke="#f8b000" stroke-width="1.2"/><circle cx="407.5" cy="99.0" r="3.9" fill="none" stroke="#f8b000" stroke-width="1.15"/><line x1="405.0" y1="99.0" x2="410.0" y2="99.0" stroke="#f8b000" stroke-width="1.25"/><line x1="407.5" y1="96.5" x2="407.5" y2="101.5" stroke="#f8b000" stroke-width="1.25"/><circle cx="406.6" cy="101.1" r="3.9" fill="none" stroke="#f8b000" stroke-width="1.15"/><line x1="404.1" y1="101.1" x2="409.1" y2="101.1" stroke="#f8b000" stroke-width="1.25"/><line x1="388.3" y1="102.4" x2="395.1" y2="102.4" stroke="#f8b000" stroke-width="1.2"/><circle cx="385.3" cy="109.6" r="3.9" fill="none" stroke="#f8c800" stroke-width="1.15"/><line x1="382.8" y1="109.6" x2="387.8" y2="109.6" stroke="#f8c800" stroke-width="1.25"/><line x1="385.3" y1="107.1" x2="385.3" y2="112.1" stroke="#f8c800" stroke-width="1.25"/><line x1="388.7" y1="111.3" x2="395.5" y2="111.3" stroke="#f8b000" stroke-width="1.2"/><circle cx="399.6" cy="110.6" r="3.9" fill="none" stroke="#f8b000" stroke-width="1.15"/><line x1="397.1" y1="110.6" x2="402.1" y2="110.6" stroke="#f8b000" stroke-width="1.25"/><circle cx="403.6" cy="114.3" r="3.9" fill="none" stroke="#f8b000" stroke-width="1.15"/><line x1="401.1" y1="114.3" x2="406.1" y2="114.3" stroke="#f8b000" stroke-width="1.25"/><line x1="403.6" y1="111.8" x2="403.6" y2="116.8" stroke="#f8b000" stroke-width="1.25"/><circle cx="410.4" cy="110.2" r="3.9" fill="none" stroke="#f8b000" stroke-width="1.15"/><line x1="407.9" y1="110.2" x2="412.9" y2="110.2" stroke="#f8b000" stroke-width="1.25"/><line x1="410.4" y1="107.7" x2="410.4" y2="112.7" stroke="#f8b000" stroke-width="1.25"/><line x1="413.8" y1="113.3" x2="420.6" y2="113.3" stroke="#f8b000" stroke-width="1.2"/><circle cx="421.1" cy="91.0" r="3.9" fill="none" stroke="#f07000" stroke-width="1.15"/><line x1="418.6" y1="91.0" x2="423.6" y2="91.0" stroke="#f07000" stroke-width="1.25"/><line x1="421.1" y1="88.5" x2="421.1" y2="93.5" stroke="#f07000" stroke-width="1.25"/><circle cx="420.7" cy="81.8" r="3.9" fill="none" stroke="#f07000" stroke-width="1.15"/><line x1="418.2" y1="81.8" x2="423.2" y2="81.8" stroke="#f07000" stroke-width="1.25"/><circle cx="438.7" cy="82.6" r="3.9" fill="none" stroke="#f8b000" stroke-width="1.15"/><line x1="436.2" y1="82.6" x2="441.2" y2="82.6" stroke="#f8b000" stroke-width="1.25"/><line x1="438.7" y1="80.1" x2="438.7" y2="85.1" stroke="#f8b000" stroke-width="1.25"/><circle cx="446.2" cy="91.4" r="3.9" fill="none" stroke="#f8b000" stroke-width="1.15"/><line x1="443.7" y1="91.4" x2="448.7" y2="91.4" stroke="#f8b000" stroke-width="1.25"/><line x1="446.2" y1="88.9" x2="446.2" y2="93.9" stroke="#f8b000" stroke-width="1.25"/><circle cx="455.0" cy="88.3" r="3.9" fill="none" stroke="#ffff00" stroke-width="1.15"/><line x1="452.5" y1="88.3" x2="457.5" y2="88.3" stroke="#ffff00" stroke-width="1.25"/><line x1="455.0" y1="85.8" x2="455.0" y2="90.8" stroke="#ffff00" stroke-width="1.25"/><circle cx="459.4" cy="91.0" r="3.9" fill="none" stroke="#ffff00" stroke-width="1.15"/><line x1="456.9" y1="91.0" x2="461.9" y2="91.0" stroke="#ffff00" stroke-width="1.25"/><line x1="459.4" y1="88.5" x2="459.4" y2="93.5" stroke="#ffff00" stroke-width="1.25"/><circle cx="463.8" cy="92.7" r="3.9" fill="none" stroke="#ffff00" stroke-width="1.15"/><line x1="461.3" y1="92.7" x2="466.3" y2="92.7" stroke="#ffff00" stroke-width="1.25"/><line x1="463.8" y1="90.2" x2="463.8" y2="95.2" stroke="#ffff00" stroke-width="1.25"/><line x1="432.2" y1="92.3" x2="439.0" y2="92.3" stroke="#f8b000" stroke-width="1.2"/><line x1="417.8" y1="99.4" x2="424.6" y2="99.4" stroke="#f8b000" stroke-width="1.2"/><line x1="421.2" y1="96.0" x2="421.2" y2="102.8" stroke="#f8b000" stroke-width="1.2"/><line x1="422.6" y1="97.1" x2="429.4" y2="97.1" stroke="#f8b000" stroke-width="1.2"/><line x1="426.0" y1="93.7" x2="426.0" y2="100.5" stroke="#f8b000" stroke-width="1.2"/><circle cx="421.2" cy="107.2" r="3.9" fill="none" stroke="#f8b000" stroke-width="1.15"/><line x1="418.7" y1="107.2" x2="423.7" y2="107.2" stroke="#f8b000" stroke-width="1.25"/><line x1="421.2" y1="104.7" x2="421.2" y2="109.7" stroke="#f8b000" stroke-width="1.25"/><circle cx="431.2" cy="102.4" r="3.9" fill="none" stroke="#f09000" stroke-width="1.15"/><line x1="428.7" y1="102.4" x2="433.7" y2="102.4" stroke="#f09000" stroke-width="1.25"/><circle cx="448.8" cy="100.2" r="3.9" fill="none" stroke="#f09000" stroke-width="1.15"/><line x1="446.3" y1="100.2" x2="451.3" y2="100.2" stroke="#f09000" stroke-width="1.25"/><line x1="448.8" y1="97.7" x2="448.8" y2="102.7" stroke="#f09000" stroke-width="1.25"/><line x1="434.9" y1="109.0" x2="441.7" y2="109.0" stroke="#e85a00" stroke-width="1.2"/><line x1="438.3" y1="105.6" x2="438.3" y2="112.4" stroke="#e85a00" stroke-width="1.2"/><line x1="439.3" y1="107.2" x2="446.1" y2="107.2" stroke="#e85a00" stroke-width="1.2"/><line x1="442.7" y1="103.8" x2="442.7" y2="110.6" stroke="#e85a00" stroke-width="1.2"/><circle cx="441.0" cy="110.0" r="3.9" fill="none" stroke="#e85a00" stroke-width="1.15"/><line x1="438.5" y1="110.0" x2="443.5" y2="110.0" stroke="#e85a00" stroke-width="1.25"/><line x1="441.0" y1="107.5" x2="441.0" y2="112.5" stroke="#e85a00" stroke-width="1.25"/><circle cx="449.7" cy="113.0" r="3.9" fill="none" stroke="#f09000" stroke-width="1.15"/><line x1="447.2" y1="113.0" x2="452.2" y2="113.0" stroke="#f09000" stroke-width="1.25"/><line x1="423.9" y1="114.0" x2="430.7" y2="114.0" stroke="#f8b000" stroke-width="1.2"/><line x1="427.3" y1="110.6" x2="427.3" y2="117.4" stroke="#f8b000" stroke-width="1.2"/><circle cx="432.7" cy="114.3" r="3.9" fill="none" stroke="#f8b000" stroke-width="1.15"/><line x1="430.2" y1="114.3" x2="435.2" y2="114.3" stroke="#f8b000" stroke-width="1.25"/><line x1="419.9" y1="115.3" x2="426.7" y2="115.3" stroke="#f8b000" stroke-width="1.2"/><line x1="423.9" y1="118.4" x2="430.7" y2="118.4" stroke="#f8b000" stroke-width="1.2"/><line x1="419.2" y1="122.4" x2="426.0" y2="122.4" stroke="#f8b000" stroke-width="1.2"/><circle cx="435.5" cy="124.1" r="3.9" fill="none" stroke="#f07000" stroke-width="1.15"/><line x1="433.0" y1="124.1" x2="438.0" y2="124.1" stroke="#f07000" stroke-width="1.25"/><circle cx="455.8" cy="123.5" r="3.9" fill="none" stroke="#f8b000" stroke-width="1.15"/><line x1="453.3" y1="123.5" x2="458.3" y2="123.5" stroke="#f8b000" stroke-width="1.25"/><line x1="455.8" y1="121.0" x2="455.8" y2="126.0" stroke="#f8b000" stroke-width="1.25"/><circle cx="449.3" cy="126.6" r="3.9" fill="none" stroke="#ffff00" stroke-width="1.15"/><line x1="446.8" y1="126.6" x2="451.8" y2="126.6" stroke="#ffff00" stroke-width="1.25"/><line x1="449.3" y1="124.1" x2="449.3" y2="129.1" stroke="#ffff00" stroke-width="1.25"/><line x1="444.5" y1="118.7" x2="451.3" y2="118.7" stroke="#f8c800" stroke-width="1.2"/><line x1="444.8" y1="107.3" x2="451.6" y2="107.3" stroke="#f8c800" stroke-width="1.2"/><line x1="406.0" y1="130.2" x2="412.8" y2="130.2" stroke="#f8b000" stroke-width="1.2"/><line x1="409.4" y1="126.8" x2="409.4" y2="133.6" stroke="#f8b000" stroke-width="1.2"/><line x1="452.0" y1="136.2" x2="458.8" y2="136.2" stroke="#f8c800" stroke-width="1.2"/><line x1="455.4" y1="132.8" x2="455.4" y2="139.6" stroke="#f8c800" stroke-width="1.2"/><line x1="423.9" y1="136.3" x2="430.7" y2="136.3" stroke="#ffff00" stroke-width="1.2"/><line x1="427.3" y1="132.9" x2="427.3" y2="139.7" stroke="#ffff00" stroke-width="1.2"/><circle cx="432.7" cy="138.4" r="3.9" fill="none" stroke="#ffff00" stroke-width="1.15"/><line x1="430.2" y1="138.4" x2="435.2" y2="138.4" stroke="#ffff00" stroke-width="1.25"/><line x1="436.6" y1="139.3" x2="443.4" y2="139.3" stroke="#f8c800" stroke-width="1.2"/><line x1="390.1" y1="144.5" x2="396.9" y2="144.5" stroke="#f8c800" stroke-width="1.2"/><line x1="393.5" y1="141.1" x2="393.5" y2="147.9" stroke="#f8c800" stroke-width="1.2"/><line x1="500.3" y1="108.5" x2="507.1" y2="108.5" stroke="#f8c800" stroke-width="1.2"/><line x1="503.7" y1="105.1" x2="503.7" y2="111.9" stroke="#f8c800" stroke-width="1.2"/><line x1="491.0" y1="115.5" x2="497.8" y2="115.5" stroke="#ffff00" stroke-width="1.2"/><line x1="494.4" y1="112.1" x2="494.4" y2="118.9" stroke="#ffff00" stroke-width="1.2"/><line x1="484.0" y1="118.4" x2="490.8" y2="118.4" stroke="#f8b000" stroke-width="1.2"/><line x1="487.4" y1="115.0" x2="487.4" y2="121.8" stroke="#f8b000" stroke-width="1.2"/><circle cx="500.2" cy="124.2" r="3.9" fill="none" stroke="#f8b000" stroke-width="1.15"/><line x1="497.7" y1="124.2" x2="502.7" y2="124.2" stroke="#f8b000" stroke-width="1.25"/><line x1="474.0" y1="130.1" x2="480.8" y2="130.1" stroke="#f8b000" stroke-width="1.2"/><line x1="482.8" y1="135.9" x2="489.6" y2="135.9" stroke="#f8b000" stroke-width="1.2"/><line x1="486.2" y1="132.5" x2="486.2" y2="139.3" stroke="#f8b000" stroke-width="1.2"/><line x1="451.8" y1="136.5" x2="458.6" y2="136.5" stroke="#f8b000" stroke-width="1.2"/><line x1="455.2" y1="133.1" x2="455.2" y2="139.9" stroke="#f8b000" stroke-width="1.2"/><line x1="475.8" y1="149.4" x2="482.6" y2="149.4" stroke="#ffff00" stroke-width="1.2"/><line x1="479.2" y1="146.0" x2="479.2" y2="152.8" stroke="#ffff00" stroke-width="1.2"/><line x1="478.1" y1="160.5" x2="484.9" y2="160.5" stroke="#f8c800" stroke-width="1.2"/><line x1="481.5" y1="157.1" x2="481.5" y2="163.9" stroke="#f8c800" stroke-width="1.2"/><line x1="475.8" y1="177.5" x2="482.6" y2="177.5" stroke="#ffff00" stroke-width="1.2"/><line x1="479.2" y1="174.1" x2="479.2" y2="180.9" stroke="#ffff00" stroke-width="1.2"/><circle cx="556.3" cy="10.2" r="3.9" fill="none" stroke="#e85a00" stroke-width="1.15"/><line x1="553.8" y1="10.2" x2="558.8" y2="10.2" stroke="#e85a00" stroke-width="1.25"/><line x1="562.8" y1="15.2" x2="569.6" y2="15.2" stroke="#f8c800" stroke-width="1.2"/><line x1="566.2" y1="11.8" x2="566.2" y2="18.6" stroke="#f8c800" stroke-width="1.2"/><circle cx="520.1" cy="17.2" r="3.9" fill="none" stroke="#f8b000" stroke-width="1.15"/><line x1="517.6" y1="17.2" x2="522.6" y2="17.2" stroke="#f8b000" stroke-width="1.25"/><circle cx="593.2" cy="24.5" r="3.9" fill="none" stroke="#ffff00" stroke-width="1.15"/><line x1="590.7" y1="24.5" x2="595.7" y2="24.5" stroke="#ffff00" stroke-width="1.25"/><circle cx="529.3" cy="31.4" r="3.9" fill="none" stroke="#ffff00" stroke-width="1.15"/><line x1="526.8" y1="31.4" x2="531.8" y2="31.4" stroke="#ffff00" stroke-width="1.25"/><circle cx="520.1" cy="44.2" r="3.9" fill="none" stroke="#f8c800" stroke-width="1.15"/><line x1="517.6" y1="44.2" x2="522.6" y2="44.2" stroke="#f8c800" stroke-width="1.25"/><line x1="520.1" y1="41.7" x2="520.1" y2="46.7" stroke="#f8c800" stroke-width="1.25"/><line x1="496.9" y1="47.5" x2="503.7" y2="47.5" stroke="#00e8e8" stroke-width="1.2"/><line x1="500.3" y1="44.1" x2="500.3" y2="50.9" stroke="#00e8e8" stroke-width="1.2"/><line x1="502.8" y1="49.5" x2="509.6" y2="49.5" stroke="#ffff00" stroke-width="1.2"/><line x1="506.2" y1="46.1" x2="506.2" y2="52.9" stroke="#ffff00" stroke-width="1.2"/><line x1="512.1" y1="57.4" x2="518.9" y2="57.4" stroke="#ffff00" stroke-width="1.2"/><line x1="515.5" y1="54.0" x2="515.5" y2="60.8" stroke="#ffff00" stroke-width="1.2"/><circle cx="532.6" cy="54.5" r="3.9" fill="none" stroke="#00e8e8" stroke-width="1.15"/><line x1="530.1" y1="54.5" x2="535.1" y2="54.5" stroke="#00e8e8" stroke-width="1.25"/><circle cx="533.9" cy="64.7" r="3.9" fill="none" stroke="#f8b000" stroke-width="1.15"/><line x1="531.4" y1="64.7" x2="536.4" y2="64.7" stroke="#f8b000" stroke-width="1.25"/><line x1="533.9" y1="62.2" x2="533.9" y2="67.2" stroke="#f8b000" stroke-width="1.25"/><circle cx="533.3" cy="68.0" r="3.9" fill="none" stroke="#f8b000" stroke-width="1.15"/><line x1="530.8" y1="68.0" x2="535.8" y2="68.0" stroke="#f8b000" stroke-width="1.25"/><circle cx="529.3" cy="95.4" r="3.9" fill="none" stroke="#ffff00" stroke-width="1.15"/><line x1="526.8" y1="95.4" x2="531.8" y2="95.4" stroke="#ffff00" stroke-width="1.25"/><line x1="529.3" y1="92.9" x2="529.3" y2="97.9" stroke="#ffff00" stroke-width="1.25"/><line x1="167.0" y1="38.5" x2="173.8" y2="38.5" stroke="#f8b000" stroke-width="1.2"/><line x1="228.6" y1="28.5" x2="235.4" y2="28.5" stroke="#f09000" stroke-width="1.2"/><line x1="234.2" y1="58.4" x2="241.0" y2="58.4" stroke="#f8c800" stroke-width="1.2"/><line x1="441.1" y1="466.0" x2="447.9" y2="466.0" stroke="#f8c800" stroke-width="1.2"/><line x1="702.8" y1="123.6" x2="709.6" y2="123.6" stroke="#f8c800" stroke-width="1.2"/><circle cx="756.1" cy="97.3" r="3.9" fill="none" stroke="#ffff00" stroke-width="1.15"/><line x1="753.6" y1="97.3" x2="758.6" y2="97.3" stroke="#ffff00" stroke-width="1.25"/><line x1="368" y1="142.8" x2="412.8" y2="98" stroke="#e0e0e0" stroke-width="1"/><text x="357.7" y="155" font-size="10" fill="#f0f0f0" textLength="38.4" lengthAdjust="spacingAndGlyphs">R-2588</text><line x1="397.9" y1="151.5" x2="403.6" y2="151.5" stroke="#ff2020" stroke-width="1.2"/><line x1="400.7" y1="148.6" x2="400.7" y2="154.4" stroke="#ff2020" stroke-width="1.2"/><text x="404" y="155" font-size="10" fill="#f0f0f0" textLength="6.6" lengthAdjust="spacingAndGlyphs">2</text><line x1="411.5" y1="151.5" x2="416.8" y2="151.5" stroke="#ffff00" stroke-width="1.2"/></g></g><rect x="9.5" y="759.5" width="242.5" height="43.0" fill="#000" stroke="#a0a0a0" stroke-width="1.2"/><text x="13.1" y="771.0" font-size="10" fill="#d8d8d8" textLength="35.5" lengthAdjust="spacingAndGlyphs">Symbols</text><text x="52.7" y="771.0" font-size="10" fill="#d8d8d8" textLength="17.5" lengthAdjust="spacingAndGlyphs">-CG</text><text x="78.0" y="771.0" font-size="10" fill="#d8d8d8" textLength="14.3" lengthAdjust="spacingAndGlyphs">-IC</text><text x="98.9" y="771.0" font-size="10" fill="#d8d8d8" textLength="20.2" lengthAdjust="spacingAndGlyphs">+CG</text><text x="123.8" y="771.0" font-size="10" fill="#d8d8d8" textLength="17.6" lengthAdjust="spacingAndGlyphs">+IC</text><text x="153.2" y="770.8" font-size="10" fill="#d8d8d8" textLength="89.8" lengthAdjust="spacingAndGlyphs">Strike age color codes</text><text x="13.1" y="783.9" font-size="10" fill="#d8d8d8" textLength="28.0" lengthAdjust="spacingAndGlyphs">Recent</text><text x="13.6" y="796.8" font-size="10" fill="#d8d8d8" textLength="14.5" lengthAdjust="spacingAndGlyphs">Old</text><circle cx="60.4" cy="780.6" r="4.2" fill="none" stroke="#00e8e8" stroke-width="1.1"/><line x1="58" y1="780.6" x2="62.8" y2="780.6" stroke="#00e8e8" stroke-width="1.1"/><line x1="82.3" y1="780.6" x2="89" y2="780.6" stroke="#00e8e8" stroke-width="1.2"/><circle cx="110.3" cy="780.6" r="4.2" fill="none" stroke="#00e8e8" stroke-width="1.1"/><line x1="107.6" y1="780.6" x2="113" y2="780.6" stroke="#00e8e8" stroke-width="1.1"/><line x1="110.3" y1="777.9" x2="110.3" y2="783.3000000000001" stroke="#00e8e8" stroke-width="1.1"/><line x1="132" y1="780.6" x2="138.8" y2="780.6" stroke="#00e8e8" stroke-width="1.2"/><line x1="135.4" y1="777.2" x2="135.4" y2="784.0" stroke="#00e8e8" stroke-width="1.2"/><circle cx="60.4" cy="793.5" r="4.2" fill="none" stroke="#ffff00" stroke-width="1.1"/><line x1="58" y1="793.5" x2="62.8" y2="793.5" stroke="#ffff00" stroke-width="1.1"/><line x1="82.3" y1="793.5" x2="89" y2="793.5" stroke="#ffff00" stroke-width="1.2"/><circle cx="110.3" cy="793.5" r="4.2" fill="none" stroke="#ffff00" stroke-width="1.1"/><line x1="107.6" y1="793.5" x2="113" y2="793.5" stroke="#ffff00" stroke-width="1.1"/><line x1="110.3" y1="790.8" x2="110.3" y2="796.2" stroke="#ffff00" stroke-width="1.1"/><line x1="132" y1="793.5" x2="138.8" y2="793.5" stroke="#ffff00" stroke-width="1.2"/><line x1="135.4" y1="790.1" x2="135.4" y2="796.9" stroke="#ffff00" stroke-width="1.2"/><text x="153.7" y="783.5" font-size="10" fill="#e8e800" textLength="16.0" lengthAdjust="spacingAndGlyphs">15+</text><text x="188.5" y="783.5" font-size="10" fill="#f0c000" textLength="16.0" lengthAdjust="spacingAndGlyphs">30+</text><text x="223.3" y="783.5" font-size="10" fill="#f0a000" textLength="16.0" lengthAdjust="spacingAndGlyphs">45+</text><text x="153.7" y="796.1" font-size="10" fill="#f08800" textLength="16.0" lengthAdjust="spacingAndGlyphs">60+</text><text x="188.5" y="796.1" font-size="10" fill="#f06000" textLength="16.0" lengthAdjust="spacingAndGlyphs">75+</text><text x="223.3" y="796.1" font-size="10" fill="#f03800" textLength="16.0" lengthAdjust="spacingAndGlyphs">90+</text><rect x="685" y="792" width="121" height="14" fill="#000"/><text x="689.1" y="802.1" font-size="10.3" fill="#f0f0f0" textLength="113.0" lengthAdjust="spacingAndGlyphs">©2005 Astrogenic Systems</text><rect x="812.5" y="8.5" width="319" height="319" rx="4" ry="4" fill="#000" stroke="#c8c8c8" stroke-width="1.2"/><rect x="812.5" y="333.5" width="319" height="114" rx="4" ry="4" fill="#000" stroke="#c8c8c8" stroke-width="1.2"/><rect x="812.5" y="453.5" width="319" height="349" rx="4" ry="4" fill="#000" stroke="#c8c8c8" stroke-width="1.2"/><rect x="819" y="16" width="58" height="18" fill="#5c0000"/><line x1="819" y1="16.5" x2="877" y2="16.5" stroke="#f0f0f0" stroke-width="1"/><line x1="819.5" y1="16" x2="819.5" y2="34" stroke="#f0f0f0" stroke-width="1"/><line x1="819" y1="33.5" x2="877" y2="33.5" stroke="#909090" stroke-width="1"/><line x1="876.5" y1="16" x2="876.5" y2="34" stroke="#909090" stroke-width="1"/><text x="824.3" y="29.7" font-size="12.2" fill="#e8dcdc" font-weight="bold" textLength="48.5" lengthAdjust="spacingAndGlyphs">STRIKE</text><rect x="883" y="16" width="58" height="18" fill="#404040"/><line x1="883" y1="16.5" x2="941" y2="16.5" stroke="#f0f0f0" stroke-width="1"/><line x1="883.5" y1="16" x2="883.5" y2="34" stroke="#f0f0f0" stroke-width="1"/><line x1="883" y1="33.5" x2="941" y2="33.5" stroke="#909090" stroke-width="1"/><line x1="940.5" y1="16" x2="940.5" y2="34" stroke="#909090" stroke-width="1"/><text x="890.7" y="29.7" font-size="12.2" fill="#c8c8c8" font-weight="bold" textLength="42.8" lengthAdjust="spacingAndGlyphs">NOISE</text><rect x="994" y="16" width="128" height="18" fill="#333333"/><line x1="994" y1="16.5" x2="1122" y2="16.5" stroke="#f0f0f0" stroke-width="1"/><line x1="994.5" y1="16" x2="994.5" y2="34" stroke="#f0f0f0" stroke-width="1"/><line x1="994" y1="33.5" x2="1122" y2="33.5" stroke="#909090" stroke-width="1"/><line x1="1121.5" y1="16" x2="1121.5" y2="34" stroke="#909090" stroke-width="1"/><text x="998.6" y="29.7" font-size="12.2" fill="#ffffff" font-weight="bold" textLength="52.5" lengthAdjust="spacingAndGlyphs">Bng 19°</text><text x="1076.0" y="29.7" font-size="12.2" fill="#00ff00" font-weight="bold" textLength="41.5" lengthAdjust="spacingAndGlyphs">291mi</text><rect x="821.5" y="64.5" width="81.0" height="15.0" fill="#5a5a5a" stroke="#d0d0d0" stroke-width="1"/><text x="829.0" y="76.2" font-size="11.8" fill="#f0f0f0" textLength="66.5" lengthAdjust="spacingAndGlyphs">Strikes/min</text><rect x="931.5" y="64.5" width="81.0" height="15.0" fill="#5a5a5a" stroke="#d0d0d0" stroke-width="1"/><text x="943.3" y="76.2" font-size="11.8" fill="#f0f0f0" textLength="57.5" lengthAdjust="spacingAndGlyphs">Close/min</text><rect x="1041.5" y="64.5" width="81.0" height="15.0" fill="#5a5a5a" stroke="#d0d0d0" stroke-width="1"/><text x="1050.5" y="76.2" font-size="11.8" fill="#f0f0f0" textLength="63.0" lengthAdjust="spacingAndGlyphs">Noises/min</text><text x="885.0" y="111.8" font-size="29" fill="#ffffff" font-weight="bold" textLength="17.6" lengthAdjust="spacingAndGlyphs">2</text><text x="994.0" y="111.8" font-size="29" fill="#ffffff" font-weight="bold" textLength="18.2" lengthAdjust="spacingAndGlyphs">0</text><text x="1104.4" y="111.8" font-size="29" fill="#c8c8c8" font-weight="bold" textLength="17.8" lengthAdjust="spacingAndGlyphs">0</text><text x="826.4" y="142.6" font-size="12.3" fill="#f0f0f0" textLength="76.2" lengthAdjust="spacingAndGlyphs">Total Strikes</text><text x="945.0" y="142.6" font-size="12.3" fill="#f0f0f0" textLength="67.5" lengthAdjust="spacingAndGlyphs">Total Close</text><text x="1047.8" y="142.6" font-size="12.3" fill="#d8d8d8" textLength="74.8" lengthAdjust="spacingAndGlyphs">Total Noises</text><text x="902.8" y="161.0" font-size="12.3" fill="#f0f0f0" text-anchor="end" textLength="30.5" lengthAdjust="spacingAndGlyphs">7900</text><text x="1012.7" y="161.0" font-size="12.3" fill="#f0f0f0" text-anchor="end">0</text><text x="1122.8" y="161.0" font-size="12.3" fill="#f0f0f0" text-anchor="end" textLength="22.5" lengthAdjust="spacingAndGlyphs">426</text><text x="821.3" y="214.9" font-size="12.6" fill="#c4c4c4" textLength="164.5" lengthAdjust="spacingAndGlyphs">Lightning type distribution</text><line x1="821" y1="217.5" x2="1124" y2="217.5" stroke="#8c8c8c" stroke-width="1"/><text x="821.3" y="236.7" font-size="12.4" fill="#ffffff" font-weight="bold" textLength="84.0" lengthAdjust="spacingAndGlyphs">Cloud-ground</text><text x="912.5" y="236.7" font-size="12.4" fill="#d0d0d0" font-weight="bold">+</text><rect x="925.5" y="227.5" width="50.0" height="10.0" fill="#000" stroke="#a8a8a8" stroke-width="1"/><rect x="926" y="228" width="17" height="9" fill="#ff0000"/><text x="979.1" y="236.7" font-size="12.4" fill="#ffffff" font-weight="bold" textLength="29.8" lengthAdjust="spacingAndGlyphs">34%</text><rect x="1016.4" y="231" width="6.0" height="2" fill="#c8c8c8"/><rect x="1028.5" y="227.5" width="50.0" height="10.0" fill="#000" stroke="#a8a8a8" stroke-width="1"/><rect x="1029" y="228" width="8" height="9" fill="#88ccff"/><text x="1082.5" y="236.7" font-size="12.4" fill="#ffffff" font-weight="bold" textLength="29.0" lengthAdjust="spacingAndGlyphs">17%</text><text x="821.3" y="260.6" font-size="12.4" fill="#c0c0c0" font-weight="bold" textLength="37.8" lengthAdjust="spacingAndGlyphs">Count</text><text x="926.0" y="260.6" font-size="12.4" fill="#ffffff" font-weight="bold" textLength="30.5" lengthAdjust="spacingAndGlyphs">2708</text><text x="1028.8" y="260.6" font-size="12.4" fill="#ffffff" font-weight="bold" textLength="31.4" lengthAdjust="spacingAndGlyphs">1318</text><text x="821.3" y="290.7" font-size="12.4" fill="#ffffff" font-weight="bold" textLength="63.5" lengthAdjust="spacingAndGlyphs">Intracloud</text><text x="912.5" y="290.7" font-size="12.4" fill="#d0d0d0" font-weight="bold">+</text><rect x="925.5" y="281.5" width="50.0" height="10.0" fill="#000" stroke="#a8a8a8" stroke-width="1"/><rect x="926" y="282" width="8.5" height="9" fill="#ee66aa"/><text x="979.1" y="290.7" font-size="12.4" fill="#ffffff" font-weight="bold" textLength="29.8" lengthAdjust="spacingAndGlyphs">16%</text><rect x="1016.4" y="285" width="6.0" height="2" fill="#c8c8c8"/><rect x="1028.5" y="281.5" width="50.0" height="10.0" fill="#000" stroke="#a8a8a8" stroke-width="1"/><rect x="1029" y="282" width="16" height="9" fill="#00ff00"/><text x="1082.5" y="290.7" font-size="12.4" fill="#ffffff" font-weight="bold" textLength="29.0" lengthAdjust="spacingAndGlyphs">33%</text><text x="821.3" y="314.6" font-size="12.4" fill="#c0c0c0" font-weight="bold" textLength="37.8" lengthAdjust="spacingAndGlyphs">Count</text><text x="926.0" y="314.6" font-size="12.4" fill="#ffffff" font-weight="bold" textLength="30.5" lengthAdjust="spacingAndGlyphs">1232</text><text x="1028.8" y="314.6" font-size="12.4" fill="#ffffff" font-weight="bold" textLength="31.4" lengthAdjust="spacingAndGlyphs">2642</text><text x="822.4" y="352.3" font-size="16.5" fill="#00ff00" font-weight="bold" textLength="223.0" lengthAdjust="spacingAndGlyphs">10/25/2025 12:49:16 PM</text><line x1="821" y1="358.5" x2="1122.5" y2="358.5" stroke="#9a9a9a" stroke-width="1"/><text x="821.3" y="387.6" font-size="12.2" fill="#f4f4f4" textLength="48.6" lengthAdjust="spacingAndGlyphs">Squelch</text><text x="909.5" y="387.6" font-size="12.2" fill="#f4f4f4" textLength="7.5" lengthAdjust="spacingAndGlyphs">0</text><text x="981.2" y="387.6" font-size="12.2" fill="#f4f4f4" textLength="44.2" lengthAdjust="spacingAndGlyphs">Upload</text><text x="1061.4" y="387.6" font-size="12.2" fill="#c8c8c8" textLength="53.9" lengthAdjust="spacingAndGlyphs">Disabled</text><text x="821.3" y="407.6" font-size="12.2" fill="#f4f4f4" textLength="73.2" lengthAdjust="spacingAndGlyphs">Persistence</text><text x="909.5" y="407.6" font-size="12.2" fill="#f4f4f4" textLength="42.0" lengthAdjust="spacingAndGlyphs">90 min</text><text x="981.2" y="407.6" font-size="12.2" fill="#f4f4f4" textLength="51.5" lengthAdjust="spacingAndGlyphs">Capture</text><text x="1061.4" y="407.6" font-size="12.2" fill="#00ee00" textLength="36.6" lengthAdjust="spacingAndGlyphs">Active</text><text x="821.3" y="427.6" font-size="12.2" fill="#f4f4f4" textLength="40.2" lengthAdjust="spacingAndGlyphs">Range</text><text x="909.5" y="427.6" font-size="12.2" fill="#f4f4f4" textLength="42.0" lengthAdjust="spacingAndGlyphs">313 mi</text><text x="981.2" y="427.6" font-size="12.2" fill="#f4f4f4" textLength="53.6" lengthAdjust="spacingAndGlyphs">Receiver</text><text x="1061.4" y="427.6" font-size="12.2" fill="#00ee00" textLength="50.7" lengthAdjust="spacingAndGlyphs">Enabled</text><text x="821.3" y="474.9" font-size="12.2" fill="#c8c8c8" textLength="44.4" lengthAdjust="spacingAndGlyphs">Uptime</text><text x="909.5" y="474.9" font-size="12.2" fill="#f4f4f4" textLength="44.8" lengthAdjust="spacingAndGlyphs">200:19</text><text x="981.2" y="474.9" font-size="12.2" fill="#c8c8c8" textLength="62.4" lengthAdjust="spacingAndGlyphs">Peak time</text><text x="1061.4" y="474.9" font-size="12.2" fill="#c8c8c8" textLength="24.4" lengthAdjust="spacingAndGlyphs">Plot</text><text x="821.3" y="497.6" font-size="12.2" fill="#c8c8c8" textLength="60.8" lengthAdjust="spacingAndGlyphs">Peak rate</text><text x="909.5" y="497.6" font-size="12.2" fill="#f4f4f4" textLength="43.0" lengthAdjust="spacingAndGlyphs">43/min</text><text x="981.2" y="497.6" font-size="12.2" fill="#f4f4f4" textLength="51.2" lengthAdjust="spacingAndGlyphs">4:22 AM</text><text x="1061.4" y="497.6" font-size="12.2" fill="#f4f4f4" textLength="35.9" lengthAdjust="spacingAndGlyphs">Strike</text><text x="822.7" y="527.6" font-size="12.2" fill="#c8c8c8" textLength="76.8" lengthAdjust="spacingAndGlyphs">Trend graph</text><text x="908.5" y="527.6" font-size="12.2" fill="#f4f4f4" textLength="42.0" lengthAdjust="spacingAndGlyphs">60 min</text><polyline points="822.4,777.3 826.3,777.3 829.5,769.5 833.9,777.3 838.0,777.3 840.7,777.3 845.5,769.5 849.0,777.3 853.3,777.3 857.6,777.3 861.6,777.3 866.3,777.3 868.9,761.6 871.4,769.5 875.6,769.5 879.9,777.3 883.0,777.3 887.8,777.3 890.9,777.3 895.1,777.3 900.0,777.3 903.5,761.6 908.3,777.3 911.3,769.5 914.1,777.3 918.8,761.6 923.7,777.3 927.4,777.3 930.7,761.6 935.6,769.5 940.3,761.6 943.7,777.3 947.4,769.5 951.0,777.3 954.4,777.3 957.1,777.3 959.9,777.3 963.7,777.3 967.1,777.3 970.8,769.5 975.0,761.6 979.0,769.5 983.1,777.3 986.9,777.3 991.3,769.5 996.1,761.6 999.2,761.6 1002.6,761.6 1005.9,769.5 1010.1,761.6 1015.0,777.3 1018.4,777.3 1023.0,769.5 1027.4,777.3 1031.0,777.3 1034.7,777.3 1038.6,777.3 1043.5,777.3 1047.2,777.3 1050.7,777.3 1054.6,769.5 1059.0,769.5 1062.7,777.3 1067.2,777.3 1071.1,777.3 1075.7,761.6 1080.2,769.5 1082.8,777.3 1085.5,777.3 1088.0,777.3" fill="none" stroke="#ff0000" stroke-width="1" shape-rendering="crispEdges"/><polyline points="822.4,777.3 825.1,769.5 829.7,769.5 832.8,777.3 836.9,769.5 841.1,769.5 845.2,761.6 850.0,777.3 854.9,777.3 858.0,777.3 862.7,769.5 866.4,769.5 871.2,769.5 875.9,761.6 878.8,777.3 881.9,777.3 884.8,777.3 887.7,777.3 891.1,761.6 895.3,777.3 900.2,769.5 904.7,761.6 909.5,769.5 914.0,777.3 917.4,769.5 920.3,769.5 924.6,777.3 928.7,777.3 932.4,769.5 936.2,769.5 940.3,769.5 945.1,769.5 948.5,761.6 952.8,777.3 956.9,777.3 961.5,777.3 966.2,777.3 969.3,769.5 972.6,761.6 976.5,761.6 980.6,761.6 984.1,777.3 987.9,769.5 992.7,777.3 997.4,769.5 1001.7,777.3 1006.7,777.3 1009.4,777.3 1012.5,777.3 1016.8,777.3 1021.1,777.3 1025.8,777.3 1030.3,777.3 1033.9,777.3 1036.5,777.3 1039.5,777.3 1042.2,777.3 1044.7,777.3 1048.2,777.3 1052.7,777.3 1057.0,777.3 1061.3,769.5 1065.2,777.3 1068.1,777.3 1070.6,761.6 1074.7,777.3 1077.9,769.5 1080.5,769.5 1084.4,761.6 1088.0,777.3" fill="none" stroke="#88ccff" stroke-width="1" shape-rendering="crispEdges"/><polyline points="822.4,777.3 826.4,777.3 829.8,761.6 833.5,777.3 836.2,777.3 840.9,769.5 844.1,777.3 847.1,769.5 850.9,777.3 854.6,777.3 857.7,777.3 862.3,761.6 865.8,777.3 870.0,777.3 872.9,761.6 875.5,777.3 880.1,777.3 883.7,777.3 888.0,777.3 891.5,761.6 895.1,777.3 899.8,777.3 902.4,769.5 905.5,769.5 909.9,769.5 913.5,769.5 917.4,769.5 921.4,761.6 924.4,777.3 928.6,777.3 933.3,761.6 937.5,777.3 941.7,769.5 946.6,761.6 950.5,777.3 954.6,777.3 957.8,777.3 960.5,769.5 963.2,777.3 966.7,777.3 969.3,769.5 973.7,777.3 976.3,761.6 980.7,769.5 985.0,769.5 988.9,769.5 992.6,777.3 995.9,777.3 998.7,761.6 1001.2,777.3 1006.2,769.5 1010.2,777.3 1014.4,777.3 1017.7,777.3 1022.5,769.5 1025.9,777.3 1029.4,761.6 1033.6,777.3 1037.6,777.3 1040.8,777.3 1045.6,777.3 1050.6,761.6 1053.8,769.5 1056.4,777.3 1061.3,769.5 1063.9,761.6 1067.9,777.3 1070.5,769.5 1074.2,769.5 1078.2,769.5 1082.5,777.3 1086.5,777.3 1088.0,777.3" fill="none" stroke="#ff66aa" stroke-width="1" shape-rendering="crispEdges"/><polyline points="822.4,769.5 825.7,761.6 829.4,777.3 832.0,761.6 835.9,777.3 840.4,777.3 843.5,761.6 846.9,769.5 851.4,777.3 854.5,777.3 859.0,769.5 863.5,769.5 866.4,769.5 870.5,769.5 873.2,753.8 876.6,761.6 880.3,777.3 883.5,777.3 886.2,777.3 890.8,777.3 895.5,777.3 899.8,769.5 904.4,753.8 907.4,761.6 911.4,769.5 915.0,777.3 918.3,777.3 921.0,761.6 925.1,769.5 928.9,761.6 933.1,769.5 938.1,769.5 940.8,769.5 944.9,761.6 948.1,769.5 951.7,769.5 955.0,777.3 958.0,777.3 960.7,777.3 965.0,777.3 969.4,753.8 974.0,777.3 977.4,769.5 980.6,777.3 983.2,777.3 987.9,769.5 992.3,777.3 994.8,769.5 998.1,769.5 1002.6,761.6 1007.2,761.6 1011.4,777.3 1014.7,777.3 1019.4,777.3 1022.2,769.5 1026.2,777.3 1029.6,777.3 1033.0,769.5 1035.9,777.3 1040.9,777.3 1043.6,777.3 1047.2,777.3 1050.0,777.3 1052.6,769.5 1056.6,777.3 1060.6,761.6 1064.3,769.5 1067.6,777.3 1070.4,753.8 1073.7,761.6 1077.8,769.5 1081.5,769.5 1085.1,761.6 1087.7,769.5 1088.0,777.3" fill="none" stroke="#00ff00" stroke-width="1" shape-rendering="crispEdges"/><polyline points="822.4,777.3 822.4,738.1 823.6,746.0 824.9,753.8 825.8,753.8 826.7,777.3 828.5,777.3 829.2,761.6 832.2,761.6 834.7,777.3 836.6,777.3 837.2,761.6 840.2,761.6 841.5,769.5 844.6,746.0 846.4,746.0 849.5,769.5 852.6,777.3 854.4,777.3 858.1,753.8 859.3,761.6 861.2,753.8 863.6,738.1 865.5,746.0 866.7,738.1 868.0,746.0 870.4,738.1 872.9,746.0 875.3,753.8 876.6,753.8 880.3,777.3 886.4,777.3 891.4,753.8 895.0,777.3 896.9,777.3 897.5,753.8 900.0,753.8 902.4,761.6 906.1,746.0 909.8,769.5 913.5,769.5 915.4,777.3 916.6,777.3 918.4,746.0 920.3,746.0 923.4,777.3 924.6,769.5 927.1,769.5 932.0,738.1 935.1,761.6 939.4,761.6 940.6,746.0 942.5,714.7 944.3,722.5 945.5,761.6 948.6,738.1 950.5,753.8 952.9,777.3 953.7,777.3 955.5,777.3 958.0,769.5 960.5,761.6 962.3,769.5 964.8,777.3 968.5,761.6 970.3,730.3 971.6,722.5 972.8,730.3 974.6,738.1 975.9,753.8 977.7,769.5 980.2,753.8 983.3,753.8 985.1,769.5 986.9,761.6 989.4,761.6 991.9,769.5 993.7,777.3 995.6,746.0 996.8,722.5 998.6,706.8 999.9,730.3 1001.7,753.8 1004.2,769.5 1007.3,753.8 1010.3,753.8 1011.6,777.3 1019.0,777.3 1021.4,769.5 1024.5,769.5 1026.4,777.3 1030.7,753.8 1033.1,769.5 1035.0,777.3 1044.8,777.3 1048.5,769.5 1051.6,753.8 1054.7,769.5 1055.3,777.3 1057.1,769.5 1059.6,761.6 1062.1,753.8 1065.1,753.8 1068.2,761.6 1070.1,746.0 1073.2,738.1 1075.6,753.8 1076.8,769.5 1078.7,753.8 1080.5,746.0 1082.4,738.1 1084.2,746.0 1087.3,753.8 1087.9,777.3" fill="none" stroke="#ffffff" stroke-width="1" shape-rendering="crispEdges"/><line x1="821.6" y1="777.5" x2="1088.5" y2="777.5" stroke="#c8c8c8" stroke-width="1.2"/><line x1="1088.5" y1="542" x2="1088.5" y2="778" stroke="#c8c8c8" stroke-width="1.2"/><line x1="1084" y1="777.3" x2="1088.5" y2="777.3" stroke="#c8c8c8" stroke-width="1"/><line x1="1085" y1="738.15" x2="1088.5" y2="738.15" stroke="#c8c8c8" stroke-width="1"/><line x1="1084" y1="699.0" x2="1088.5" y2="699.0" stroke="#c8c8c8" stroke-width="1"/><line x1="1085" y1="659.8499999999999" x2="1088.5" y2="659.8499999999999" stroke="#c8c8c8" stroke-width="1"/><line x1="1084" y1="620.6999999999999" x2="1088.5" y2="620.6999999999999" stroke="#c8c8c8" stroke-width="1"/><line x1="1085" y1="581.55" x2="1088.5" y2="581.55" stroke="#c8c8c8" stroke-width="1"/><line x1="1084" y1="542.4" x2="1088.5" y2="542.4" stroke="#c8c8c8" stroke-width="1"/><text x="1091.5" y="546.4" font-size="11.3" fill="#c8c8c8" textLength="13.0" lengthAdjust="spacingAndGlyphs">30</text><text x="1091.5" y="624.7" font-size="11.3" fill="#c8c8c8" textLength="13.0" lengthAdjust="spacingAndGlyphs">20</text><text x="1091.5" y="703.0" font-size="11.3" fill="#c8c8c8" textLength="13.0" lengthAdjust="spacingAndGlyphs">10</text><line x1="822.4" y1="777.5" x2="822.4" y2="780" stroke="#c8c8c8" stroke-width="1"/><text x="820.2" y="792.4" font-size="11.3" fill="#c8c8c8" textLength="13.0" lengthAdjust="spacingAndGlyphs">60</text><line x1="866.75" y1="777.5" x2="866.75" y2="780" stroke="#c8c8c8" stroke-width="1"/><text x="864.5" y="792.4" font-size="11.3" fill="#c8c8c8" textLength="13.0" lengthAdjust="spacingAndGlyphs">50</text><line x1="911.1" y1="777.5" x2="911.1" y2="780" stroke="#c8c8c8" stroke-width="1"/><text x="908.9" y="792.4" font-size="11.3" fill="#c8c8c8" textLength="13.0" lengthAdjust="spacingAndGlyphs">40</text><line x1="955.45" y1="777.5" x2="955.45" y2="780" stroke="#c8c8c8" stroke-width="1"/><text x="953.2" y="792.4" font-size="11.3" fill="#c8c8c8" textLength="13.0" lengthAdjust="spacingAndGlyphs">30</text><line x1="999.8" y1="777.5" x2="999.8" y2="780" stroke="#c8c8c8" stroke-width="1"/><text x="997.6" y="792.4" font-size="11.3" fill="#c8c8c8" textLength="13.0" lengthAdjust="spacingAndGlyphs">20</text><line x1="1044.15" y1="777.5" x2="1044.15" y2="780" stroke="#c8c8c8" stroke-width="1"/><text x="1042.0" y="792.4" font-size="11.3" fill="#c8c8c8" textLength="13.0" lengthAdjust="spacingAndGlyphs">10</text><line x1="1088.5" y1="777.5" x2="1088.5" y2="780" stroke="#c8c8c8" stroke-width="1"/><text x="1087.5" y="792.4" font-size="11.3" fill="#c8c8c8" textLength="6.3" lengthAdjust="spacingAndGlyphs">0</text><text x="1100.5" y="792.4" font-size="11.3" fill="#c8c8c8" textLength="18.2" lengthAdjust="spacingAndGlyphs">min</text></svg>
</body></html>
